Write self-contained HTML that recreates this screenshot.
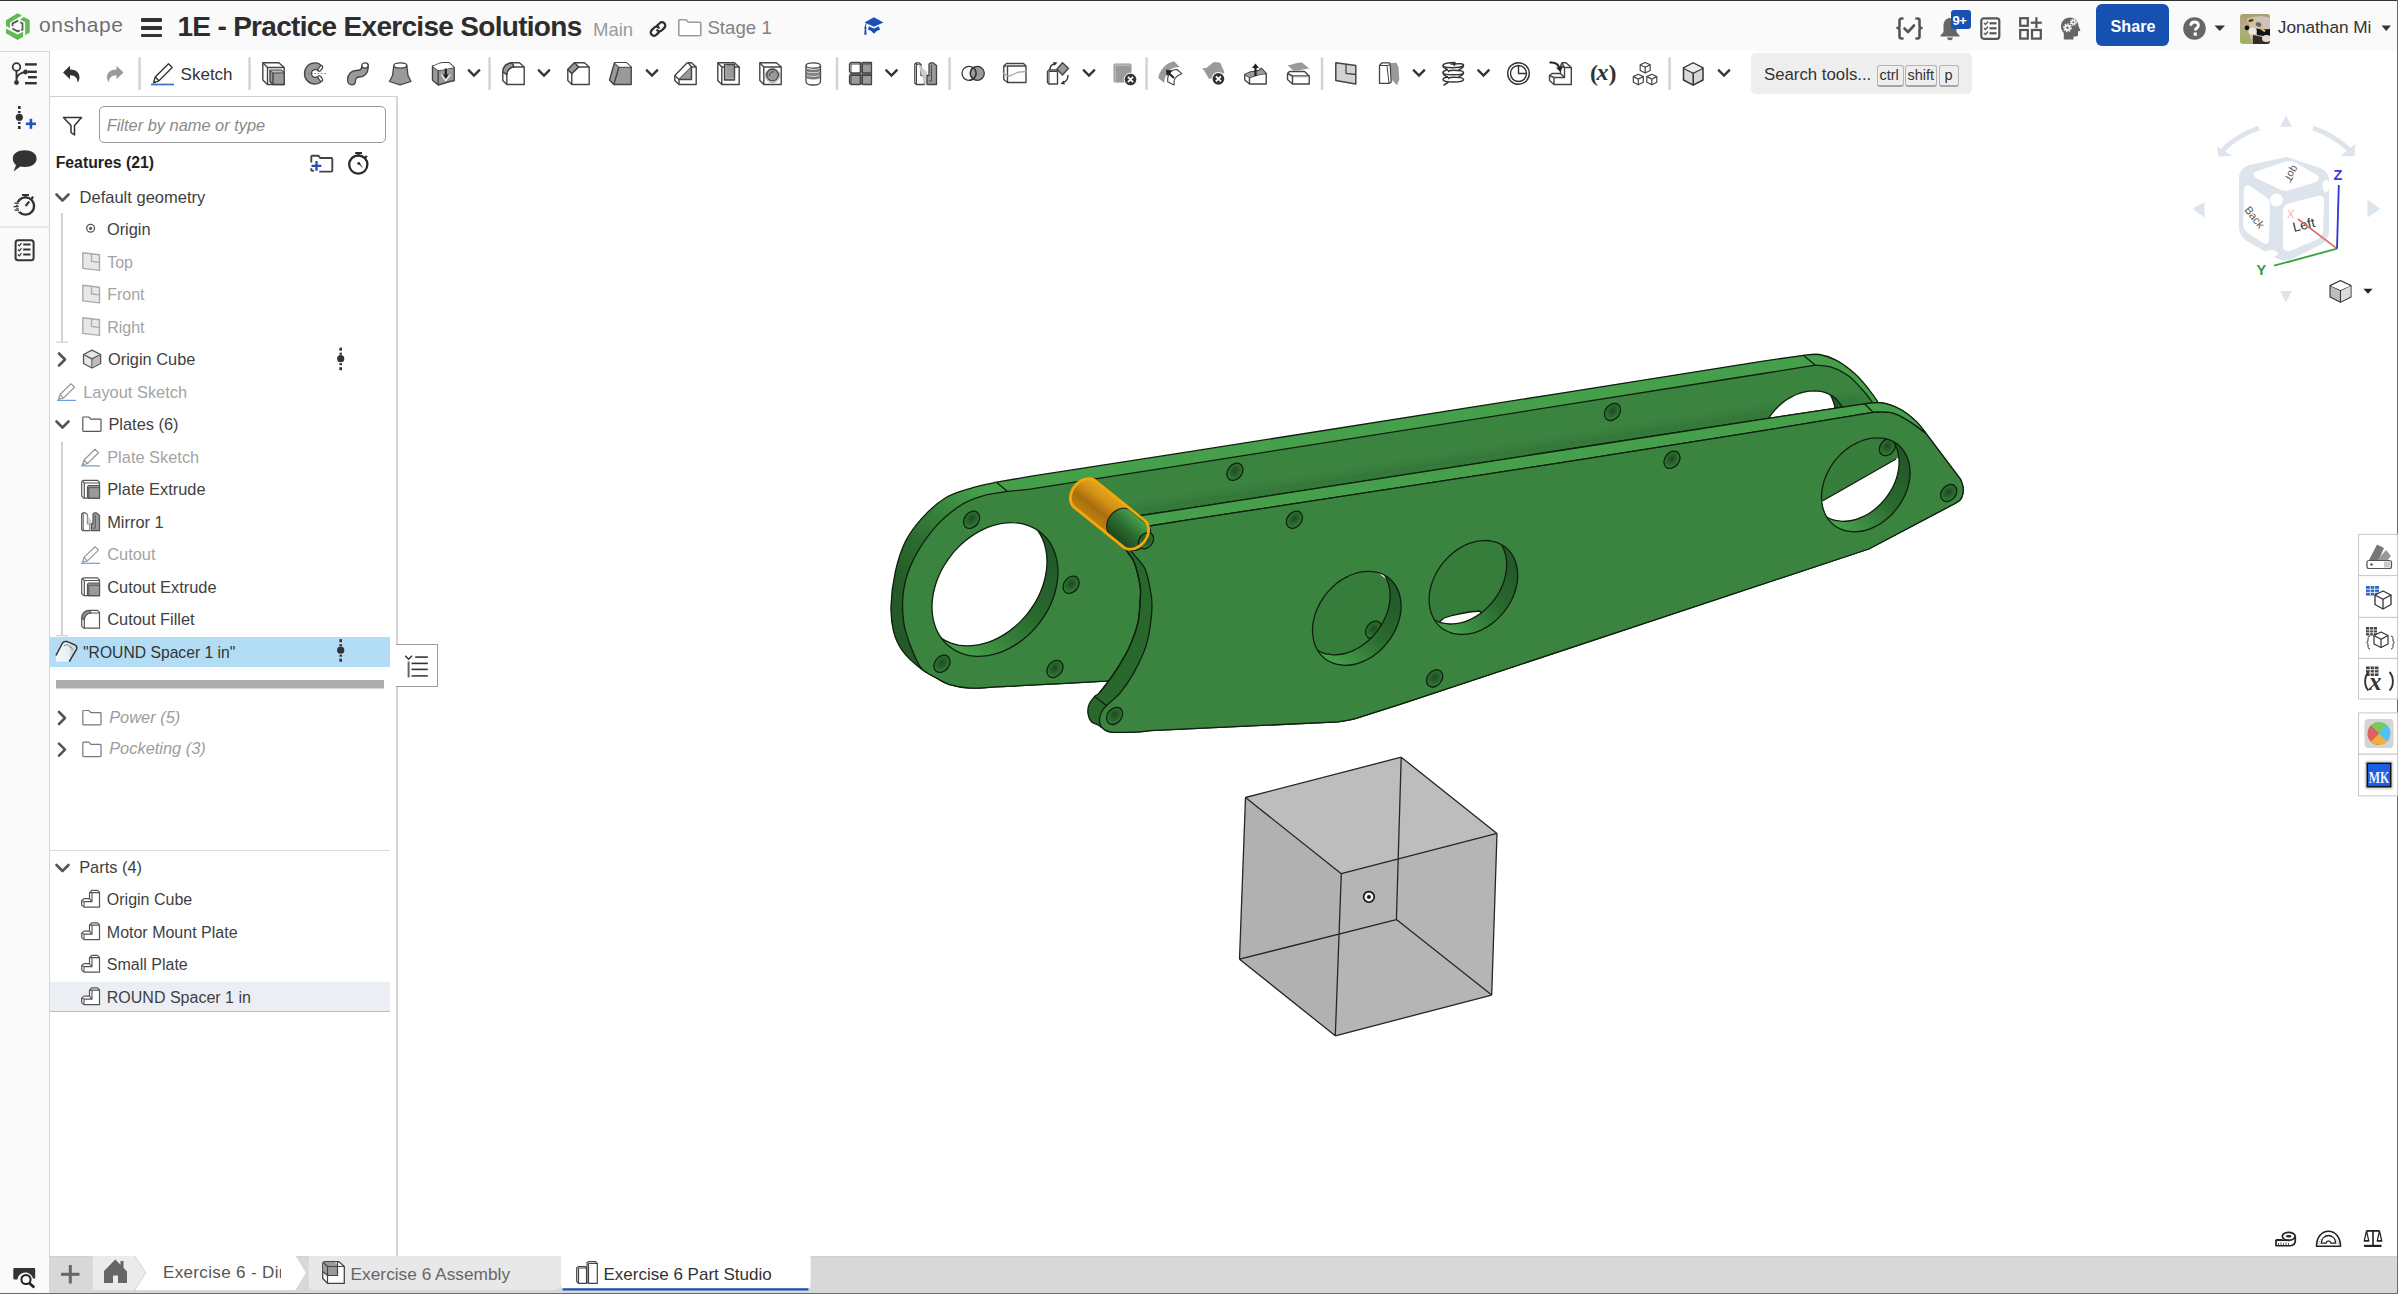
<!DOCTYPE html>
<html><head><meta charset="utf-8">
<style>
html,body{margin:0;padding:0;}
body{width:2398px;height:1294px;position:relative;overflow:hidden;background:#fff;font-family:"Liberation Sans",sans-serif;color:#333;}
.a{position:absolute;}
.t{position:absolute;white-space:nowrap;line-height:1;}
svg{position:absolute;overflow:visible;}
</style></head><body>
<div class="a" style="left:0px;top:0px;width:2398px;height:51px;background:#fafafa;"></div>
<div class="a" style="left:0px;top:0px;width:2398px;height:1px;background:#333;"></div>
<div class="a" style="left:0px;top:51px;width:49px;height:1243px;background:#fafafa;"></div>
<div class="a" style="left:0px;top:51px;width:49px;height:1px;background:#d6d6d6;"></div>
<div class="a" style="left:49px;top:51px;width:1px;height:1243px;background:#d6d6d6;"></div>
<div class="a" style="left:396px;top:96px;width:2px;height:1160px;background:#d6d6d6;"></div>
<div class="a" style="left:50px;top:1256px;width:2348px;height:37px;background:#d8d8d8;"></div>
<div class="a" style="left:0px;top:1293px;width:2398px;height:1px;background:#6b6b6b;"></div>
<div class="a" style="left:2397px;top:0px;width:1px;height:1294px;background:#6b6b6b;"></div>
<svg style="left:0px;top:8px;" width="36" height="36" viewBox="0 0 36 36"><g fill="#5fba4f">
<path d="M6,12.3 L17.5,5.3 L22,7.5 L10,14.4 L10,20 L6,18.1 Z"/>
<path d="M20,11.4 L23.7,8.9 L29.7,12 L29.7,24.4 L25.2,27.2 L25.2,14.3 Z"/>
<path d="M6,20.4 L17.5,26.4 L23.1,23.7 L23.1,28.8 L17.5,31.9 L6,25.3 Z"/>
</g>
<g fill="none" stroke="#5a5a5a" stroke-width="1.8" stroke-linejoin="miter">
<path d="M12.6,18.2 L12.6,15.4 L18.2,12.6"/>
<path d="M20.2,14.2 L22.5,15.5 L22.5,21.6 L21.2,22.3"/>
<path d="M12.4,20.5 L17.6,23.4 L19.8,22.2"/>
</g></svg>
<div class="t" style="left:39.00px;top:13.50px;font-size:21px;color:#707070;letter-spacing:0.55px;">onshape</div>
<div class="a" style="left:141px;top:18px;width:21px;height:3.5px;background:#333;border-radius:1px;"></div>
<div class="a" style="left:141px;top:26px;width:21px;height:3.5px;background:#333;border-radius:1px;"></div>
<div class="a" style="left:141px;top:33.6px;width:21px;height:3.5px;background:#333;border-radius:1px;"></div>
<div class="t" style="left:177.50px;top:13.00px;font-size:28px;color:#2d2d2d;font-weight:bold;letter-spacing:-0.7px;">1E - Practice Exercise Solutions</div>
<div class="t" style="left:593.00px;top:20.80px;font-size:18.5px;color:#9a9a9a;">Main</div>
<svg style="left:647px;top:18px;" width="22" height="22" viewBox="0 0 22 22"><g fill="none" stroke="#2f2f2f" stroke-width="2.3" stroke-linecap="round">
<path d="M10.2,7.6 L12.6,5.2 a3.3,3.3 0 0 1 4.7,4.7 L14.9,12.3 a3.3,3.3 0 0 1 -4.7,0"/>
<path d="M11.8,14.4 L9.4,16.8 a3.3,3.3 0 0 1 -4.7,-4.7 L7.1,9.7 a3.3,3.3 0 0 1 4.7,0"/>
</g></svg>
<svg style="left:677px;top:18px;" width="26" height="20" viewBox="0 0 26 20"><path d="M1.8,2.8 a1,1 0 0 1 1,-1 h6.2 l2.4,2.4 h11.4 a1,1 0 0 1 1,1 v11.6 a1,1 0 0 1 -1,1 h-20 a1,1 0 0 1 -1,-1 z" fill="#fff" stroke="#9b9b9b" stroke-width="1.6"/></svg>
<div class="t" style="left:707.40px;top:18.80px;font-size:18.7px;color:#828282;">Stage 1</div>
<svg style="left:0px;top:0px;" width="900" height="40" viewBox="0 0 900 40"><g fill="#1a4fb5">
<path d="M864.5,22.4 L874,17.2 L883.4,22.4 L874,26.8 Z"/>
<path d="M868.8,26.2 L874,28.4 L878.8,26.2 L880,29.8 L877,30.8 L874,33.8 L871,30.8 L868.1,29.8 Z"/>
<path d="M866.4,23.2 L867.2,23.6 C866.2,24.6 865.9,25.5 866,26.5 L866.6,27.8 L866.2,29.5 L866.6,34.8 L864.2,34.8 L864.7,29.5 L864.3,27.8 L865,26 C865,25 865.5,24 866.4,23.2 Z"/>
</g></svg>
<svg style="left:1896px;top:16px;" width="28" height="26" viewBox="0 0 28 26"><g fill="none" stroke="#555" stroke-width="2.6" stroke-linecap="round" stroke-linejoin="round">
<path d="M6.5,2.5 h-1 a2,2 0 0 0 -2,2 v5.5 a2,2 0 0 1 -2,2 a2,2 0 0 1 2,2 v6.5 a2,2 0 0 0 2,2 h1"/>
<path d="M20.5,2.5 h1 a2,2 0 0 1 2,2 v5.5 a2,2 0 0 0 2,2 a2,2 0 0 0 -2,2 v6.5 a2,2 0 0 1 -2,2 h-1"/>
<path d="M8.5,12.5 L12,16 L18,9.5"/>
</g></svg>
<svg style="left:1938px;top:15px;" width="26" height="27" viewBox="0 0 26 27"><path d="M12,3 C7.5,3 5.5,7 5.5,11 L5.5,17 L2.5,20.5 L2.5,21.5 L21.5,21.5 L21.5,20.5 L18.5,17 L18.5,11 C18.5,7 16.5,3 12,3 Z" fill="#666"/><path d="M9.2,22.5 a2.8,2.8 0 0 0 5.6,0 z" fill="#666"/></svg>
<div class="a" style="left:1951px;top:9.5px;width:19.5px;height:19.5px;background:#1a50b0;border-radius:3px;"></div>
<div class="t" style="left:1952.60px;top:14.20px;font-size:13px;color:#fff;font-weight:bold;letter-spacing:-0.5px;">9+</div>
<svg style="left:1979px;top:16px;" width="24" height="25" viewBox="0 0 24 25"><rect x="2.3" y="2.3" width="18" height="20.5" rx="2.5" fill="none" stroke="#555" stroke-width="2.2"/>
<g fill="none" stroke="#555" stroke-width="1.3"><path d="M5,7 l1.5,1.5 l2.5,-3"/><path d="M5,12 l1.5,1.5 l2.5,-3"/><path d="M5,17 l1.5,1.5 l2.5,-3"/></g>
<g fill="#555"><rect x="10.5" y="6.2" width="7" height="2.2"/><rect x="10.5" y="11.2" width="7" height="2.2"/><rect x="10.5" y="16.2" width="7" height="2.2"/></g></svg>
<svg style="left:2018px;top:16px;" width="26" height="26" viewBox="0 0 26 26"><g fill="none" stroke="#555" stroke-width="2.2">
<rect x="2.2" y="2.2" width="7.6" height="7.6"/><rect x="2.2" y="14" width="7.6" height="8.6"/><rect x="14" y="14" width="8.8" height="8.6"/></g>
<g fill="#555"><rect x="17.3" y="1.2" width="2.2" height="11"/><rect x="12.8" y="5.6" width="11" height="2.2"/></g></svg>
<svg style="left:2059px;top:15px;" width="24" height="27" viewBox="0 0 24 27"><path d="M11,2.5 C5.5,2.5 2,6.5 2,11.5 C2,14.5 3.3,16.5 4.8,18 L4.8,24.5 L14.5,24.5 L14.5,21.5 L17,21.5 C18.5,21.5 19,20.5 19,19.5 L19,16.5 L21.5,15.5 L19.5,11 C19.2,6 15.8,2.5 11,2.5 Z" fill="#666"/>
<g fill="#f9f9f9"><circle cx="8.5" cy="12.8" r="3.3"/><circle cx="14.3" cy="7.3" r="2.5"/></g>
<g fill="#666"><circle cx="8.5" cy="12.8" r="1.3"/><circle cx="14.3" cy="7.3" r="1"/></g>
<g stroke="#f9f9f9" stroke-width="1.2" fill="none"><circle cx="8.5" cy="12.8" r="3.9" stroke-dasharray="1.5 1.5"/><circle cx="14.3" cy="7.3" r="3" stroke-dasharray="1.2 1.2"/></g></svg>
<div class="a" style="left:2096px;top:4px;width:73px;height:41.5px;background:#1650b0;border-radius:6px;"></div>
<div class="t" style="left:2110.50px;top:17.50px;font-size:16.2px;color:#fff;font-weight:bold;">Share</div>
<svg style="left:2182px;top:16px;" width="25" height="25" viewBox="0 0 25 25"><circle cx="12.5" cy="12.5" r="11.3" fill="#666"/>
<path d="M8.8,9.8 C8.8,7.3 10.5,6 12.6,6 C14.8,6 16.4,7.4 16.4,9.4 C16.4,11.6 14,12.2 13.5,13.5 L13.5,14.6" fill="none" stroke="#fff" stroke-width="2.8"/>
<rect x="11.6" y="16.5" width="3.3" height="3.2" fill="#fff"/></svg>
<svg style="left:2214px;top:25px;" width="12" height="7" viewBox="0 0 12 7"><path d="M0.5,0.5 L11,0.5 L5.75,6 Z" fill="#333"/></svg>
<div class="a" style="left:2240px;top:14px;width:30px;height:30px;border-radius:3px;overflow:hidden;background:linear-gradient(180deg,#a9a070 0%,#bba88c 35%,#a8ae72 70%,#9fb060 100%);">
<svg style="left:0;top:0" width="30" height="30"><path d="M13,3 C18,1.5 26,2 30,4 L30,30 L13,30 C11,25 8.5,21 9,16 C9.5,10 10,5 13,3Z" fill="#cdc3b8"/><path d="M16,14.5 C21,15.5 26,15.5 30,15 L30,23 C26,22 21,22 17,21Z" fill="#141210"/><path d="M13,21 C18,22 24,23 30,26 L30,30 L13,30 C12.5,27 12.5,24 13,21Z" fill="#352b25"/><ellipse cx="26.5" cy="24.5" rx="4.5" ry="3.5" fill="#e2dad2"/><ellipse cx="12.5" cy="17" rx="4.2" ry="3.6" fill="#ede5d8"/><circle cx="7" cy="13.8" r="2.4" fill="#111"/><path d="M14,8.5 L25,17.5" stroke="#d4bb86" stroke-width="2.2"/><ellipse cx="11" cy="6.5" rx="3.4" ry="2.2" fill="#3a3d48" stroke="#d9c08a" stroke-width="1.6" transform="rotate(-15 11 6.5)"/><ellipse cx="18.5" cy="10.5" rx="3.6" ry="2.8" fill="#5a6478" stroke="#d9c08a" stroke-width="1.6" transform="rotate(20 18.5 10.5)"/></svg></div>
<div class="t" style="left:2277.80px;top:18.80px;font-size:17.2px;color:#333;">Jonathan Mi</div>
<svg style="left:2381px;top:25px;" width="11" height="7" viewBox="0 0 11 7"><path d="M0.5,0.5 L10,0.5 L5.25,6 Z" fill="#333"/></svg>
<div class="a" style="left:50px;top:96px;width:347px;height:1px;background:#d0d0d0;"></div>
<svg style="left:0;top:0" width="2398" height="100" viewBox="0 0 2398 100"><g transform="translate(62.5,64)"><path d="M0.5,8.5 L7.5,1.8 L7.5,5.6 C13,5.4 17,8.3 17,13.6 C17,15.8 16,17.5 14.8,18.3 C15.3,14.2 12.5,11.2 7.5,11.3 L7.5,15.2 Z" fill="#333"/></g><g transform="translate(107,64)"><path d="M16.5,8.5 L9.5,1.8 L9.5,5.6 C4,5.4 0,8.3 0,13.6 C0,15.8 1,17.5 2.2,18.3 C1.7,14.2 4.5,11.2 9.5,11.3 L9.5,15.2 Z" fill="#9a9a9a"/></g><g transform="translate(151,63)"><path d="M2.5,20 L4.2,14 L17.5,0.8 L21.2,4.5 L8,17.8 Z M4.2,14 L8,17.8 M6,15.8" fill="#fff" stroke="#333" stroke-width="1.3" stroke-linejoin="round"/><path d="M2.5,20 L3.2,17.4 L5.1,19.3 Z" fill="#333"/><rect x="0" y="20.6" width="23" height="1.8" fill="#3f77d0"/></g><g transform="translate(262,62)"><path d="M0.8,0.8 L16.8,0.8 L22.2,5.5 L22.2,22.5 L5.5,22.5 L0.8,18 Z" fill="#fff" stroke="#444" stroke-width="1.4" stroke-linejoin="round"/><path d="M5.5,5.5 L22.2,5.5 M5.5,5.5 L5.5,22.5 M0.8,0.8 L5.5,5.5" fill="none" stroke="#444" stroke-width="1.4" stroke-linejoin="round"/><path d="M8,8.2 L19.5,8.2 L22.2,10.8 L22.2,22.5 L11,22.5 L8,19.8 Z" fill="#9a9a9a" stroke="#444" stroke-width="1.4" stroke-linejoin="round"/><path d="M11,10.8 L22.2,10.8 M11,10.8 L11,22.5 M8,8.2 L11,10.8" fill="none" stroke="#444" stroke-width="1.4" stroke-linejoin="round"/><path d="M8.5,8.6 L19.3,8.6 L21.5,10.5 L11,10.5Z" fill="#bdbdbd"/></g><g transform="translate(304,62)"><path d="M18.5,5 C16.5,2 13.5,0.8 11,0.8 C5,0.8 0.5,5.5 0.5,11.5 C0.5,17.5 5,22 11,22 C13.5,22 16.5,21 18.5,18 L14.5,14.5 C13.5,15 12.5,15.3 11.5,15.3 C9.3,15.3 7.5,13.6 7.5,11.5 C7.5,9.4 9.3,7.7 11.5,7.7 C12.5,7.7 13.5,8 14.5,8.6 Z" fill="#9a9a9a" stroke="#444" stroke-width="1.3"/><ellipse cx="16.3" cy="6.5" rx="1.6" ry="3.2" transform="rotate(35 16.3 6.5)" fill="#fff" stroke="#444" stroke-width="1.2"/><ellipse cx="16.3" cy="16.5" rx="1.6" ry="3.2" transform="rotate(-35 16.3 16.5)" fill="#fff" stroke="#444" stroke-width="1.2"/><path d="M0.5,11.5 L23,11.5" stroke="#555" stroke-width="0.8" stroke-dasharray="1.5 1.8"/></g><g transform="translate(347,61.5)"><path d="M17.5,3.5 L21.2,3.5 L21.2,6 C21.2,12 17,15.5 12.5,15.5 C9.5,15.5 8.5,17 8.5,19.5 C8.5,22 7,23.3 4.8,23.3 C2.5,23.3 0.5,21.5 0.5,18.5 C0.5,12.5 4.5,9 9,9 C13,9 14.7,8 14.7,5 Z" fill="#9a9a9a" stroke="#444" stroke-width="1.3" stroke-linejoin="round"/><ellipse cx="18" cy="4" rx="3.2" ry="2.6" fill="#fff" stroke="#444" stroke-width="1.3"/></g><g transform="translate(389,61.5)"><path d="M4.8,4 L3.5,14 L0.5,20 L11,23.3 L22,20 L19,14 L17.8,4 Z" fill="#9a9a9a" stroke="#444" stroke-width="1.3" stroke-linejoin="round"/><ellipse cx="11.3" cy="4" rx="6.5" ry="2.6" fill="#fff" stroke="#444" stroke-width="1.3"/></g><g transform="translate(432,62)"><path d="M0.5,4 C4,4 6,1 11,0.8 L17.2,0.8 L22.2,5.5 L22.2,18.8 C17,19.5 14,20.8 6.2,23 L0.5,18.2 Z" fill="#9a9a9a" stroke="#444" stroke-width="1.4" stroke-linejoin="round"/><path d="M0.5,4 L6.2,8.5 L6.2,23 M6.2,8.5 C12,8 17,6 22.2,5.5" fill="none" stroke="#444" stroke-width="1.4" stroke-linejoin="round"/><path d="M0.8,4.2 C4,4 6,1.3 11,1.1 L17,1.1 L21.8,5.5 C17,6 12,8 6.2,8.2 Z" fill="#fff"/><path d="M9.3,12.5 L13.8,18.5 L18.3,12.5" fill="none" stroke="#fff" stroke-width="1.2"/><path d="M13.8,6.5 L13.8,14" stroke="#222" stroke-width="2.2"/><path d="M10.8,12.5 L13.8,16.8 L16.8,12.5 Z" fill="#222"/></g><g transform="translate(502,62)"><path d="M0.8,10 C0.8,4.5 4.5,0.8 10,0.8 L17.5,0.8 L22.2,5 L22.2,22.5 L4.8,22.5 L0.8,18.5 Z" fill="#fff" stroke="#444" stroke-width="1.4" stroke-linejoin="round"/><path d="M4.8,22.5 L4.8,12.5 C4.8,8.5 8,5 12,5 L22.2,5 M0.8,10 L4.8,12.5 M10,0.8 L12,5" fill="none" stroke="#444" stroke-width="1.4" stroke-linejoin="round"/><path d="M1,10 C1,4.6 4.6,1 10,1 L12,5 C8,5 4.8,8.5 4.8,12.5 Z" fill="#9a9a9a" stroke="#444" stroke-width="1.4" stroke-linejoin="round"/></g><g transform="translate(567,62)"><path d="M0.8,7.5 L7.5,0.8 L17.5,0.8 L22.2,5 L22.2,22.5 L4.8,22.5 L0.8,18.5 Z" fill="#fff" stroke="#444" stroke-width="1.4" stroke-linejoin="round"/><path d="M4.8,22.5 L4.8,11.5 L11.5,5 L22.2,5 M0.8,7.5 L4.8,11.5 M7.5,0.8 L11.5,5" fill="none" stroke="#444" stroke-width="1.4" stroke-linejoin="round"/><path d="M0.8,7.5 L7.5,0.8 L11.5,5 L4.8,11.5 Z" fill="#9a9a9a" stroke="#444" stroke-width="1.4" stroke-linejoin="round"/></g><g transform="translate(609,62)"><path d="M5.5,0.8 L17.5,0.8 L22.2,5 L22.2,22.5 L4.8,22.5 L0.5,18 Z" fill="#9a9a9a" stroke="#444" stroke-width="1.4" stroke-linejoin="round"/><path d="M4.8,22.5 L10,5 L22.2,5 M5.5,0.8 L10,5" fill="none" stroke="#444" stroke-width="1.4" stroke-linejoin="round"/><path d="M6,1.1 L17.3,1.1 L21.6,4.7 L10,4.7 Z" fill="#fff"/></g><g transform="translate(674,62)"><path d="M0.8,13.5 L13,1 L14.5,0.8 L17.5,0.8 L22.2,5 L22.2,22.5 L5,22.5 L0.8,18.5 Z" fill="#fff" stroke="#444" stroke-width="1.4" stroke-linejoin="round"/><path d="M5,22.5 L5,17.5 L17.5,5 L22.2,5 M0.8,13.5 L5,17.5 M14.5,0.8 L17.5,5 M17.5,5 L17.5,17.5 L5,17.5" fill="none" stroke="#444" stroke-width="1.4" stroke-linejoin="round"/><path d="M6,16.5 L16.5,6 L16.5,16.5 Z" fill="#9a9a9a" stroke="#777" stroke-width="0.8"/></g><g transform="translate(717,62)"><path d="M0.8,0.8 L17.5,0.8 L22.2,5 L22.2,22.5 L4.8,22.5 L0.8,18.5 Z" fill="#fff" stroke="#444" stroke-width="1.4" stroke-linejoin="round"/><path d="M4.8,22.5 L4.8,5 L22.2,5 M0.8,0.8 L4.8,5" fill="none" stroke="#444" stroke-width="1.4" stroke-linejoin="round"/><path d="M7.5,2.5 L17.5,2.5 L17.5,18 L7.5,18 Z" fill="#9a9a9a" stroke="#444" stroke-width="1.4" stroke-linejoin="round"/><path d="M9,2.5 L9,16.5 L17.5,16.5" fill="none" stroke="#bbb" stroke-width="0.8"/></g><g transform="translate(759,62)"><path d="M0.8,0.8 L17.5,0.8 L22.2,5 L22.2,22.5 L4.8,22.5 L0.8,18.5 Z" fill="#fff" stroke="#444" stroke-width="1.4" stroke-linejoin="round"/><path d="M4.8,22.5 L4.8,5 L22.2,5 M0.8,0.8 L4.8,5" fill="none" stroke="#444" stroke-width="1.4" stroke-linejoin="round"/><circle cx="13.5" cy="13.5" r="7" fill="#fff" stroke="#999" stroke-width="1"/><circle cx="13.5" cy="13" r="5.8" fill="#9a9a9a" stroke="#444" stroke-width="1.3"/><path d="M10.5,14 C10.5,11 12,9.5 15,9.8" fill="none" stroke="#444" stroke-width="1"/></g><g transform="translate(805.5,62)"><path d="M0.5,3.5 L0.5,19.5 C0.5,21.8 3,23 7.7,23 C12.4,23 15,21.8 15,19.5 L15,3.5" fill="#fff" stroke="#444" stroke-width="1.3"/><ellipse cx="7.7" cy="3.5" rx="7.2" ry="2.7" fill="#fff" stroke="#444" stroke-width="1.3"/><g fill="#888" stroke="#555" stroke-width="0.6"><path d="M0.8,6.5 C3,8.6 12.5,8.6 14.7,6.5 L14.7,8.5 C12.5,10.6 3,10.6 0.8,8.5Z"/><path d="M0.8,10 C3,12.1 12.5,12.1 14.7,10 L14.7,12 C12.5,14.1 3,14.1 0.8,12Z"/><path d="M0.8,13.5 C3,15.6 12.5,15.6 14.7,13.5 L14.7,15.5 C12.5,17.6 3,17.6 0.8,15.5Z"/></g></g><g transform="translate(849,62)"><g stroke="#444" stroke-width="1.3" stroke-linejoin="round"><path d="M0.5,2 L2,0.5 L11.3,0.5 L11.3,11 L2,11 L0.5,9.5Z" fill="#fff"/><path d="M12,2 L13.5,0.5 L22.5,0.5 L22.5,11 L13.5,11 L12,9.5Z" fill="#9a9a9a"/><path d="M0.5,13.5 L2,12 L11.3,12 L11.3,22.5 L2,22.5 L0.5,21Z" fill="#9a9a9a"/><path d="M12,13.5 L13.5,12 L22.5,12 L22.5,22.5 L13.5,22.5 L12,21Z" fill="#9a9a9a"/></g><g fill="none" stroke="#444" stroke-width="1"><path d="M2,2 L11.3,2 M2,2 L2,11"/><path d="M13.5,2 L22.5,2 M13.5,2 L13.5,11"/><path d="M2,13.5 L11.3,13.5 M2,13.5 L2,22.5"/><path d="M13.5,13.5 L22.5,13.5 M13.5,13.5 L13.5,22.5"/></g></g><g transform="translate(914,62)"><path d="M0.8,2 L2.5,0.8 L5,0.8 L7,2.5 L7,13.5 L10.5,13.5 L10.5,22.5 L2.5,22.5 L0.8,21Z" fill="#fff" stroke="#444" stroke-width="1.3" stroke-linejoin="round"/><path d="M2.5,0.8 L2.5,22.5 M2.5,2.5 L7,2.5" fill="none" stroke="#444" stroke-width="1"/><path d="M4,1 L13,10 L13,21 L10.5,22.5" fill="#ccc" stroke="none" opacity="0.9"/><path d="M15,2 L16.7,0.8 L19,0.8 L22.5,3.5 L22.5,22.5 L13,22.5 L13,13.5 L15,13.5Z" fill="#9a9a9a" stroke="#444" stroke-width="1.3" stroke-linejoin="round"/><path d="M17.5,3 L17.5,19 L15,19" fill="none" stroke="#444" stroke-width="0.9"/></g><g transform="translate(961.5,61.5)"><circle cx="7.5" cy="11.8" r="7" fill="#fff" stroke="#333" stroke-width="1.3"/><circle cx="15.8" cy="11.8" r="7" fill="#9a9a9a" stroke="#333" stroke-width="1.3"/><path d="M11.7,6.1 A7,7 0 0 1 11.7,17.5 A7,7 0 0 1 11.7,6.1Z" fill="#9a9a9a" stroke="#333" stroke-width="1.3"/><path d="M14.5,11.8 A7,7 0 0 1 7.5,18.8" fill="none" stroke="#333" stroke-width="1.3"/></g><g transform="translate(1003,62)"><path d="M0.8,4 L3.5,1.5 L20.5,1.5 L23,4 L23,20.5 L4.5,20.5 L0.8,17.5 Z" fill="#fff" stroke="#444" stroke-width="1.4" stroke-linejoin="round"/><path d="M4.5,20.5 L4.5,4 L23,4 M0.8,4 L3.5,4" fill="none" stroke="#444" stroke-width="1.4" stroke-linejoin="round"/><path d="M-0.5,10 C2,12 3,14.5 6,14 C10,13.5 13,10 17,10 L23.5,9.5" fill="none" stroke="#aaa" stroke-width="1.3"/></g><g transform="translate(1046.5,62)"><path d="M1,9.5 L2.5,8 L11,8 L11,22 L2.5,22 L1,20.5Z" fill="#fff" stroke="#444" stroke-width="1.4" stroke-linejoin="round"/><path d="M2.5,9.5 L11,9.5 M2.5,9.5 L2.5,22" fill="none" stroke="#444" stroke-width="1"/><path d="M16,0.8 L22,6.2 L16,13 L10.5,7 Z" fill="#9a9a9a" stroke="#444" stroke-width="1.4" stroke-linejoin="round"/><path d="M3.5,7.5 C3.5,4 5.5,2.5 8,2" fill="none" stroke="#333" stroke-width="1.4"/><path d="M6.5,0 L11,0.5 L8,3.8Z" fill="#333"/><path d="M21.5,13 C21.5,17 20,19.5 16.5,20.5" fill="none" stroke="#333" stroke-width="1.4"/><path d="M18.5,22.5 L14,22 L17,18.5Z" fill="#333"/></g><g transform="translate(1113,63)"><path d="M0.5,1.5 L1.8,0.5 L17.5,0.5 L18.5,1.5 L18.5,19.5 L1.8,19.5 L0.5,18.5Z" fill="#9a9a9a"/><path d="M1.8,1.5 L18.5,1.5 L18.5,3 L3,3 L3,19.5 L1.8,19.5Z" fill="#bbb"/><circle cx="17.5" cy="16.5" r="6.3" fill="#333" stroke="#fff" stroke-width="1"/><path d="M14.9,13.9 L20.1,19.1 M20.1,13.9 L14.9,19.1" stroke="#fff" stroke-width="1.7"/></g><g transform="translate(1157.5,61.5)"><path d="M0.7,16.4 C2,9 8,1.5 16.6,-0.3 L22.3,5.4 C15.5,5.5 10.5,8.5 8.8,13.5 C7.5,16 6.5,20 6.7,21.4 Z" fill="#9a9a9a"/><path d="M10.2,16.4 C11,12 13.5,9.5 16.4,8.2 L19.5,8 L24.3,12.2 C20.5,13.5 17.5,15.5 16.7,19 L16.5,23.5 L10.2,20.3 Z" fill="#fff" stroke="#444" stroke-width="1.1" stroke-linejoin="round"/><path d="M10.7,11 L16.4,16.5" stroke="#222" stroke-width="2.1"/><path d="M8.5,8.2 L15.2,9 L9.2,14.6 Z" fill="#222"/></g><g transform="translate(1199.5,62)"><path d="M2.6,6.1 C4.5,6.3 6,6 7.2,5.8 C10,4 12.5,0.3 15.7,0.1 L20.7,0.8 C22,3.5 23.5,7 25,10.4 L18,16 L9.4,16.8 C7,13 5,9 2.6,6.1 Z" fill="#9a9a9a"/><circle cx="18.9" cy="16.8" r="6.9" fill="#fff"/><circle cx="18.9" cy="16.8" r="5.9" fill="#333"/><path d="M16.4,14.3 L21.4,19.3 M21.4,14.3 L16.4,19.3" stroke="#fff" stroke-width="1.8"/></g><g transform="translate(1244,62)"><path d="M0.8,12.5 C4,11 6.5,9.5 10,9.5 L13,9 C15,9 16,8 16.5,6.5 L17.5,6.5 L22.2,11.5 L22.2,22 L5.5,22 L0.8,18Z" fill="#fff" stroke="#444" stroke-width="1.4" stroke-linejoin="round"/><path d="M5.5,22 L5.5,15.5 C8,15 12,13 16,12.3 L22.2,11.5 M0.8,12.5 L5.5,15.5" fill="none" stroke="#444" stroke-width="1.4" stroke-linejoin="round"/><path d="M1.3,12.6 C4,11 6.5,10 10,10 L13,9.5 C15,9.4 16,8.3 16.7,7 L21.7,11.5 C12,12.5 8,15 5.5,15.2Z" fill="#9a9a9a"/><path d="M11.5,14 L11.5,5" stroke="#222" stroke-width="2.3"/><path d="M8,6 L11.5,1.5 L15,6Z" fill="#222"/></g><g transform="translate(1287,62)"><path d="M0.5,11.5 L2.5,9.5 L17.5,9.5 L22.2,14 L22.2,22 L5.5,22 L0.5,17.5Z" fill="#fff" stroke="#444" stroke-width="1.4" stroke-linejoin="round"/><path d="M5.5,22 L5.5,14 L22.2,14 M0.5,11.5 L5.5,14" fill="none" stroke="#444" stroke-width="1.4" stroke-linejoin="round"/><path d="M6.3,15 L21.5,15" stroke="#ccc" stroke-width="1"/><path d="M0.5,3.2 C5,3 9,0.5 15,0.5 L22.2,6.5 C17,7 13,8.5 6.5,8.8 Z" fill="#9a9a9a"/></g><g transform="translate(1335,62)"><path d="M0.8,0.8 L20.8,3.5 L20.8,22 L0.8,18.5 Z" fill="#d3d3d3" stroke="#444" stroke-width="1.5" stroke-linejoin="round"/><path d="M11,2.2 L11,11.3 L20.8,12.5" fill="none" stroke="#444" stroke-width="1.3"/></g><g transform="translate(1379,62)"><path d="M11.5,1 L17.5,0.8 L19.5,5 L20.3,17.5 L18,23.3 L12.5,17.5Z" fill="#9a9a9a"/><path d="M0.5,3.5 L3,0.8 L10.5,0.8 L11.2,2.8 L12.2,20 L10.5,21.3 L0.5,21.3Z" fill="#fff" stroke="#444" stroke-width="1.3" stroke-linejoin="round"/><path d="M0.5,3.5 L8,3.5 L11.2,2.8 M8,3.5 L10,21.3" fill="none" stroke="#444" stroke-width="1"/></g><g transform="translate(1442.5,62)"><g fill="none" stroke="#333" stroke-width="1.5"><path d="M11,2 C17,1.3 21,1.8 21,3.3 C21,5 14,5.8 7,5.6 C1.5,5.5 0.5,4.2 0.5,3.3 C0.5,1.8 5,0.5 13,0.5"/><path d="M8,2 C12,1.8 14,2.6 11,3.3"/><path d="M0.5,3.3 C0.5,5 1,6.5 5.5,7.8 C2,8.5 0.5,9.5 0.5,10.5 C0.5,12 5,12.8 11,12.8 C17,12.8 21,12 21,10.5 C21,9 17,8.2 11,8.2 C7,8.2 5,9 6.5,10"/><path d="M21,3.3 C21,5.5 19,6.8 16,7.6"/><path d="M0.5,10.5 C0.5,12 1,13.5 5.5,15 C2,15.5 0.5,16.5 0.5,17.5 C0.5,19 5,20 11,20 C17,20 21,19 21,17.5 C21,16 17,15.3 11,15.3 C7,15.3 5,16 6.5,17"/><path d="M21,10.5 C21,12.5 19,13.8 16,14.5"/><path d="M6,20 L1,23.3"/></g></g><g transform="translate(1507,62)"><circle cx="11.5" cy="11.5" r="10.8" fill="#fff" stroke="#333" stroke-width="1.4"/><circle cx="11.5" cy="11.5" r="8" fill="#fff" stroke="#333" stroke-width="1.4"/><path d="M11.5,3.5 L11.5,11.5 L19.5,11.5" fill="none" stroke="#333" stroke-width="1.4"/></g><g transform="translate(1549,62)"><path d="M0.5,13.5 L3,11.5 L11.5,11.5 L11.5,4 L13,0.8 L17,0.8 L22.3,5.5 L22.3,22.5 L5,22.5 L0.5,18.5Z" fill="#fff" stroke="#444" stroke-width="1.4" stroke-linejoin="round"/><path d="M5,22.5 L5,15.5 L15.5,15.5 L15.5,5.5 L22.3,5.5 M0.5,13.5 L5,15.5 M11.5,11.5 L15.5,15.5 M13,0.8 L15.5,5.5 M11.5,4 L15.5,5.5" fill="none" stroke="#444" stroke-width="1.4" stroke-linejoin="round"/><path d="M0.5,0.5 C5,0 9,1.5 10.5,6" fill="none" stroke="#222" stroke-width="2"/><path d="M7,5.5 L11.3,10 L13.8,4.8Z" fill="#222"/></g><g transform="translate(1590,61.5)"><text x="0" y="19" font-family="Liberation Serif" font-weight="bold" font-size="24" fill="#333">(</text><text x="6.5" y="18" font-family="Liberation Serif" font-weight="bold" font-style="italic" font-size="24" fill="#333">x</text><text x="18.5" y="19" font-family="Liberation Serif" font-weight="bold" font-size="24" fill="#333">)</text></g><g transform="translate(1632.5,62)"><g transform="translate(7.2,0)"><path d="M5.5,0.5 L10.5,2.8 L10.5,8.5 L5.5,11 L0.5,8.5 L0.5,2.8Z" fill="#fff" stroke="#444" stroke-width="1.2" stroke-linejoin="round"/><path d="M0.5,2.8 L5.5,5.3 L10.5,2.8 M5.5,5.3 L5.5,11" fill="none" stroke="#444" stroke-width="1.2"/></g><g transform="translate(0.3,11.8)"><path d="M5.5,0.5 L10.5,2.8 L10.5,8.5 L5.5,11 L0.5,8.5 L0.5,2.8Z" fill="#fff" stroke="#444" stroke-width="1.2" stroke-linejoin="round"/><path d="M0.5,2.8 L5.5,5.3 L10.5,2.8 M5.5,5.3 L5.5,11" fill="none" stroke="#444" stroke-width="1.2"/></g><g transform="translate(13.8,11.8)"><path d="M5.5,0.5 L10.5,2.8 L10.5,8.5 L5.5,11 L0.5,8.5 L0.5,2.8Z" fill="#fff" stroke="#444" stroke-width="1.2" stroke-linejoin="round"/><path d="M0.5,2.8 L5.5,5.3 L10.5,2.8 M5.5,5.3 L5.5,11" fill="none" stroke="#444" stroke-width="1.2"/></g></g><g transform="translate(1683,62)"><path d="M10.2,0.8 L20,6 L20,18 L10.2,23.2 L0.5,18 L0.5,6Z" fill="#d8d8d8" stroke="#333" stroke-width="1.5" stroke-linejoin="round"/><path d="M0.5,6 L10.2,11.2 L20,6 M10.2,11.2 L10.2,23.2" fill="none" stroke="#333" stroke-width="1.5"/><path d="M1.3,6.3 L10.2,1.6 L19.2,6.3 L10.2,10.6Z" fill="#ececec"/></g><path d="M469,70.5 L474,75.5 L479,70.5" fill="none" stroke="#333" stroke-width="2.4" stroke-linecap="square"/><path d="M539,70.5 L544,75.5 L549,70.5" fill="none" stroke="#333" stroke-width="2.4" stroke-linecap="square"/><path d="M647,70.5 L652,75.5 L657,70.5" fill="none" stroke="#333" stroke-width="2.4" stroke-linecap="square"/><path d="M886.5,70.5 L891.5,75.5 L896.5,70.5" fill="none" stroke="#333" stroke-width="2.4" stroke-linecap="square"/><path d="M1084,70.5 L1089,75.5 L1094,70.5" fill="none" stroke="#333" stroke-width="2.4" stroke-linecap="square"/><path d="M1414,70.5 L1419,75.5 L1424,70.5" fill="none" stroke="#333" stroke-width="2.4" stroke-linecap="square"/><path d="M1478.5,70.5 L1483.5,75.5 L1488.5,70.5" fill="none" stroke="#333" stroke-width="2.4" stroke-linecap="square"/><path d="M1719,70.5 L1724,75.5 L1729,70.5" fill="none" stroke="#333" stroke-width="2.4" stroke-linecap="square"/><rect x="138.3" y="57.3" width="2.5" height="32.5" fill="#d3d3d3"/><rect x="248.3" y="57.3" width="2.5" height="32.5" fill="#d3d3d3"/><rect x="488.3" y="57.3" width="2.5" height="32.5" fill="#d3d3d3"/><rect x="835.8" y="57.3" width="2.5" height="32.5" fill="#d3d3d3"/><rect x="948.3" y="57.3" width="2.5" height="32.5" fill="#d3d3d3"/><rect x="1145.3" y="57.3" width="2.5" height="32.5" fill="#d3d3d3"/><rect x="1320.8" y="57.3" width="2.5" height="32.5" fill="#d3d3d3"/><rect x="1668.3" y="57.3" width="2.5" height="32.5" fill="#d3d3d3"/></svg>
<div class="t" style="left:180.60px;top:66.00px;font-size:17px;color:#333;">Sketch</div>
<div class="a" style="left:1751px;top:53px;width:221px;height:41px;background:#eeeeee;border-radius:5px;"></div>
<div class="t" style="left:1764.00px;top:66.70px;font-size:16.8px;color:#333;">Search tools...</div>
<div class="a" style="left:1876.5px;top:64.5px;width:27px;height:22px;background:#eee;border:1px solid #b5b5b5;border-bottom:2px solid #a5a5a5;border-radius:3px;box-sizing:border-box;"></div>
<div class="t" style="left:1879.50px;top:68.00px;font-size:14.5px;color:#333;">ctrl</div>
<div class="a" style="left:1904.5px;top:64.5px;width:32.5px;height:22px;background:#eee;border:1px solid #b5b5b5;border-bottom:2px solid #a5a5a5;border-radius:3px;box-sizing:border-box;"></div>
<div class="t" style="left:1907.50px;top:68.00px;font-size:14.5px;color:#333;">shift</div>
<div class="a" style="left:1939px;top:64.5px;width:19.5px;height:22px;background:#eee;border:1px solid #b5b5b5;border-bottom:2px solid #a5a5a5;border-radius:3px;box-sizing:border-box;"></div>
<div class="t" style="left:1944.50px;top:68.00px;font-size:14.5px;color:#333;">p</div>
<svg style="left:0;top:0" width="50" height="300" viewBox="0 0 50 300">
<circle cx="16.5" cy="67" r="3.8" fill="none" stroke="#333" stroke-width="1.8"/>
<path d="M16.5,70.8 L16.5,82.5 M16.5,79.5 C16.5,76 20,72.5 25.5,72" fill="none" stroke="#333" stroke-width="1.9"/>
<circle cx="16.5" cy="82.6" r="2.4" fill="#333"/><circle cx="25.6" cy="72" r="2.4" fill="#333"/>
<g fill="#333"><rect x="25" y="63.2" width="11.8" height="2.4"/><rect x="28" y="70.6" width="8.8" height="2.4"/><rect x="28" y="76" width="8.8" height="2.4"/><rect x="25" y="82" width="11.8" height="2.4"/></g>
<g fill="#333"><rect x="18" y="106" width="2.6" height="3"/><rect x="18" y="111" width="2.6" height="2"/><circle cx="19.3" cy="117.3" r="3.6"/><rect x="18" y="122" width="2.6" height="2"/><rect x="18" y="126" width="2.6" height="3"/></g>
<g fill="#1e55c0"><rect x="29.6" y="118.8" width="2.6" height="10"/><rect x="25.9" y="122.5" width="10" height="2.6"/></g>
<path d="M24.7,150.3 C31.5,150.3 36.6,153.5 36.6,158.5 C36.6,163.8 31.5,167 24.7,167 C23,167 21.5,166.8 20.3,166.5 L13.6,171.6 L16,165 C14,163.5 12.8,161.3 12.8,158.5 C12.8,153.5 18,150.3 24.7,150.3Z" fill="#333"/>
<circle cx="25.5" cy="206" r="8.6" fill="none" stroke="#333" stroke-width="2.4"/>
<path d="M22,195 L29,195 M25.5,195 L25.5,197.5" stroke="#333" stroke-width="2"/><path d="M31.3,198.8 L33.3,196.8" stroke="#333" stroke-width="2.2"/>
<path d="M25.5,206 L29.3,201.5" stroke="#333" stroke-width="2"/>
<g stroke="#f9f9f9" stroke-width="2.5"><path d="M12,203.5 L20,203.5 M11,207 L19,207 M12,210.5 L20,210.5"/></g>
<g stroke="#333" stroke-width="1.3"><path d="M14.5,203.2 L19,203.2 M13.5,206.7 L18.5,206.7 M14.5,210.2 L19,210.2"/></g>
<rect x="0" y="226.5" width="49" height="1" fill="#d6d6d6"/>
<rect x="15.6" y="240.3" width="18" height="20" rx="2.5" fill="none" stroke="#333" stroke-width="2"/>
<g fill="none" stroke="#333" stroke-width="1.2"><path d="M18,244.5 l1.3,1.3 l2.2,-2.7"/><path d="M18,249.5 l1.3,1.3 l2.2,-2.7"/><path d="M18,254.5 l1.3,1.3 l2.2,-2.7"/></g>
<g fill="#333"><rect x="23.2" y="243.5" width="7.3" height="2"/><rect x="23.2" y="248.5" width="7.3" height="2"/><rect x="23.2" y="253.5" width="7.3" height="2"/></g>
</svg>
<svg style="left:60px;top:114px;" width="26" height="24" viewBox="0 0 26 24"><path d="M3.5,3.5 L21.5,3.5 L14.5,11.5 L14.5,21 L11,18.5 L11,11.5 Z" fill="none" stroke="#333" stroke-width="1.5" stroke-linejoin="round"/></svg>
<div class="a" style="left:99px;top:106px;width:287px;height:37px;background:#fff;border:1px solid #9a9a9a;border-radius:5px;box-sizing:border-box;"></div>
<div class="t" style="left:106.70px;top:117.20px;font-size:16.4px;color:#8a8a8a;font-style:italic;">Filter by name or type</div>
<div class="t" style="left:55.70px;top:154.70px;font-size:15.8px;color:#222;font-weight:bold;">Features (21)</div>
<svg style="left:0px;top:0px;" width="400" height="200" viewBox="0 0 400 200"><g fill="none" stroke="#444" stroke-width="1.9" stroke-linecap="butt"><path d="M311.3,162.5 L311.3,156.8 a1,1 0 0 1 1,-1 h6.2 l1.8,2.2 h11 a1,1 0 0 1 1,1 v11.6 a1,1 0 0 1 -1,1 h-12.1"/><path d="M311.3,168.3 L311.3,169.8 a1,1 0 0 0 1,1 h1.6"/></g><path d="M316.5,161 L316.5,170.8 M311.5,165.9 L321.3,165.9" stroke="#1a4fc0" stroke-width="2.3"/><circle cx="358.3" cy="164.6" r="9.1" fill="none" stroke="#2a2a2a" stroke-width="2.3"/><path d="M355.2,153 L362,153 M358.5,153 L358.5,156" stroke="#2a2a2a" stroke-width="1.9"/><path d="M364.5,158.3 L366.8,156" stroke="#2a2a2a" stroke-width="2.4"/><path d="M357.5,163 L359.3,162 L363.2,168.6 Z" fill="#2a2a2a"/><circle cx="358.6" cy="163.5" r="1.3" fill="#2a2a2a"/></svg>
<div class="t" style="left:79.60px;top:188.70px;font-size:16.5px;color:#3f3f3f;">Default geometry</div>
<div class="t" style="left:106.90px;top:221.20px;font-size:16.4px;color:#3f3f3f;">Origin</div>
<div class="t" style="left:107.20px;top:254.70px;font-size:16px;color:#a3a3a3;">Top</div>
<div class="t" style="left:107.20px;top:287.20px;font-size:16px;color:#a3a3a3;">Front</div>
<div class="t" style="left:107.20px;top:319.70px;font-size:16px;color:#a3a3a3;">Right</div>
<div class="t" style="left:108.00px;top:351.20px;font-size:16.4px;color:#3f3f3f;">Origin Cube</div>
<div class="t" style="left:83.20px;top:383.70px;font-size:16.4px;color:#a3a3a3;">Layout Sketch</div>
<div class="t" style="left:108.40px;top:416.20px;font-size:16.4px;color:#3f3f3f;">Plates (6)</div>
<div class="t" style="left:107.20px;top:448.70px;font-size:16.4px;color:#a3a3a3;">Plate Sketch</div>
<div class="t" style="left:107.20px;top:481.20px;font-size:16.4px;color:#3f3f3f;">Plate Extrude</div>
<div class="t" style="left:107.20px;top:513.70px;font-size:16.4px;color:#3f3f3f;">Mirror 1</div>
<div class="t" style="left:107.20px;top:546.20px;font-size:16.4px;color:#a3a3a3;">Cutout</div>
<div class="t" style="left:107.20px;top:578.70px;font-size:16.4px;color:#3f3f3f;">Cutout Extrude</div>
<div class="t" style="left:107.20px;top:611.20px;font-size:16.4px;color:#3f3f3f;">Cutout Fillet</div>
<div class="a" style="left:50px;top:637px;width:340px;height:30px;background:#b3ddf5;"></div>
<div class="t" style="left:83.00px;top:645.00px;font-size:15.7px;color:#333;">"ROUND Spacer 1 in"</div>
<div class="a" style="left:396px;top:644px;width:42px;height:43px;background:#fff;border:1px solid #9a9a9a;border-left:none;box-sizing:border-box;"></div>
<div class="t" style="left:109.20px;top:708.60px;font-size:16.4px;color:#9c9c9c;font-style:italic;">Power (5)</div>
<div class="t" style="left:109.20px;top:740.30px;font-size:16.4px;color:#9c9c9c;font-style:italic;">Pocketing (3)</div>
<div class="t" style="left:79.20px;top:859.30px;font-size:16.4px;color:#3f3f3f;">Parts (4)</div>
<div class="a" style="left:50px;top:982px;width:340px;height:29px;background:#ebeef3;border-bottom:1px solid #8ec8ea;box-sizing:border-box;height:30px;"></div>
<div class="t" style="left:106.80px;top:892.00px;font-size:16px;color:#3f3f3f;">Origin Cube</div>
<div class="t" style="left:106.80px;top:924.50px;font-size:16px;color:#3f3f3f;">Motor Mount Plate</div>
<div class="t" style="left:106.80px;top:957.00px;font-size:16px;color:#3f3f3f;">Small Plate</div>
<div class="t" style="left:106.80px;top:989.50px;font-size:16px;color:#3f3f3f;">ROUND Spacer 1 in</div>
<svg style="left:0;top:0" width="450" height="1100" viewBox="0 0 450 1100"><path d="M56.5,194.5 L62.5,200.5 L68.5,194.5" fill="none" stroke="#555" stroke-width="2.6" stroke-linecap="round" stroke-linejoin="round"/><circle cx="90.6" cy="228.3" r="3.9" fill="none" stroke="#555" stroke-width="1.3"/><circle cx="90.6" cy="228.3" r="1.6" fill="#555"/><g transform="translate(82,251.89999999999998)"><path d="M0.8,0.8 L17.5,2.8 L17.5,18.5 L0.8,16.5 Z" fill="#e8e8e8" stroke="#aaa" stroke-width="1.4" stroke-linejoin="round"/><path d="M9.5,1.8 L9.5,9.5 L17.5,10.5" fill="none" stroke="#aaa" stroke-width="1.3"/></g><g transform="translate(82,284.4)"><path d="M0.8,0.8 L17.5,2.8 L17.5,18.5 L0.8,16.5 Z" fill="#e8e8e8" stroke="#aaa" stroke-width="1.4" stroke-linejoin="round"/><path d="M9.5,1.8 L9.5,9.5 L17.5,10.5" fill="none" stroke="#aaa" stroke-width="1.3"/></g><g transform="translate(82,316.9)"><path d="M0.8,0.8 L17.5,2.8 L17.5,18.5 L0.8,16.5 Z" fill="#e8e8e8" stroke="#aaa" stroke-width="1.4" stroke-linejoin="round"/><path d="M9.5,1.8 L9.5,9.5 L17.5,10.5" fill="none" stroke="#aaa" stroke-width="1.3"/></g><rect x="61" y="213" width="2" height="129.5" fill="#d2d2d2"/><rect x="56" y="341.5" width="12" height="1.3" fill="#d2d2d2"/><path d="M59.0,353.5 L65.0,359.5 L59.0,365.5" fill="none" stroke="#555" stroke-width="2.6" stroke-linecap="round" stroke-linejoin="round"/><g transform="translate(82.8,349.5)"><path d="M9.2,0.7 L17.8,5 L17.8,14 L9.2,18.5 L0.7,14 L0.7,5Z" fill="#e6e6e6" stroke="#555" stroke-width="1.3" stroke-linejoin="round"/><path d="M0.7,5 L9.2,9.4 L17.8,5 M9.2,9.4 L9.2,18.5" fill="none" stroke="#555" stroke-width="1.3"/><path d="M9.8,10 L17.2,6 L17.2,13.6 L9.8,17.6Z" fill="#bcbcbc"/></g><rect x="339.4" y="347.7" width="2.6" height="3" fill="#333"/><rect x="339.4" y="352.7" width="2.6" height="2" fill="#333"/><circle cx="340.7" cy="358.7" r="3.6" fill="#333"/><rect x="339.4" y="363.2" width="2.6" height="2" fill="#333"/><rect x="339.4" y="367.2" width="2.6" height="3" fill="#333"/><g transform="translate(57,383)"><path d="M1.5,16.3 L3,11.5 L14,0.8 L17.5,4.2 L6.5,15 Z M3,11.5 L6.5,15" fill="#fff" stroke="#999" stroke-width="1.2" stroke-linejoin="round"/><path d="M1.5,16.3 L2.1,14.3 L3.6,15.8Z" fill="#999"/><rect x="0" y="16.8" width="19" height="1.2" fill="#6d9be0"/></g><path d="M56.5,421.5 L62.5,427.5 L68.5,421.5" fill="none" stroke="#555" stroke-width="2.6" stroke-linecap="round" stroke-linejoin="round"/><g transform="translate(82,416.2)"><path d="M0.8,1.6 a0.8,0.8 0 0 1 0.8,-0.8 h5.2 l2.2,2.2 h9.2 a0.8,0.8 0 0 1 0.8,0.8 v10.6 a0.8,0.8 0 0 1 -0.8,0.8 h-16.6 a0.8,0.8 0 0 1 -0.8,-0.8 z" fill="#fff" stroke="#555" stroke-width="1.2"/></g><rect x="61" y="442" width="2" height="193.5" fill="#d2d2d2"/><rect x="56" y="635" width="12" height="1.3" fill="#d2d2d2"/><g transform="translate(81,448.5)"><path d="M1.5,16.3 L3,11.5 L14,0.8 L17.5,4.2 L6.5,15 Z M3,11.5 L6.5,15" fill="#fff" stroke="#999" stroke-width="1.2" stroke-linejoin="round"/><path d="M1.5,16.3 L2.1,14.3 L3.6,15.8Z" fill="#999"/><rect x="0" y="16.8" width="19" height="1.2" fill="#6d9be0"/></g><g transform="translate(81,479.7)"><path d="M0.7,2.5 L2.5,0.7 L16.5,0.7 L18.5,2.7 L18.5,18.5 L2.7,18.5 L0.7,16.5 Z" fill="#fff" stroke="#555" stroke-width="1.2" stroke-linejoin="round"/><path d="M3.3,18.5 L3.3,3.3 L18.5,3.3 M0.7,0.9 L3.3,3.3" fill="none" stroke="#555" stroke-width="1.2" stroke-linejoin="round"/><path d="M6.5,7 L7.8,5.8 L18.5,5.8 L18.5,18.5 L7.8,18.5 L6.5,17.3 Z" fill="#9a9a9a" stroke="#555" stroke-width="1.2" stroke-linejoin="round"/><path d="M7.8,8 L18.5,8 M7.8,8 L7.8,18.5" fill="none" stroke="#555" stroke-width="1"/></g><g transform="translate(81,512.2)"><path d="M0.7,1.8 L2,0.7 L4.5,0.7 L6.5,2.5 L6.5,11.5 L9,11.5 L9,18.5 L2,18.5 L0.7,17.3Z" fill="#fff" stroke="#555" stroke-width="1.2" stroke-linejoin="round"/><path d="M2.2,0.9 L2.2,18.5" stroke="#555" stroke-width="1"/><path d="M3.5,0.8 L10.5,8 L10.5,18 L9,18.5 L9,11.5 L6.5,11.5 L6.5,2.5Z" fill="#d0d0d0"/><path d="M12,1.8 L13.3,0.7 L15.5,0.7 L18.5,3.3 L18.5,18.5 L10.5,18.5 L10.5,11.5 L12,11.5Z" fill="#9a9a9a" stroke="#555" stroke-width="1.2" stroke-linejoin="round"/><path d="M14.3,2.8 L14.3,16 L12,16" fill="none" stroke="#555" stroke-width="0.9"/></g><g transform="translate(81,545.9000000000001)"><path d="M1.5,16.3 L3,11.5 L14,0.8 L17.5,4.2 L6.5,15 Z M3,11.5 L6.5,15" fill="#fff" stroke="#999" stroke-width="1.2" stroke-linejoin="round"/><path d="M1.5,16.3 L2.1,14.3 L3.6,15.8Z" fill="#999"/><rect x="0" y="16.8" width="19" height="1.2" fill="#6d9be0"/></g><g transform="translate(81,577.2)"><path d="M0.7,2.5 L2.5,0.7 L16.5,0.7 L18.5,2.7 L18.5,18.5 L2.7,18.5 L0.7,16.5 Z" fill="#fff" stroke="#555" stroke-width="1.2" stroke-linejoin="round"/><path d="M3.3,18.5 L3.3,3.3 L18.5,3.3 M0.7,0.9 L3.3,3.3" fill="none" stroke="#555" stroke-width="1.2" stroke-linejoin="round"/><path d="M6.5,7 L7.8,5.8 L18.5,5.8 L18.5,18.5 L7.8,18.5 L6.5,17.3 Z" fill="#9a9a9a" stroke="#555" stroke-width="1.2" stroke-linejoin="round"/><path d="M7.8,8 L18.5,8 M7.8,8 L7.8,18.5" fill="none" stroke="#555" stroke-width="1"/></g><g transform="translate(81,609.7)"><path d="M0.7,8.5 C0.7,4 4,0.7 8.5,0.7 L16.5,0.7 L18.5,2.7 L18.5,18.5 L2.7,18.5 L0.7,16.5 Z" fill="#fff" stroke="#555" stroke-width="1.2" stroke-linejoin="round"/><path d="M3.3,18.5 L3.3,10 C3.3,6 6,3.3 10,3.3 L18.5,3.3" fill="none" stroke="#555" stroke-width="1.2" stroke-linejoin="round"/><path d="M0.8,8.5 C0.8,4 4,0.8 8.5,0.8 L10,3.3 C6,3.3 3.3,6 3.3,10 Z" fill="#9a9a9a" stroke="#555" stroke-width="1.2" stroke-linejoin="round"/></g><defs><linearGradient id="spic" x1="0" y1="0" x2="1" y2="0"><stop offset="0" stop-color="#f4f8fc"/><stop offset="0.6" stop-color="#e6eef6"/><stop offset="0.75" stop-color="#d0d6dc"/><stop offset="1" stop-color="#d8dde2"/></linearGradient></defs><path d="M56,655.5 L62.5,643 C63.5,641.6 65,641.2 67,641.6 L74.5,644.6 C76.5,645.6 77.3,647.2 76.6,649.2 L69.3,661.7 L56,661.7 Z" fill="url(#spic)"/><path d="M56,655.5 L62.5,643 C63.5,641.6 65,641.2 67,641.6 L74.5,644.6 C76.5,645.6 77.3,647.2 76.6,649.2 L69.3,661.7" fill="none" stroke="#333" stroke-width="1.5" stroke-linejoin="round"/><path d="M64,645.5 L67.5,644.8 L71,647.5 L73,650.5" fill="none" stroke="#777" stroke-width="1.2" stroke-dasharray="1.5 0.8"/><rect x="339.4" y="639.2" width="2.6" height="3" fill="#333"/><rect x="339.4" y="644.2" width="2.6" height="2" fill="#333"/><circle cx="340.7" cy="650.2" r="3.6" fill="#333"/><rect x="339.4" y="654.7" width="2.6" height="2" fill="#333"/><rect x="339.4" y="658.7" width="2.6" height="3" fill="#333"/><rect x="56" y="680" width="328" height="8.5" fill="#adadad"/><rect x="407.6" y="661.5" width="2" height="16" fill="#666"/><g fill="#333"><rect x="415.2" y="656.3" width="12.6" height="1.6"/><rect x="411.5" y="662.6" width="16.3" height="1.6"/><rect x="411.5" y="668.6" width="16.3" height="1.6"/></g><rect x="411.5" y="675" width="16.3" height="1.8" fill="#555"/><path d="M405.2,655.8 L408.6,659.2 L412,655.8" fill="none" stroke="#333" stroke-width="1.5"/><path d="M59.0,712.0 L65.0,718.0 L59.0,724.0" fill="none" stroke="#555" stroke-width="2.6" stroke-linecap="round" stroke-linejoin="round"/><g transform="translate(82,709.7)"><path d="M0.8,1.6 a0.8,0.8 0 0 1 0.8,-0.8 h5.2 l2.2,2.2 h9.2 a0.8,0.8 0 0 1 0.8,0.8 v10.6 a0.8,0.8 0 0 1 -0.8,0.8 h-16.6 a0.8,0.8 0 0 1 -0.8,-0.8 z" fill="#fff" stroke="#777" stroke-width="1.2"/></g><path d="M59.0,743.7 L65.0,749.7 L59.0,755.7" fill="none" stroke="#555" stroke-width="2.6" stroke-linecap="round" stroke-linejoin="round"/><g transform="translate(82,741.4)"><path d="M0.8,1.6 a0.8,0.8 0 0 1 0.8,-0.8 h5.2 l2.2,2.2 h9.2 a0.8,0.8 0 0 1 0.8,0.8 v10.6 a0.8,0.8 0 0 1 -0.8,0.8 h-16.6 a0.8,0.8 0 0 1 -0.8,-0.8 z" fill="#fff" stroke="#777" stroke-width="1.2"/></g><rect x="50" y="850" width="340" height="1" fill="#dcdcdc"/><path d="M56.5,865.0 L62.5,871.0 L68.5,865.0" fill="none" stroke="#555" stroke-width="2.6" stroke-linecap="round" stroke-linejoin="round"/><g transform="translate(81,889.6)"><path d="M0.7,11 L3,9 L8.5,9 L8.5,3 L11,0.7 L16.5,0.7 L18.5,2.7 L18.5,17.5 L3,17.5 L0.7,15.5Z" fill="#fff" stroke="#555" stroke-width="1.2" stroke-linejoin="round"/><path d="M3,17.5 L3,12 L11,12 L11,3 L18.5,3 M0.7,11 L3,12 M8.5,9 L11,12 M8.5,3 L11,3" fill="none" stroke="#555" stroke-width="1.1"/></g><g transform="translate(81,922.1)"><path d="M0.7,11 L3,9 L8.5,9 L8.5,3 L11,0.7 L16.5,0.7 L18.5,2.7 L18.5,17.5 L3,17.5 L0.7,15.5Z" fill="#fff" stroke="#555" stroke-width="1.2" stroke-linejoin="round"/><path d="M3,17.5 L3,12 L11,12 L11,3 L18.5,3 M0.7,11 L3,12 M8.5,9 L11,12 M8.5,3 L11,3" fill="none" stroke="#555" stroke-width="1.1"/></g><g transform="translate(81,954.6)"><path d="M0.7,11 L3,9 L8.5,9 L8.5,3 L11,0.7 L16.5,0.7 L18.5,2.7 L18.5,17.5 L3,17.5 L0.7,15.5Z" fill="#fff" stroke="#555" stroke-width="1.2" stroke-linejoin="round"/><path d="M3,17.5 L3,12 L11,12 L11,3 L18.5,3 M0.7,11 L3,12 M8.5,9 L11,12 M8.5,3 L11,3" fill="none" stroke="#555" stroke-width="1.1"/></g><g transform="translate(81,987.1)"><path d="M0.7,11 L3,9 L8.5,9 L8.5,3 L11,0.7 L16.5,0.7 L18.5,2.7 L18.5,17.5 L3,17.5 L0.7,15.5Z" fill="#fff" stroke="#555" stroke-width="1.2" stroke-linejoin="round"/><path d="M3,17.5 L3,12 L11,12 L11,3 L18.5,3 M0.7,11 L3,12 M8.5,9 L11,12 M8.5,3 L11,3" fill="none" stroke="#555" stroke-width="1.1"/></g></svg>
<svg style="left:0;top:0" width="2398" height="1294" viewBox="0 0 2398 1294"><defs>
<radialGradient id="sh" cx="0.55" cy="0.45" r="0.6"><stop offset="0" stop-color="#1d4a20"/><stop offset="0.6" stop-color="#2b6a2f"/><stop offset="1" stop-color="#3a8240"/></radialGradient>
<linearGradient id="wallL" x1="1" y1="0.25" x2="0.25" y2="1"><stop offset="0" stop-color="#22582a"/><stop offset="0.45" stop-color="#2a6a2e"/><stop offset="1" stop-color="#46a04b"/></linearGradient>
<linearGradient id="backSide" gradientUnits="userSpaceOnUse" x1="975" y1="485" x2="900" y2="590"><stop offset="0" stop-color="#46a04b"/><stop offset="0.6" stop-color="#2c6c30"/><stop offset="1" stop-color="#245a28"/></linearGradient>
<linearGradient id="spacer" gradientUnits="userSpaceOnUse" x1="1080" y1="510" x2="1100" y2="485"><stop offset="0" stop-color="#b87408"/><stop offset="0.5" stop-color="#d08d10"/><stop offset="1" stop-color="#e6a51c"/></linearGradient>
</defs><path d="M996.5,482.2 L1030.0,476.4 L1180.0,453.2 L1560.0,393.3 L1760.0,361.6 L1803.4,355.3 C1806.1,355.2 1814.0,353.6 1819.5,354.5 C1825.0,355.4 1830.5,357.1 1836.5,360.4 C1842.5,363.6 1849.8,369.2 1855.2,374.0 C1860.6,378.8 1865.1,384.8 1868.8,389.3 C1872.5,393.8 1874.8,396.9 1877.3,401.2 C1879.8,405.5 1882.9,412.7 1884.0,415.0 L1884,480 L1500,640 L1105.3,681.1 C1092.8,681.8 1048.2,684.2 1030.0,685.2 C1011.8,686.2 1005.8,686.4 995.9,686.9 C986.0,687.4 978.1,688.5 970.4,688.1 C962.7,687.7 955.2,686.3 949.5,684.6 C943.8,682.9 941.1,680.6 936.0,677.7 C930.9,674.8 924.8,671.9 919.1,667.3 C913.5,662.7 906.4,656.2 902.1,650.3 C897.9,644.3 895.5,639.0 893.6,631.6 C891.8,624.2 890.7,615.9 891.0,606.0 C891.3,596.1 892.9,582.8 895.3,572.0 C897.7,561.2 901.0,550.5 905.5,541.4 C910.0,532.3 915.8,524.9 922.5,517.6 C929.2,510.3 937.8,502.5 946.0,497.5 C954.2,492.5 963.6,490.4 972.0,487.8 C980.4,485.2 992.4,483.1 996.5,482.2Z" fill="url(#backSide)" stroke="#0f1f0f" stroke-width="1.3" stroke-linejoin="round"/><path d="M1007.5,491.4 L1030.0,489.1 L1180.0,465.6 L1560.0,405.7 L1760.0,374.0 L1815.3,365.2 C1818.0,365.5 1825.9,365.4 1831.4,367.2 C1836.9,368.9 1843.3,372.0 1848.4,375.7 C1853.5,379.4 1858.0,384.9 1862.0,389.3 C1866.0,393.7 1869.2,397.6 1872.2,402.0 C1875.2,406.4 1878.7,413.7 1880.0,416.0 L1880,480 L1500,640 L1105.3,681.1 C1092.8,681.8 1048.2,684.2 1030.0,685.2 C1011.8,686.2 1005.8,686.4 995.9,686.9 C986.0,687.4 978.1,688.5 970.4,688.1 C962.7,687.7 955.2,686.3 949.5,684.6 C943.8,682.9 940.7,680.4 936.0,677.7 C931.3,675.0 925.5,673.1 921.5,668.5 C917.5,663.9 915.2,657.9 912.3,650.3 C909.3,642.7 905.2,633.2 903.8,623.0 C902.4,612.8 902.1,599.8 903.8,589.0 C905.5,578.2 908.6,568.9 914.0,558.4 C919.4,547.9 928.1,535.1 936.1,526.1 C944.1,517.1 954.0,509.6 962.0,504.5 C970.0,499.4 976.4,497.7 984.0,495.5 C991.6,493.3 1003.6,492.1 1007.5,491.4Z" fill="#3b8440" stroke="#0f1f0f" stroke-width="1.3" stroke-linejoin="round"/><path d="M996.5,482.2 L1007.5,491.4 M1803.4,355.3 L1815.3,365.2" stroke="#0f1f0f" stroke-width="1.3" stroke-linejoin="round"/><filter id="aob" x="-10%" y="-200%" width="120%" height="500%"><feGaussianBlur stdDeviation="7"/></filter><path d="M1125,522 L1180,513 L1560,454 L1760,423 L1864,407" fill="none" stroke="#0a2a0a" stroke-width="16" stroke-opacity="0.22" filter="url(#aob)"/><clipPath id="hLf"><path d="M1040.6,532.4 C1042.5,533.9 1044.3,535.6 1045.9,537.4 C1047.5,539.2 1049.0,541.2 1050.3,543.3 C1051.6,545.4 1052.8,547.7 1053.8,550.0 C1054.7,552.3 1055.6,554.8 1056.2,557.4 C1056.9,559.9 1057.3,562.6 1057.6,565.3 C1057.9,568.0 1058.0,570.8 1058.0,573.6 C1057.9,576.5 1057.7,579.4 1057.2,582.2 C1056.8,585.1 1056.2,588.1 1055.4,591.0 C1054.7,593.9 1053.7,596.8 1052.6,599.7 C1051.5,602.6 1050.2,605.4 1048.8,608.2 C1047.4,611.0 1045.8,613.8 1044.0,616.4 C1042.3,619.1 1040.4,621.7 1038.5,624.2 C1036.5,626.7 1034.3,629.1 1032.1,631.4 C1029.9,633.6 1027.6,635.8 1025.2,637.8 C1022.8,639.8 1020.3,641.7 1017.7,643.4 C1015.1,645.1 1012.5,646.7 1009.8,648.1 C1007.2,649.5 1004.4,650.7 1001.7,651.8 C999.0,652.9 996.2,653.7 993.5,654.4 C990.7,655.1 988.0,655.6 985.3,655.9 C982.6,656.3 979.9,656.4 977.2,656.3 C974.6,656.3 972.0,656.0 969.5,655.6 C967.0,655.1 964.5,654.5 962.2,653.7 C959.9,652.8 957.6,651.8 955.5,650.7 C953.3,649.5 951.3,648.1 949.4,646.6 C947.5,645.1 945.7,643.4 944.1,641.6 C942.5,639.8 941.0,637.8 939.7,635.7 C938.4,633.6 937.2,631.3 936.2,629.0 C935.3,626.7 934.4,624.2 933.8,621.6 C933.1,619.1 932.7,616.4 932.4,613.7 C932.1,611.0 932.0,608.2 932.0,605.4 C932.1,602.5 932.3,599.6 932.8,596.8 C933.2,593.9 933.8,590.9 934.6,588.0 C935.3,585.1 936.3,582.2 937.4,579.3 C938.5,576.4 939.8,573.6 941.2,570.8 C942.6,568.0 944.2,565.2 946.0,562.6 C947.7,559.9 949.6,557.3 951.5,554.8 C953.5,552.3 955.7,549.9 957.9,547.6 C960.1,545.4 962.4,543.2 964.8,541.2 C967.2,539.2 969.7,537.3 972.3,535.6 C974.9,533.9 977.5,532.3 980.2,530.9 C982.8,529.5 985.6,528.3 988.3,527.2 C991.0,526.1 993.8,525.3 996.5,524.6 C999.3,523.9 1002.0,523.4 1004.7,523.1 C1007.4,522.7 1010.1,522.6 1012.8,522.7 C1015.4,522.7 1018.0,523.0 1020.5,523.4 C1023.0,523.9 1025.5,524.5 1027.8,525.3 C1030.1,526.2 1032.4,527.2 1034.5,528.3 C1036.7,529.5 1038.7,530.9 1040.6,532.4Z"/></clipPath><clipPath id="hLb"><path d="M1029.6,521.9 C1031.5,523.4 1033.3,525.1 1034.9,526.9 C1036.5,528.7 1038.0,530.7 1039.3,532.8 C1040.6,534.9 1041.8,537.2 1042.8,539.5 C1043.7,541.8 1044.6,544.3 1045.2,546.9 C1045.9,549.4 1046.3,552.1 1046.6,554.8 C1046.9,557.5 1047.0,560.3 1047.0,563.1 C1046.9,566.0 1046.7,568.9 1046.2,571.7 C1045.8,574.6 1045.2,577.6 1044.4,580.5 C1043.7,583.4 1042.7,586.3 1041.6,589.2 C1040.5,592.1 1039.2,594.9 1037.8,597.7 C1036.4,600.5 1034.8,603.3 1033.0,605.9 C1031.3,608.6 1029.4,611.2 1027.5,613.7 C1025.5,616.2 1023.3,618.6 1021.1,620.9 C1018.9,623.1 1016.6,625.3 1014.2,627.3 C1011.8,629.3 1009.3,631.2 1006.7,632.9 C1004.1,634.6 1001.5,636.2 998.8,637.6 C996.2,639.0 993.4,640.2 990.7,641.3 C988.0,642.4 985.2,643.2 982.5,643.9 C979.7,644.6 977.0,645.1 974.3,645.4 C971.6,645.8 968.9,645.9 966.2,645.8 C963.6,645.8 961.0,645.5 958.5,645.1 C956.0,644.6 953.5,644.0 951.2,643.2 C948.9,642.3 946.6,641.3 944.5,640.2 C942.3,639.0 940.3,637.6 938.4,636.1 C936.5,634.6 934.7,632.9 933.1,631.1 C931.5,629.3 930.0,627.3 928.7,625.2 C927.4,623.1 926.2,620.8 925.2,618.5 C924.3,616.2 923.4,613.7 922.8,611.1 C922.1,608.6 921.7,605.9 921.4,603.2 C921.1,600.5 921.0,597.7 921.0,594.9 C921.1,592.0 921.3,589.1 921.8,586.3 C922.2,583.4 922.8,580.4 923.6,577.5 C924.3,574.6 925.3,571.7 926.4,568.8 C927.5,565.9 928.8,563.1 930.2,560.3 C931.6,557.5 933.2,554.7 935.0,552.1 C936.7,549.4 938.6,546.8 940.5,544.3 C942.5,541.8 944.7,539.4 946.9,537.1 C949.1,534.9 951.4,532.7 953.8,530.7 C956.2,528.7 958.7,526.8 961.3,525.1 C963.9,523.4 966.5,521.8 969.2,520.4 C971.8,519.0 974.6,517.8 977.3,516.7 C980.0,515.6 982.8,514.8 985.5,514.1 C988.3,513.4 991.0,512.9 993.7,512.6 C996.4,512.2 999.1,512.1 1001.8,512.2 C1004.4,512.2 1007.0,512.5 1009.5,512.9 C1012.0,513.4 1014.5,514.0 1016.8,514.8 C1019.1,515.7 1021.4,516.7 1023.5,517.8 C1025.7,519.0 1027.7,520.4 1029.6,521.9Z"/></clipPath><path d="M1040.6,532.4 C1042.5,533.9 1044.3,535.6 1045.9,537.4 C1047.5,539.2 1049.0,541.2 1050.3,543.3 C1051.6,545.4 1052.8,547.7 1053.8,550.0 C1054.7,552.3 1055.6,554.8 1056.2,557.4 C1056.9,559.9 1057.3,562.6 1057.6,565.3 C1057.9,568.0 1058.0,570.8 1058.0,573.6 C1057.9,576.5 1057.7,579.4 1057.2,582.2 C1056.8,585.1 1056.2,588.1 1055.4,591.0 C1054.7,593.9 1053.7,596.8 1052.6,599.7 C1051.5,602.6 1050.2,605.4 1048.8,608.2 C1047.4,611.0 1045.8,613.8 1044.0,616.4 C1042.3,619.1 1040.4,621.7 1038.5,624.2 C1036.5,626.7 1034.3,629.1 1032.1,631.4 C1029.9,633.6 1027.6,635.8 1025.2,637.8 C1022.8,639.8 1020.3,641.7 1017.7,643.4 C1015.1,645.1 1012.5,646.7 1009.8,648.1 C1007.2,649.5 1004.4,650.7 1001.7,651.8 C999.0,652.9 996.2,653.7 993.5,654.4 C990.7,655.1 988.0,655.6 985.3,655.9 C982.6,656.3 979.9,656.4 977.2,656.3 C974.6,656.3 972.0,656.0 969.5,655.6 C967.0,655.1 964.5,654.5 962.2,653.7 C959.9,652.8 957.6,651.8 955.5,650.7 C953.3,649.5 951.3,648.1 949.4,646.6 C947.5,645.1 945.7,643.4 944.1,641.6 C942.5,639.8 941.0,637.8 939.7,635.7 C938.4,633.6 937.2,631.3 936.2,629.0 C935.3,626.7 934.4,624.2 933.8,621.6 C933.1,619.1 932.7,616.4 932.4,613.7 C932.1,611.0 932.0,608.2 932.0,605.4 C932.1,602.5 932.3,599.6 932.8,596.8 C933.2,593.9 933.8,590.9 934.6,588.0 C935.3,585.1 936.3,582.2 937.4,579.3 C938.5,576.4 939.8,573.6 941.2,570.8 C942.6,568.0 944.2,565.2 946.0,562.6 C947.7,559.9 949.6,557.3 951.5,554.8 C953.5,552.3 955.7,549.9 957.9,547.6 C960.1,545.4 962.4,543.2 964.8,541.2 C967.2,539.2 969.7,537.3 972.3,535.6 C974.9,533.9 977.5,532.3 980.2,530.9 C982.8,529.5 985.6,528.3 988.3,527.2 C991.0,526.1 993.8,525.3 996.5,524.6 C999.3,523.9 1002.0,523.4 1004.7,523.1 C1007.4,522.7 1010.1,522.6 1012.8,522.7 C1015.4,522.7 1018.0,523.0 1020.5,523.4 C1023.0,523.9 1025.5,524.5 1027.8,525.3 C1030.1,526.2 1032.4,527.2 1034.5,528.3 C1036.7,529.5 1038.7,530.9 1040.6,532.4Z" fill="url(#wallL)"/><g clip-path="url(#hLf)"><g clip-path="url(#hLb)"><path d="M1029.6,521.9 C1031.5,523.4 1033.3,525.1 1034.9,526.9 C1036.5,528.7 1038.0,530.7 1039.3,532.8 C1040.6,534.9 1041.8,537.2 1042.8,539.5 C1043.7,541.8 1044.6,544.3 1045.2,546.9 C1045.9,549.4 1046.3,552.1 1046.6,554.8 C1046.9,557.5 1047.0,560.3 1047.0,563.1 C1046.9,566.0 1046.7,568.9 1046.2,571.7 C1045.8,574.6 1045.2,577.6 1044.4,580.5 C1043.7,583.4 1042.7,586.3 1041.6,589.2 C1040.5,592.1 1039.2,594.9 1037.8,597.7 C1036.4,600.5 1034.8,603.3 1033.0,605.9 C1031.3,608.6 1029.4,611.2 1027.5,613.7 C1025.5,616.2 1023.3,618.6 1021.1,620.9 C1018.9,623.1 1016.6,625.3 1014.2,627.3 C1011.8,629.3 1009.3,631.2 1006.7,632.9 C1004.1,634.6 1001.5,636.2 998.8,637.6 C996.2,639.0 993.4,640.2 990.7,641.3 C988.0,642.4 985.2,643.2 982.5,643.9 C979.7,644.6 977.0,645.1 974.3,645.4 C971.6,645.8 968.9,645.9 966.2,645.8 C963.6,645.8 961.0,645.5 958.5,645.1 C956.0,644.6 953.5,644.0 951.2,643.2 C948.9,642.3 946.6,641.3 944.5,640.2 C942.3,639.0 940.3,637.6 938.4,636.1 C936.5,634.6 934.7,632.9 933.1,631.1 C931.5,629.3 930.0,627.3 928.7,625.2 C927.4,623.1 926.2,620.8 925.2,618.5 C924.3,616.2 923.4,613.7 922.8,611.1 C922.1,608.6 921.7,605.9 921.4,603.2 C921.1,600.5 921.0,597.7 921.0,594.9 C921.1,592.0 921.3,589.1 921.8,586.3 C922.2,583.4 922.8,580.4 923.6,577.5 C924.3,574.6 925.3,571.7 926.4,568.8 C927.5,565.9 928.8,563.1 930.2,560.3 C931.6,557.5 933.2,554.7 935.0,552.1 C936.7,549.4 938.6,546.8 940.5,544.3 C942.5,541.8 944.7,539.4 946.9,537.1 C949.1,534.9 951.4,532.7 953.8,530.7 C956.2,528.7 958.7,526.8 961.3,525.1 C963.9,523.4 966.5,521.8 969.2,520.4 C971.8,519.0 974.6,517.8 977.3,516.7 C980.0,515.6 982.8,514.8 985.5,514.1 C988.3,513.4 991.0,512.9 993.7,512.6 C996.4,512.2 999.1,512.1 1001.8,512.2 C1004.4,512.2 1007.0,512.5 1009.5,512.9 C1012.0,513.4 1014.5,514.0 1016.8,514.8 C1019.1,515.7 1021.4,516.7 1023.5,517.8 C1025.7,519.0 1027.7,520.4 1029.6,521.9Z" fill="#fff"/></g><path d="M1029.6,521.9 C1031.5,523.4 1033.3,525.1 1034.9,526.9 C1036.5,528.7 1038.0,530.7 1039.3,532.8 C1040.6,534.9 1041.8,537.2 1042.8,539.5 C1043.7,541.8 1044.6,544.3 1045.2,546.9 C1045.9,549.4 1046.3,552.1 1046.6,554.8 C1046.9,557.5 1047.0,560.3 1047.0,563.1 C1046.9,566.0 1046.7,568.9 1046.2,571.7 C1045.8,574.6 1045.2,577.6 1044.4,580.5 C1043.7,583.4 1042.7,586.3 1041.6,589.2 C1040.5,592.1 1039.2,594.9 1037.8,597.7 C1036.4,600.5 1034.8,603.3 1033.0,605.9 C1031.3,608.6 1029.4,611.2 1027.5,613.7 C1025.5,616.2 1023.3,618.6 1021.1,620.9 C1018.9,623.1 1016.6,625.3 1014.2,627.3 C1011.8,629.3 1009.3,631.2 1006.7,632.9 C1004.1,634.6 1001.5,636.2 998.8,637.6 C996.2,639.0 993.4,640.2 990.7,641.3 C988.0,642.4 985.2,643.2 982.5,643.9 C979.7,644.6 977.0,645.1 974.3,645.4 C971.6,645.8 968.9,645.9 966.2,645.8 C963.6,645.8 961.0,645.5 958.5,645.1 C956.0,644.6 953.5,644.0 951.2,643.2 C948.9,642.3 946.6,641.3 944.5,640.2 C942.3,639.0 940.3,637.6 938.4,636.1 C936.5,634.6 934.7,632.9 933.1,631.1 C931.5,629.3 930.0,627.3 928.7,625.2 C927.4,623.1 926.2,620.8 925.2,618.5 C924.3,616.2 923.4,613.7 922.8,611.1 C922.1,608.6 921.7,605.9 921.4,603.2 C921.1,600.5 921.0,597.7 921.0,594.9 C921.1,592.0 921.3,589.1 921.8,586.3 C922.2,583.4 922.8,580.4 923.6,577.5 C924.3,574.6 925.3,571.7 926.4,568.8 C927.5,565.9 928.8,563.1 930.2,560.3 C931.6,557.5 933.2,554.7 935.0,552.1 C936.7,549.4 938.6,546.8 940.5,544.3 C942.5,541.8 944.7,539.4 946.9,537.1 C949.1,534.9 951.4,532.7 953.8,530.7 C956.2,528.7 958.7,526.8 961.3,525.1 C963.9,523.4 966.5,521.8 969.2,520.4 C971.8,519.0 974.6,517.8 977.3,516.7 C980.0,515.6 982.8,514.8 985.5,514.1 C988.3,513.4 991.0,512.9 993.7,512.6 C996.4,512.2 999.1,512.1 1001.8,512.2 C1004.4,512.2 1007.0,512.5 1009.5,512.9 C1012.0,513.4 1014.5,514.0 1016.8,514.8 C1019.1,515.7 1021.4,516.7 1023.5,517.8 C1025.7,519.0 1027.7,520.4 1029.6,521.9Z" fill="none" stroke="#0f1f0f" stroke-width="1.3" stroke-linejoin="round"/></g><path d="M1040.6,532.4 C1042.5,533.9 1044.3,535.6 1045.9,537.4 C1047.5,539.2 1049.0,541.2 1050.3,543.3 C1051.6,545.4 1052.8,547.7 1053.8,550.0 C1054.7,552.3 1055.6,554.8 1056.2,557.4 C1056.9,559.9 1057.3,562.6 1057.6,565.3 C1057.9,568.0 1058.0,570.8 1058.0,573.6 C1057.9,576.5 1057.7,579.4 1057.2,582.2 C1056.8,585.1 1056.2,588.1 1055.4,591.0 C1054.7,593.9 1053.7,596.8 1052.6,599.7 C1051.5,602.6 1050.2,605.4 1048.8,608.2 C1047.4,611.0 1045.8,613.8 1044.0,616.4 C1042.3,619.1 1040.4,621.7 1038.5,624.2 C1036.5,626.7 1034.3,629.1 1032.1,631.4 C1029.9,633.6 1027.6,635.8 1025.2,637.8 C1022.8,639.8 1020.3,641.7 1017.7,643.4 C1015.1,645.1 1012.5,646.7 1009.8,648.1 C1007.2,649.5 1004.4,650.7 1001.7,651.8 C999.0,652.9 996.2,653.7 993.5,654.4 C990.7,655.1 988.0,655.6 985.3,655.9 C982.6,656.3 979.9,656.4 977.2,656.3 C974.6,656.3 972.0,656.0 969.5,655.6 C967.0,655.1 964.5,654.5 962.2,653.7 C959.9,652.8 957.6,651.8 955.5,650.7 C953.3,649.5 951.3,648.1 949.4,646.6 C947.5,645.1 945.7,643.4 944.1,641.6 C942.5,639.8 941.0,637.8 939.7,635.7 C938.4,633.6 937.2,631.3 936.2,629.0 C935.3,626.7 934.4,624.2 933.8,621.6 C933.1,619.1 932.7,616.4 932.4,613.7 C932.1,611.0 932.0,608.2 932.0,605.4 C932.1,602.5 932.3,599.6 932.8,596.8 C933.2,593.9 933.8,590.9 934.6,588.0 C935.3,585.1 936.3,582.2 937.4,579.3 C938.5,576.4 939.8,573.6 941.2,570.8 C942.6,568.0 944.2,565.2 946.0,562.6 C947.7,559.9 949.6,557.3 951.5,554.8 C953.5,552.3 955.7,549.9 957.9,547.6 C960.1,545.4 962.4,543.2 964.8,541.2 C967.2,539.2 969.7,537.3 972.3,535.6 C974.9,533.9 977.5,532.3 980.2,530.9 C982.8,529.5 985.6,528.3 988.3,527.2 C991.0,526.1 993.8,525.3 996.5,524.6 C999.3,523.9 1002.0,523.4 1004.7,523.1 C1007.4,522.7 1010.1,522.6 1012.8,522.7 C1015.4,522.7 1018.0,523.0 1020.5,523.4 C1023.0,523.9 1025.5,524.5 1027.8,525.3 C1030.1,526.2 1032.4,527.2 1034.5,528.3 C1036.7,529.5 1038.7,530.9 1040.6,532.4Z" fill="none" stroke="#0f1f0f" stroke-width="1.3" stroke-linejoin="round"/><clipPath id="hBRf"><path d="M1834.4,397.6 C1835.7,398.7 1836.9,399.8 1838.0,401.1 C1839.2,402.4 1840.2,403.8 1841.1,405.2 C1842.0,406.7 1842.9,408.3 1843.5,409.9 C1844.2,411.5 1844.8,413.3 1845.3,415.1 C1845.7,416.8 1846.0,418.7 1846.2,420.6 C1846.4,422.5 1846.5,424.4 1846.5,426.4 C1846.4,428.4 1846.3,430.4 1846.0,432.4 C1845.7,434.5 1845.2,436.5 1844.7,438.5 C1844.2,440.6 1843.5,442.6 1842.7,444.6 C1842.0,446.6 1841.1,448.6 1840.1,450.6 C1839.1,452.5 1837.9,454.5 1836.7,456.3 C1835.5,458.2 1834.2,460.0 1832.9,461.7 C1831.5,463.5 1830.0,465.1 1828.4,466.7 C1826.9,468.3 1825.3,469.8 1823.6,471.2 C1821.9,472.6 1820.1,474.0 1818.4,475.2 C1816.6,476.4 1814.7,477.5 1812.9,478.4 C1811.0,479.4 1809.1,480.3 1807.2,481.0 C1805.3,481.7 1803.4,482.4 1801.4,482.8 C1799.5,483.3 1797.6,483.7 1795.7,483.9 C1793.8,484.1 1791.9,484.2 1790.1,484.2 C1788.3,484.1 1786.4,483.9 1784.7,483.6 C1782.9,483.3 1781.2,482.9 1779.6,482.3 C1778.0,481.7 1776.4,481.0 1774.9,480.2 C1773.4,479.4 1772.0,478.5 1770.6,477.4 C1769.3,476.3 1768.1,475.2 1767.0,473.9 C1765.8,472.6 1764.8,471.2 1763.9,469.8 C1763.0,468.3 1762.1,466.7 1761.5,465.1 C1760.8,463.5 1760.2,461.7 1759.7,459.9 C1759.3,458.2 1759.0,456.3 1758.8,454.4 C1758.6,452.5 1758.5,450.6 1758.5,448.6 C1758.6,446.6 1758.7,444.6 1759.0,442.6 C1759.3,440.5 1759.8,438.5 1760.3,436.5 C1760.8,434.4 1761.5,432.4 1762.3,430.4 C1763.0,428.4 1763.9,426.4 1764.9,424.4 C1765.9,422.5 1767.1,420.5 1768.3,418.7 C1769.5,416.8 1770.8,415.0 1772.1,413.3 C1773.5,411.5 1775.0,409.9 1776.6,408.3 C1778.1,406.7 1779.7,405.2 1781.4,403.8 C1783.1,402.4 1784.9,401.0 1786.6,399.8 C1788.4,398.6 1790.3,397.5 1792.1,396.6 C1794.0,395.6 1795.9,394.7 1797.8,394.0 C1799.7,393.3 1801.6,392.6 1803.6,392.2 C1805.5,391.7 1807.4,391.3 1809.3,391.1 C1811.2,390.9 1813.1,390.8 1814.9,390.8 C1816.7,390.9 1818.6,391.1 1820.3,391.4 C1822.1,391.7 1823.8,392.1 1825.4,392.7 C1827.0,393.3 1828.6,394.0 1830.1,394.8 C1831.6,395.6 1833.0,396.5 1834.4,397.6Z"/></clipPath><clipPath id="hBRb"><path d="M1823.4,387.1 C1824.7,388.2 1825.9,389.3 1827.0,390.6 C1828.2,391.9 1829.2,393.3 1830.1,394.7 C1831.0,396.2 1831.9,397.8 1832.5,399.4 C1833.2,401.0 1833.8,402.8 1834.3,404.6 C1834.7,406.3 1835.0,408.2 1835.2,410.1 C1835.4,412.0 1835.5,413.9 1835.5,415.9 C1835.4,417.9 1835.3,419.9 1835.0,421.9 C1834.7,424.0 1834.2,426.0 1833.7,428.0 C1833.2,430.1 1832.5,432.1 1831.7,434.1 C1831.0,436.1 1830.1,438.1 1829.1,440.1 C1828.1,442.0 1826.9,444.0 1825.7,445.8 C1824.5,447.7 1823.2,449.5 1821.9,451.2 C1820.5,453.0 1819.0,454.6 1817.4,456.2 C1815.9,457.8 1814.3,459.3 1812.6,460.7 C1810.9,462.1 1809.1,463.5 1807.4,464.7 C1805.6,465.9 1803.7,467.0 1801.9,467.9 C1800.0,468.9 1798.1,469.8 1796.2,470.5 C1794.3,471.2 1792.4,471.9 1790.4,472.3 C1788.5,472.8 1786.6,473.2 1784.7,473.4 C1782.8,473.6 1780.9,473.7 1779.1,473.7 C1777.3,473.6 1775.4,473.4 1773.7,473.1 C1771.9,472.8 1770.2,472.4 1768.6,471.8 C1767.0,471.2 1765.4,470.5 1763.9,469.7 C1762.4,468.9 1761.0,468.0 1759.6,466.9 C1758.3,465.8 1757.1,464.7 1756.0,463.4 C1754.8,462.1 1753.8,460.7 1752.9,459.3 C1752.0,457.8 1751.1,456.2 1750.5,454.6 C1749.8,453.0 1749.2,451.2 1748.7,449.4 C1748.3,447.7 1748.0,445.8 1747.8,443.9 C1747.6,442.0 1747.5,440.1 1747.5,438.1 C1747.6,436.1 1747.7,434.1 1748.0,432.1 C1748.3,430.0 1748.8,428.0 1749.3,426.0 C1749.8,423.9 1750.5,421.9 1751.3,419.9 C1752.0,417.9 1752.9,415.9 1753.9,413.9 C1754.9,412.0 1756.1,410.0 1757.3,408.2 C1758.5,406.3 1759.8,404.5 1761.1,402.8 C1762.5,401.0 1764.0,399.4 1765.6,397.8 C1767.1,396.2 1768.7,394.7 1770.4,393.3 C1772.1,391.9 1773.9,390.5 1775.6,389.3 C1777.4,388.1 1779.3,387.0 1781.1,386.1 C1783.0,385.1 1784.9,384.2 1786.8,383.5 C1788.7,382.8 1790.6,382.1 1792.6,381.7 C1794.5,381.2 1796.4,380.8 1798.3,380.6 C1800.2,380.4 1802.1,380.3 1803.9,380.3 C1805.7,380.4 1807.6,380.6 1809.3,380.9 C1811.1,381.2 1812.8,381.6 1814.4,382.2 C1816.0,382.8 1817.6,383.5 1819.1,384.3 C1820.6,385.1 1822.0,386.0 1823.4,387.1Z"/></clipPath><path d="M1834.4,397.6 C1835.7,398.7 1836.9,399.8 1838.0,401.1 C1839.2,402.4 1840.2,403.8 1841.1,405.2 C1842.0,406.7 1842.9,408.3 1843.5,409.9 C1844.2,411.5 1844.8,413.3 1845.3,415.1 C1845.7,416.8 1846.0,418.7 1846.2,420.6 C1846.4,422.5 1846.5,424.4 1846.5,426.4 C1846.4,428.4 1846.3,430.4 1846.0,432.4 C1845.7,434.5 1845.2,436.5 1844.7,438.5 C1844.2,440.6 1843.5,442.6 1842.7,444.6 C1842.0,446.6 1841.1,448.6 1840.1,450.6 C1839.1,452.5 1837.9,454.5 1836.7,456.3 C1835.5,458.2 1834.2,460.0 1832.9,461.7 C1831.5,463.5 1830.0,465.1 1828.4,466.7 C1826.9,468.3 1825.3,469.8 1823.6,471.2 C1821.9,472.6 1820.1,474.0 1818.4,475.2 C1816.6,476.4 1814.7,477.5 1812.9,478.4 C1811.0,479.4 1809.1,480.3 1807.2,481.0 C1805.3,481.7 1803.4,482.4 1801.4,482.8 C1799.5,483.3 1797.6,483.7 1795.7,483.9 C1793.8,484.1 1791.9,484.2 1790.1,484.2 C1788.3,484.1 1786.4,483.9 1784.7,483.6 C1782.9,483.3 1781.2,482.9 1779.6,482.3 C1778.0,481.7 1776.4,481.0 1774.9,480.2 C1773.4,479.4 1772.0,478.5 1770.6,477.4 C1769.3,476.3 1768.1,475.2 1767.0,473.9 C1765.8,472.6 1764.8,471.2 1763.9,469.8 C1763.0,468.3 1762.1,466.7 1761.5,465.1 C1760.8,463.5 1760.2,461.7 1759.7,459.9 C1759.3,458.2 1759.0,456.3 1758.8,454.4 C1758.6,452.5 1758.5,450.6 1758.5,448.6 C1758.6,446.6 1758.7,444.6 1759.0,442.6 C1759.3,440.5 1759.8,438.5 1760.3,436.5 C1760.8,434.4 1761.5,432.4 1762.3,430.4 C1763.0,428.4 1763.9,426.4 1764.9,424.4 C1765.9,422.5 1767.1,420.5 1768.3,418.7 C1769.5,416.8 1770.8,415.0 1772.1,413.3 C1773.5,411.5 1775.0,409.9 1776.6,408.3 C1778.1,406.7 1779.7,405.2 1781.4,403.8 C1783.1,402.4 1784.9,401.0 1786.6,399.8 C1788.4,398.6 1790.3,397.5 1792.1,396.6 C1794.0,395.6 1795.9,394.7 1797.8,394.0 C1799.7,393.3 1801.6,392.6 1803.6,392.2 C1805.5,391.7 1807.4,391.3 1809.3,391.1 C1811.2,390.9 1813.1,390.8 1814.9,390.8 C1816.7,390.9 1818.6,391.1 1820.3,391.4 C1822.1,391.7 1823.8,392.1 1825.4,392.7 C1827.0,393.3 1828.6,394.0 1830.1,394.8 C1831.6,395.6 1833.0,396.5 1834.4,397.6Z" fill="url(#wallL)"/><g clip-path="url(#hBRf)"><g clip-path="url(#hBRb)"><path d="M1823.4,387.1 C1824.7,388.2 1825.9,389.3 1827.0,390.6 C1828.2,391.9 1829.2,393.3 1830.1,394.7 C1831.0,396.2 1831.9,397.8 1832.5,399.4 C1833.2,401.0 1833.8,402.8 1834.3,404.6 C1834.7,406.3 1835.0,408.2 1835.2,410.1 C1835.4,412.0 1835.5,413.9 1835.5,415.9 C1835.4,417.9 1835.3,419.9 1835.0,421.9 C1834.7,424.0 1834.2,426.0 1833.7,428.0 C1833.2,430.1 1832.5,432.1 1831.7,434.1 C1831.0,436.1 1830.1,438.1 1829.1,440.1 C1828.1,442.0 1826.9,444.0 1825.7,445.8 C1824.5,447.7 1823.2,449.5 1821.9,451.2 C1820.5,453.0 1819.0,454.6 1817.4,456.2 C1815.9,457.8 1814.3,459.3 1812.6,460.7 C1810.9,462.1 1809.1,463.5 1807.4,464.7 C1805.6,465.9 1803.7,467.0 1801.9,467.9 C1800.0,468.9 1798.1,469.8 1796.2,470.5 C1794.3,471.2 1792.4,471.9 1790.4,472.3 C1788.5,472.8 1786.6,473.2 1784.7,473.4 C1782.8,473.6 1780.9,473.7 1779.1,473.7 C1777.3,473.6 1775.4,473.4 1773.7,473.1 C1771.9,472.8 1770.2,472.4 1768.6,471.8 C1767.0,471.2 1765.4,470.5 1763.9,469.7 C1762.4,468.9 1761.0,468.0 1759.6,466.9 C1758.3,465.8 1757.1,464.7 1756.0,463.4 C1754.8,462.1 1753.8,460.7 1752.9,459.3 C1752.0,457.8 1751.1,456.2 1750.5,454.6 C1749.8,453.0 1749.2,451.2 1748.7,449.4 C1748.3,447.7 1748.0,445.8 1747.8,443.9 C1747.6,442.0 1747.5,440.1 1747.5,438.1 C1747.6,436.1 1747.7,434.1 1748.0,432.1 C1748.3,430.0 1748.8,428.0 1749.3,426.0 C1749.8,423.9 1750.5,421.9 1751.3,419.9 C1752.0,417.9 1752.9,415.9 1753.9,413.9 C1754.9,412.0 1756.1,410.0 1757.3,408.2 C1758.5,406.3 1759.8,404.5 1761.1,402.8 C1762.5,401.0 1764.0,399.4 1765.6,397.8 C1767.1,396.2 1768.7,394.7 1770.4,393.3 C1772.1,391.9 1773.9,390.5 1775.6,389.3 C1777.4,388.1 1779.3,387.0 1781.1,386.1 C1783.0,385.1 1784.9,384.2 1786.8,383.5 C1788.7,382.8 1790.6,382.1 1792.6,381.7 C1794.5,381.2 1796.4,380.8 1798.3,380.6 C1800.2,380.4 1802.1,380.3 1803.9,380.3 C1805.7,380.4 1807.6,380.6 1809.3,380.9 C1811.1,381.2 1812.8,381.6 1814.4,382.2 C1816.0,382.8 1817.6,383.5 1819.1,384.3 C1820.6,385.1 1822.0,386.0 1823.4,387.1Z" fill="#fff"/></g><path d="M1823.4,387.1 C1824.7,388.2 1825.9,389.3 1827.0,390.6 C1828.2,391.9 1829.2,393.3 1830.1,394.7 C1831.0,396.2 1831.9,397.8 1832.5,399.4 C1833.2,401.0 1833.8,402.8 1834.3,404.6 C1834.7,406.3 1835.0,408.2 1835.2,410.1 C1835.4,412.0 1835.5,413.9 1835.5,415.9 C1835.4,417.9 1835.3,419.9 1835.0,421.9 C1834.7,424.0 1834.2,426.0 1833.7,428.0 C1833.2,430.1 1832.5,432.1 1831.7,434.1 C1831.0,436.1 1830.1,438.1 1829.1,440.1 C1828.1,442.0 1826.9,444.0 1825.7,445.8 C1824.5,447.7 1823.2,449.5 1821.9,451.2 C1820.5,453.0 1819.0,454.6 1817.4,456.2 C1815.9,457.8 1814.3,459.3 1812.6,460.7 C1810.9,462.1 1809.1,463.5 1807.4,464.7 C1805.6,465.9 1803.7,467.0 1801.9,467.9 C1800.0,468.9 1798.1,469.8 1796.2,470.5 C1794.3,471.2 1792.4,471.9 1790.4,472.3 C1788.5,472.8 1786.6,473.2 1784.7,473.4 C1782.8,473.6 1780.9,473.7 1779.1,473.7 C1777.3,473.6 1775.4,473.4 1773.7,473.1 C1771.9,472.8 1770.2,472.4 1768.6,471.8 C1767.0,471.2 1765.4,470.5 1763.9,469.7 C1762.4,468.9 1761.0,468.0 1759.6,466.9 C1758.3,465.8 1757.1,464.7 1756.0,463.4 C1754.8,462.1 1753.8,460.7 1752.9,459.3 C1752.0,457.8 1751.1,456.2 1750.5,454.6 C1749.8,453.0 1749.2,451.2 1748.7,449.4 C1748.3,447.7 1748.0,445.8 1747.8,443.9 C1747.6,442.0 1747.5,440.1 1747.5,438.1 C1747.6,436.1 1747.7,434.1 1748.0,432.1 C1748.3,430.0 1748.8,428.0 1749.3,426.0 C1749.8,423.9 1750.5,421.9 1751.3,419.9 C1752.0,417.9 1752.9,415.9 1753.9,413.9 C1754.9,412.0 1756.1,410.0 1757.3,408.2 C1758.5,406.3 1759.8,404.5 1761.1,402.8 C1762.5,401.0 1764.0,399.4 1765.6,397.8 C1767.1,396.2 1768.7,394.7 1770.4,393.3 C1772.1,391.9 1773.9,390.5 1775.6,389.3 C1777.4,388.1 1779.3,387.0 1781.1,386.1 C1783.0,385.1 1784.9,384.2 1786.8,383.5 C1788.7,382.8 1790.6,382.1 1792.6,381.7 C1794.5,381.2 1796.4,380.8 1798.3,380.6 C1800.2,380.4 1802.1,380.3 1803.9,380.3 C1805.7,380.4 1807.6,380.6 1809.3,380.9 C1811.1,381.2 1812.8,381.6 1814.4,382.2 C1816.0,382.8 1817.6,383.5 1819.1,384.3 C1820.6,385.1 1822.0,386.0 1823.4,387.1Z" fill="none" stroke="#0f1f0f" stroke-width="1.3" stroke-linejoin="round"/></g><path d="M1834.4,397.6 C1835.7,398.7 1836.9,399.8 1838.0,401.1 C1839.2,402.4 1840.2,403.8 1841.1,405.2 C1842.0,406.7 1842.9,408.3 1843.5,409.9 C1844.2,411.5 1844.8,413.3 1845.3,415.1 C1845.7,416.8 1846.0,418.7 1846.2,420.6 C1846.4,422.5 1846.5,424.4 1846.5,426.4 C1846.4,428.4 1846.3,430.4 1846.0,432.4 C1845.7,434.5 1845.2,436.5 1844.7,438.5 C1844.2,440.6 1843.5,442.6 1842.7,444.6 C1842.0,446.6 1841.1,448.6 1840.1,450.6 C1839.1,452.5 1837.9,454.5 1836.7,456.3 C1835.5,458.2 1834.2,460.0 1832.9,461.7 C1831.5,463.5 1830.0,465.1 1828.4,466.7 C1826.9,468.3 1825.3,469.8 1823.6,471.2 C1821.9,472.6 1820.1,474.0 1818.4,475.2 C1816.6,476.4 1814.7,477.5 1812.9,478.4 C1811.0,479.4 1809.1,480.3 1807.2,481.0 C1805.3,481.7 1803.4,482.4 1801.4,482.8 C1799.5,483.3 1797.6,483.7 1795.7,483.9 C1793.8,484.1 1791.9,484.2 1790.1,484.2 C1788.3,484.1 1786.4,483.9 1784.7,483.6 C1782.9,483.3 1781.2,482.9 1779.6,482.3 C1778.0,481.7 1776.4,481.0 1774.9,480.2 C1773.4,479.4 1772.0,478.5 1770.6,477.4 C1769.3,476.3 1768.1,475.2 1767.0,473.9 C1765.8,472.6 1764.8,471.2 1763.9,469.8 C1763.0,468.3 1762.1,466.7 1761.5,465.1 C1760.8,463.5 1760.2,461.7 1759.7,459.9 C1759.3,458.2 1759.0,456.3 1758.8,454.4 C1758.6,452.5 1758.5,450.6 1758.5,448.6 C1758.6,446.6 1758.7,444.6 1759.0,442.6 C1759.3,440.5 1759.8,438.5 1760.3,436.5 C1760.8,434.4 1761.5,432.4 1762.3,430.4 C1763.0,428.4 1763.9,426.4 1764.9,424.4 C1765.9,422.5 1767.1,420.5 1768.3,418.7 C1769.5,416.8 1770.8,415.0 1772.1,413.3 C1773.5,411.5 1775.0,409.9 1776.6,408.3 C1778.1,406.7 1779.7,405.2 1781.4,403.8 C1783.1,402.4 1784.9,401.0 1786.6,399.8 C1788.4,398.6 1790.3,397.5 1792.1,396.6 C1794.0,395.6 1795.9,394.7 1797.8,394.0 C1799.7,393.3 1801.6,392.6 1803.6,392.2 C1805.5,391.7 1807.4,391.3 1809.3,391.1 C1811.2,390.9 1813.1,390.8 1814.9,390.8 C1816.7,390.9 1818.6,391.1 1820.3,391.4 C1822.1,391.7 1823.8,392.1 1825.4,392.7 C1827.0,393.3 1828.6,394.0 1830.1,394.8 C1831.6,395.6 1833.0,396.5 1834.4,397.6Z" fill="none" stroke="#0f1f0f" stroke-width="1.3" stroke-linejoin="round"/><ellipse cx="971.6" cy="519.8" rx="9.40" ry="7.15" transform="rotate(-51.4 971.6 519.8)" fill="url(#sh)" stroke="#0f1f0f" stroke-width="1.3" stroke-linejoin="round"/><ellipse cx="1071.1" cy="584.8" rx="9.40" ry="7.15" transform="rotate(-51.4 1071.1 584.8)" fill="url(#sh)" stroke="#0f1f0f" stroke-width="1.3" stroke-linejoin="round"/><ellipse cx="942.0" cy="663.8" rx="9.40" ry="7.15" transform="rotate(-51.4 942.0 663.8)" fill="url(#sh)" stroke="#0f1f0f" stroke-width="1.3" stroke-linejoin="round"/><ellipse cx="1054.9" cy="669.0" rx="9.40" ry="7.15" transform="rotate(-51.4 1054.9 669.0)" fill="url(#sh)" stroke="#0f1f0f" stroke-width="1.3" stroke-linejoin="round"/><ellipse cx="1234.9" cy="471.8" rx="9.40" ry="7.15" transform="rotate(-51.4 1234.9 471.8)" fill="url(#sh)" stroke="#0f1f0f" stroke-width="1.3" stroke-linejoin="round"/><ellipse cx="1612.5" cy="411.9" rx="9.40" ry="7.15" transform="rotate(-51.4 1612.5 411.9)" fill="url(#sh)" stroke="#0f1f0f" stroke-width="1.3" stroke-linejoin="round"/><path d="M1118.0,519.0 L1180.0,509.6 L1560.0,450.5 L1760.0,419.6 L1864.6,403.8 C1867.6,403.6 1876.3,401.9 1882.4,402.9 C1888.5,403.9 1895.4,406.6 1901.1,409.7 C1906.8,412.8 1912.2,417.6 1916.4,421.6 C1920.6,425.6 1924.7,431.8 1926.3,433.8 L1960.6,479.4 C1961.0,480.8 1963.0,484.8 1963.2,487.9 C1963.4,491.0 1962.8,495.6 1961.5,498.1 C1960.2,500.7 1956.5,502.4 1955.5,503.2 L1868.8,549 L1400,704.3 L1360,717.2 Q1351,720.3 1338,721.8 L1150,730.7 C1147.4,730.9 1140.8,731.9 1134.3,732.1 C1127.8,732.3 1116.5,732.9 1111.1,732.1 C1105.7,731.3 1104.0,728.6 1101.9,727.5 C1099.8,726.4 1100.2,726.2 1098.4,725.2 C1096.7,724.2 1093.1,723.6 1091.4,721.7 C1089.7,719.8 1088.4,716.5 1088.0,713.6 C1087.6,710.7 1087.9,707.2 1089.1,704.3 C1090.2,701.4 1093.2,698.1 1094.9,696.2 C1096.6,694.3 1096.4,696.4 1099.5,692.7 C1102.6,689.0 1108.7,681.5 1113.5,674.2 C1118.3,666.9 1124.5,657.2 1128.5,648.7 C1132.5,640.2 1135.9,631.3 1137.8,623.2 C1139.7,615.1 1139.7,606.2 1140.1,600.0 C1140.5,593.8 1141.1,592.1 1140.1,585.9 C1139.1,579.7 1136.6,568.7 1134.3,562.7 C1132.0,556.7 1128.9,555.5 1126.2,550.0 C1123.5,544.5 1119.4,533.3 1118.0,530.0Z" fill="#28682c" stroke="#0f1f0f" stroke-width="1.3" stroke-linejoin="round"/><path d="M1118.0,519.0 L1180.0,509.6 L1560.0,450.5 L1760.0,419.6 L1864.6,403.8 C1867.6,403.6 1876.3,401.9 1882.4,402.9 C1888.5,403.9 1895.4,406.6 1901.1,409.7 C1906.8,412.8 1912.2,417.6 1916.4,421.6 C1920.6,425.6 1924.7,431.8 1926.3,433.8 C1923.5,431.8 1915.2,425.1 1909.6,421.6 C1904.0,418.2 1898.7,414.7 1892.6,413.1 C1886.5,411.6 1876.3,412.4 1873.0,412.3 L1760,431.2 L1560,462.9 L1180,521.2 L1125,530Z" fill="#46a04b" stroke="#0f1f0f" stroke-width="1.3" stroke-linejoin="round"/><path d="M1125.0,530.0 L1180.0,521.2 L1560.0,462.9 L1760.0,431.2 L1873.0,412.3 C1876.3,412.4 1886.5,411.6 1892.6,413.1 C1898.7,414.7 1904.0,418.2 1909.6,421.6 C1915.2,425.1 1923.5,431.8 1926.3,433.8 L1960.6,479.4 C1961.0,480.8 1963.0,484.8 1963.2,487.9 C1963.4,491.0 1962.8,495.6 1961.5,498.1 C1960.2,500.7 1956.5,502.4 1955.5,503.2 L1868.8,549 L1400,704.3 L1360,717.2 Q1351,720.3 1338,721.8 L1150,730.7 C1147.4,730.9 1140.8,731.9 1134.3,732.1 C1127.8,732.3 1116.5,732.9 1111.1,732.1 C1105.7,731.3 1103.8,729.6 1101.9,727.5 C1100.0,725.4 1099.5,722.1 1099.5,719.4 C1099.5,716.7 1100.7,713.6 1101.9,711.3 C1103.1,709.0 1103.4,708.6 1106.5,705.5 C1109.6,702.4 1115.8,698.3 1120.4,692.7 C1125.0,687.1 1130.0,679.6 1134.3,671.9 C1138.5,664.2 1143.2,654.5 1145.9,646.4 C1148.6,638.3 1149.6,630.1 1150.6,623.2 C1151.6,616.3 1152.0,610.2 1152.0,605.0 C1152.0,599.8 1151.8,597.8 1150.6,591.7 C1149.4,585.6 1148.1,575.5 1144.8,568.5 C1141.5,561.5 1134.1,556.4 1130.8,550.0 C1127.5,543.6 1126.0,533.3 1125.0,530.0Z" fill="#3b8440" stroke="#0f1f0f" stroke-width="1.3" stroke-linejoin="round"/><path d="M1864.6,403.8 L1873,412.3 M1094.9,696.8 L1106.5,705.5" stroke="#0f1f0f" stroke-width="1.3" stroke-linejoin="round"/><path d="M1099.5,692.7 C1101.8,689.6 1108.7,681.5 1113.5,674.2 C1118.3,666.9 1124.5,657.2 1128.5,648.7 C1132.5,640.2 1135.9,631.3 1137.8,623.2 C1139.7,615.1 1139.7,606.2 1140.1,600.0 C1140.5,593.8 1141.1,592.1 1140.1,585.9 C1139.1,579.7 1136.6,568.7 1134.3,562.7 C1132.0,556.7 1127.5,552.1 1126.2,550.0" fill="none" stroke="#0f1f0f" stroke-width="1.3" stroke-linejoin="round"/><clipPath id="hAf"><path d="M1388.9,578.1 C1390.2,579.2 1391.4,580.4 1392.6,581.7 C1393.7,582.9 1394.8,584.3 1395.7,585.8 C1396.6,587.3 1397.4,588.9 1398.1,590.5 C1398.8,592.2 1399.4,593.9 1399.8,595.7 C1400.3,597.5 1400.6,599.4 1400.8,601.3 C1401.0,603.2 1401.1,605.2 1401.1,607.1 C1401.0,609.1 1400.9,611.2 1400.6,613.2 C1400.3,615.2 1399.8,617.3 1399.3,619.3 C1398.8,621.4 1398.1,623.4 1397.3,625.5 C1396.5,627.5 1395.6,629.5 1394.6,631.5 C1393.6,633.4 1392.5,635.4 1391.3,637.2 C1390.1,639.1 1388.8,640.9 1387.4,642.7 C1386.0,644.4 1384.5,646.1 1382.9,647.7 C1381.4,649.3 1379.7,650.8 1378.0,652.3 C1376.3,653.7 1374.6,655.0 1372.8,656.2 C1371.0,657.4 1369.1,658.5 1367.2,659.5 C1365.4,660.5 1363.4,661.4 1361.5,662.1 C1359.6,662.8 1357.7,663.5 1355.7,664.0 C1353.8,664.4 1351.9,664.8 1350.0,665.0 C1348.1,665.2 1346.2,665.3 1344.3,665.3 C1342.5,665.2 1340.6,665.1 1338.9,664.7 C1337.1,664.4 1335.4,664.0 1333.7,663.4 C1332.1,662.8 1330.5,662.1 1329.0,661.3 C1327.5,660.5 1326.1,659.5 1324.7,658.5 C1323.4,657.4 1322.2,656.2 1321.0,654.9 C1319.9,653.7 1318.8,652.3 1317.9,650.8 C1317.0,649.3 1316.2,647.7 1315.5,646.1 C1314.8,644.4 1314.2,642.7 1313.8,640.9 C1313.3,639.1 1313.0,637.2 1312.8,635.3 C1312.6,633.4 1312.5,631.4 1312.5,629.5 C1312.6,627.5 1312.7,625.4 1313.0,623.4 C1313.3,621.4 1313.8,619.3 1314.3,617.3 C1314.8,615.2 1315.5,613.2 1316.3,611.1 C1317.1,609.1 1318.0,607.1 1319.0,605.1 C1320.0,603.2 1321.1,601.2 1322.3,599.4 C1323.5,597.5 1324.8,595.7 1326.2,593.9 C1327.6,592.2 1329.1,590.5 1330.7,588.9 C1332.2,587.3 1333.9,585.8 1335.6,584.3 C1337.3,582.9 1339.0,581.6 1340.8,580.4 C1342.6,579.2 1344.5,578.1 1346.4,577.1 C1348.2,576.1 1350.2,575.2 1352.1,574.5 C1354.0,573.8 1355.9,573.1 1357.9,572.6 C1359.8,572.2 1361.7,571.8 1363.6,571.6 C1365.5,571.4 1367.4,571.3 1369.3,571.3 C1371.1,571.4 1373.0,571.5 1374.7,571.9 C1376.5,572.2 1378.2,572.6 1379.9,573.2 C1381.5,573.8 1383.1,574.5 1384.6,575.3 C1386.1,576.1 1387.5,577.1 1388.9,578.1Z"/></clipPath><clipPath id="hAb"><path d="M1377.9,567.6 C1379.2,568.7 1380.4,569.9 1381.6,571.2 C1382.7,572.4 1383.8,573.8 1384.7,575.3 C1385.6,576.8 1386.4,578.4 1387.1,580.0 C1387.8,581.7 1388.4,583.4 1388.8,585.2 C1389.3,587.0 1389.6,588.9 1389.8,590.8 C1390.0,592.7 1390.1,594.7 1390.1,596.6 C1390.0,598.6 1389.9,600.7 1389.6,602.7 C1389.3,604.7 1388.8,606.8 1388.3,608.8 C1387.8,610.9 1387.1,612.9 1386.3,615.0 C1385.5,617.0 1384.6,619.0 1383.6,621.0 C1382.6,622.9 1381.5,624.9 1380.3,626.7 C1379.1,628.6 1377.8,630.4 1376.4,632.2 C1375.0,633.9 1373.5,635.6 1371.9,637.2 C1370.4,638.8 1368.7,640.3 1367.0,641.8 C1365.3,643.2 1363.6,644.5 1361.8,645.7 C1360.0,646.9 1358.1,648.0 1356.2,649.0 C1354.4,650.0 1352.4,650.9 1350.5,651.6 C1348.6,652.3 1346.7,653.0 1344.7,653.5 C1342.8,653.9 1340.9,654.3 1339.0,654.5 C1337.1,654.7 1335.2,654.8 1333.3,654.8 C1331.5,654.7 1329.6,654.6 1327.9,654.2 C1326.1,653.9 1324.4,653.5 1322.7,652.9 C1321.1,652.3 1319.5,651.6 1318.0,650.8 C1316.5,650.0 1315.1,649.0 1313.7,648.0 C1312.4,646.9 1311.2,645.7 1310.0,644.4 C1308.9,643.2 1307.8,641.8 1306.9,640.3 C1306.0,638.8 1305.2,637.2 1304.5,635.6 C1303.8,633.9 1303.2,632.2 1302.8,630.4 C1302.3,628.6 1302.0,626.7 1301.8,624.8 C1301.6,622.9 1301.5,620.9 1301.5,619.0 C1301.6,617.0 1301.7,614.9 1302.0,612.9 C1302.3,610.9 1302.8,608.8 1303.3,606.8 C1303.8,604.7 1304.5,602.7 1305.3,600.6 C1306.1,598.6 1307.0,596.6 1308.0,594.6 C1309.0,592.7 1310.1,590.7 1311.3,588.9 C1312.5,587.0 1313.8,585.2 1315.2,583.4 C1316.6,581.7 1318.1,580.0 1319.7,578.4 C1321.2,576.8 1322.9,575.3 1324.6,573.8 C1326.3,572.4 1328.0,571.1 1329.8,569.9 C1331.6,568.7 1333.5,567.6 1335.4,566.6 C1337.2,565.6 1339.2,564.7 1341.1,564.0 C1343.0,563.3 1344.9,562.6 1346.9,562.1 C1348.8,561.7 1350.7,561.3 1352.6,561.1 C1354.5,560.9 1356.4,560.8 1358.3,560.8 C1360.1,560.9 1362.0,561.0 1363.7,561.4 C1365.5,561.7 1367.2,562.1 1368.9,562.7 C1370.5,563.3 1372.1,564.0 1373.6,564.8 C1375.1,565.6 1376.5,566.6 1377.9,567.6Z"/></clipPath><path d="M1388.9,578.1 C1390.2,579.2 1391.4,580.4 1392.6,581.7 C1393.7,582.9 1394.8,584.3 1395.7,585.8 C1396.6,587.3 1397.4,588.9 1398.1,590.5 C1398.8,592.2 1399.4,593.9 1399.8,595.7 C1400.3,597.5 1400.6,599.4 1400.8,601.3 C1401.0,603.2 1401.1,605.2 1401.1,607.1 C1401.0,609.1 1400.9,611.2 1400.6,613.2 C1400.3,615.2 1399.8,617.3 1399.3,619.3 C1398.8,621.4 1398.1,623.4 1397.3,625.5 C1396.5,627.5 1395.6,629.5 1394.6,631.5 C1393.6,633.4 1392.5,635.4 1391.3,637.2 C1390.1,639.1 1388.8,640.9 1387.4,642.7 C1386.0,644.4 1384.5,646.1 1382.9,647.7 C1381.4,649.3 1379.7,650.8 1378.0,652.3 C1376.3,653.7 1374.6,655.0 1372.8,656.2 C1371.0,657.4 1369.1,658.5 1367.2,659.5 C1365.4,660.5 1363.4,661.4 1361.5,662.1 C1359.6,662.8 1357.7,663.5 1355.7,664.0 C1353.8,664.4 1351.9,664.8 1350.0,665.0 C1348.1,665.2 1346.2,665.3 1344.3,665.3 C1342.5,665.2 1340.6,665.1 1338.9,664.7 C1337.1,664.4 1335.4,664.0 1333.7,663.4 C1332.1,662.8 1330.5,662.1 1329.0,661.3 C1327.5,660.5 1326.1,659.5 1324.7,658.5 C1323.4,657.4 1322.2,656.2 1321.0,654.9 C1319.9,653.7 1318.8,652.3 1317.9,650.8 C1317.0,649.3 1316.2,647.7 1315.5,646.1 C1314.8,644.4 1314.2,642.7 1313.8,640.9 C1313.3,639.1 1313.0,637.2 1312.8,635.3 C1312.6,633.4 1312.5,631.4 1312.5,629.5 C1312.6,627.5 1312.7,625.4 1313.0,623.4 C1313.3,621.4 1313.8,619.3 1314.3,617.3 C1314.8,615.2 1315.5,613.2 1316.3,611.1 C1317.1,609.1 1318.0,607.1 1319.0,605.1 C1320.0,603.2 1321.1,601.2 1322.3,599.4 C1323.5,597.5 1324.8,595.7 1326.2,593.9 C1327.6,592.2 1329.1,590.5 1330.7,588.9 C1332.2,587.3 1333.9,585.8 1335.6,584.3 C1337.3,582.9 1339.0,581.6 1340.8,580.4 C1342.6,579.2 1344.5,578.1 1346.4,577.1 C1348.2,576.1 1350.2,575.2 1352.1,574.5 C1354.0,573.8 1355.9,573.1 1357.9,572.6 C1359.8,572.2 1361.7,571.8 1363.6,571.6 C1365.5,571.4 1367.4,571.3 1369.3,571.3 C1371.1,571.4 1373.0,571.5 1374.7,571.9 C1376.5,572.2 1378.2,572.6 1379.9,573.2 C1381.5,573.8 1383.1,574.5 1384.6,575.3 C1386.1,576.1 1387.5,577.1 1388.9,578.1Z" fill="url(#wallL)"/><g clip-path="url(#hAf)"><g clip-path="url(#hAb)"><path d="M1377.9,567.6 C1379.2,568.7 1380.4,569.9 1381.6,571.2 C1382.7,572.4 1383.8,573.8 1384.7,575.3 C1385.6,576.8 1386.4,578.4 1387.1,580.0 C1387.8,581.7 1388.4,583.4 1388.8,585.2 C1389.3,587.0 1389.6,588.9 1389.8,590.8 C1390.0,592.7 1390.1,594.7 1390.1,596.6 C1390.0,598.6 1389.9,600.7 1389.6,602.7 C1389.3,604.7 1388.8,606.8 1388.3,608.8 C1387.8,610.9 1387.1,612.9 1386.3,615.0 C1385.5,617.0 1384.6,619.0 1383.6,621.0 C1382.6,622.9 1381.5,624.9 1380.3,626.7 C1379.1,628.6 1377.8,630.4 1376.4,632.2 C1375.0,633.9 1373.5,635.6 1371.9,637.2 C1370.4,638.8 1368.7,640.3 1367.0,641.8 C1365.3,643.2 1363.6,644.5 1361.8,645.7 C1360.0,646.9 1358.1,648.0 1356.2,649.0 C1354.4,650.0 1352.4,650.9 1350.5,651.6 C1348.6,652.3 1346.7,653.0 1344.7,653.5 C1342.8,653.9 1340.9,654.3 1339.0,654.5 C1337.1,654.7 1335.2,654.8 1333.3,654.8 C1331.5,654.7 1329.6,654.6 1327.9,654.2 C1326.1,653.9 1324.4,653.5 1322.7,652.9 C1321.1,652.3 1319.5,651.6 1318.0,650.8 C1316.5,650.0 1315.1,649.0 1313.7,648.0 C1312.4,646.9 1311.2,645.7 1310.0,644.4 C1308.9,643.2 1307.8,641.8 1306.9,640.3 C1306.0,638.8 1305.2,637.2 1304.5,635.6 C1303.8,633.9 1303.2,632.2 1302.8,630.4 C1302.3,628.6 1302.0,626.7 1301.8,624.8 C1301.6,622.9 1301.5,620.9 1301.5,619.0 C1301.6,617.0 1301.7,614.9 1302.0,612.9 C1302.3,610.9 1302.8,608.8 1303.3,606.8 C1303.8,604.7 1304.5,602.7 1305.3,600.6 C1306.1,598.6 1307.0,596.6 1308.0,594.6 C1309.0,592.7 1310.1,590.7 1311.3,588.9 C1312.5,587.0 1313.8,585.2 1315.2,583.4 C1316.6,581.7 1318.1,580.0 1319.7,578.4 C1321.2,576.8 1322.9,575.3 1324.6,573.8 C1326.3,572.4 1328.0,571.1 1329.8,569.9 C1331.6,568.7 1333.5,567.6 1335.4,566.6 C1337.2,565.6 1339.2,564.7 1341.1,564.0 C1343.0,563.3 1344.9,562.6 1346.9,562.1 C1348.8,561.7 1350.7,561.3 1352.6,561.1 C1354.5,560.9 1356.4,560.8 1358.3,560.8 C1360.1,560.9 1362.0,561.0 1363.7,561.4 C1365.5,561.7 1367.2,562.1 1368.9,562.7 C1370.5,563.3 1372.1,564.0 1373.6,564.8 C1375.1,565.6 1376.5,566.6 1377.9,567.6Z" fill="#fff"/><path d="M1377.9,567.6 C1379.2,568.7 1380.4,569.9 1381.6,571.2 C1382.7,572.4 1383.8,573.8 1384.7,575.3 C1385.6,576.8 1386.4,578.4 1387.1,580.0 C1387.8,581.7 1388.4,583.4 1388.8,585.2 C1389.3,587.0 1389.6,588.9 1389.8,590.8 C1390.0,592.7 1390.1,594.7 1390.1,596.6 C1390.0,598.6 1389.9,600.7 1389.6,602.7 C1389.3,604.7 1388.8,606.8 1388.3,608.8 C1387.8,610.9 1387.1,612.9 1386.3,615.0 C1385.5,617.0 1384.6,619.0 1383.6,621.0 C1382.6,622.9 1381.5,624.9 1380.3,626.7 C1379.1,628.6 1377.8,630.4 1376.4,632.2 C1375.0,633.9 1373.5,635.6 1371.9,637.2 C1370.4,638.8 1368.7,640.3 1367.0,641.8 C1365.3,643.2 1363.6,644.5 1361.8,645.7 C1360.0,646.9 1358.1,648.0 1356.2,649.0 C1354.4,650.0 1352.4,650.9 1350.5,651.6 C1348.6,652.3 1346.7,653.0 1344.7,653.5 C1342.8,653.9 1340.9,654.3 1339.0,654.5 C1337.1,654.7 1335.2,654.8 1333.3,654.8 C1331.5,654.7 1329.6,654.6 1327.9,654.2 C1326.1,653.9 1324.4,653.5 1322.7,652.9 C1321.1,652.3 1319.5,651.6 1318.0,650.8 C1316.5,650.0 1315.1,649.0 1313.7,648.0 C1312.4,646.9 1311.2,645.7 1310.0,644.4 C1308.9,643.2 1307.8,641.8 1306.9,640.3 C1306.0,638.8 1305.2,637.2 1304.5,635.6 C1303.8,633.9 1303.2,632.2 1302.8,630.4 C1302.3,628.6 1302.0,626.7 1301.8,624.8 C1301.6,622.9 1301.5,620.9 1301.5,619.0 C1301.6,617.0 1301.7,614.9 1302.0,612.9 C1302.3,610.9 1302.8,608.8 1303.3,606.8 C1303.8,604.7 1304.5,602.7 1305.3,600.6 C1306.1,598.6 1307.0,596.6 1308.0,594.6 C1309.0,592.7 1310.1,590.7 1311.3,588.9 C1312.5,587.0 1313.8,585.2 1315.2,583.4 C1316.6,581.7 1318.1,580.0 1319.7,578.4 C1321.2,576.8 1322.9,575.3 1324.6,573.8 C1326.3,572.4 1328.0,571.1 1329.8,569.9 C1331.6,568.7 1333.5,567.6 1335.4,566.6 C1337.2,565.6 1339.2,564.7 1341.1,564.0 C1343.0,563.3 1344.9,562.6 1346.9,562.1 C1348.8,561.7 1350.7,561.3 1352.6,561.1 C1354.5,560.9 1356.4,560.8 1358.3,560.8 C1360.1,560.9 1362.0,561.0 1363.7,561.4 C1365.5,561.7 1367.2,562.1 1368.9,562.7 C1370.5,563.3 1372.1,564.0 1373.6,564.8 C1375.1,565.6 1376.5,566.6 1377.9,567.6Z" fill="#367c3b"/><path d="M1372,568 L1392,566 L1390,582 Z" fill="#fff"/><ellipse cx="1373.6" cy="629.8" rx="9.40" ry="7.15" transform="rotate(-51.4 1373.6 629.8)" fill="url(#sh)" stroke="#0f1f0f" stroke-width="1.3" stroke-linejoin="round"/></g><path d="M1377.9,567.6 C1379.2,568.7 1380.4,569.9 1381.6,571.2 C1382.7,572.4 1383.8,573.8 1384.7,575.3 C1385.6,576.8 1386.4,578.4 1387.1,580.0 C1387.8,581.7 1388.4,583.4 1388.8,585.2 C1389.3,587.0 1389.6,588.9 1389.8,590.8 C1390.0,592.7 1390.1,594.7 1390.1,596.6 C1390.0,598.6 1389.9,600.7 1389.6,602.7 C1389.3,604.7 1388.8,606.8 1388.3,608.8 C1387.8,610.9 1387.1,612.9 1386.3,615.0 C1385.5,617.0 1384.6,619.0 1383.6,621.0 C1382.6,622.9 1381.5,624.9 1380.3,626.7 C1379.1,628.6 1377.8,630.4 1376.4,632.2 C1375.0,633.9 1373.5,635.6 1371.9,637.2 C1370.4,638.8 1368.7,640.3 1367.0,641.8 C1365.3,643.2 1363.6,644.5 1361.8,645.7 C1360.0,646.9 1358.1,648.0 1356.2,649.0 C1354.4,650.0 1352.4,650.9 1350.5,651.6 C1348.6,652.3 1346.7,653.0 1344.7,653.5 C1342.8,653.9 1340.9,654.3 1339.0,654.5 C1337.1,654.7 1335.2,654.8 1333.3,654.8 C1331.5,654.7 1329.6,654.6 1327.9,654.2 C1326.1,653.9 1324.4,653.5 1322.7,652.9 C1321.1,652.3 1319.5,651.6 1318.0,650.8 C1316.5,650.0 1315.1,649.0 1313.7,648.0 C1312.4,646.9 1311.2,645.7 1310.0,644.4 C1308.9,643.2 1307.8,641.8 1306.9,640.3 C1306.0,638.8 1305.2,637.2 1304.5,635.6 C1303.8,633.9 1303.2,632.2 1302.8,630.4 C1302.3,628.6 1302.0,626.7 1301.8,624.8 C1301.6,622.9 1301.5,620.9 1301.5,619.0 C1301.6,617.0 1301.7,614.9 1302.0,612.9 C1302.3,610.9 1302.8,608.8 1303.3,606.8 C1303.8,604.7 1304.5,602.7 1305.3,600.6 C1306.1,598.6 1307.0,596.6 1308.0,594.6 C1309.0,592.7 1310.1,590.7 1311.3,588.9 C1312.5,587.0 1313.8,585.2 1315.2,583.4 C1316.6,581.7 1318.1,580.0 1319.7,578.4 C1321.2,576.8 1322.9,575.3 1324.6,573.8 C1326.3,572.4 1328.0,571.1 1329.8,569.9 C1331.6,568.7 1333.5,567.6 1335.4,566.6 C1337.2,565.6 1339.2,564.7 1341.1,564.0 C1343.0,563.3 1344.9,562.6 1346.9,562.1 C1348.8,561.7 1350.7,561.3 1352.6,561.1 C1354.5,560.9 1356.4,560.8 1358.3,560.8 C1360.1,560.9 1362.0,561.0 1363.7,561.4 C1365.5,561.7 1367.2,562.1 1368.9,562.7 C1370.5,563.3 1372.1,564.0 1373.6,564.8 C1375.1,565.6 1376.5,566.6 1377.9,567.6Z" fill="none" stroke="#0f1f0f" stroke-width="1.3" stroke-linejoin="round"/></g><path d="M1388.9,578.1 C1390.2,579.2 1391.4,580.4 1392.6,581.7 C1393.7,582.9 1394.8,584.3 1395.7,585.8 C1396.6,587.3 1397.4,588.9 1398.1,590.5 C1398.8,592.2 1399.4,593.9 1399.8,595.7 C1400.3,597.5 1400.6,599.4 1400.8,601.3 C1401.0,603.2 1401.1,605.2 1401.1,607.1 C1401.0,609.1 1400.9,611.2 1400.6,613.2 C1400.3,615.2 1399.8,617.3 1399.3,619.3 C1398.8,621.4 1398.1,623.4 1397.3,625.5 C1396.5,627.5 1395.6,629.5 1394.6,631.5 C1393.6,633.4 1392.5,635.4 1391.3,637.2 C1390.1,639.1 1388.8,640.9 1387.4,642.7 C1386.0,644.4 1384.5,646.1 1382.9,647.7 C1381.4,649.3 1379.7,650.8 1378.0,652.3 C1376.3,653.7 1374.6,655.0 1372.8,656.2 C1371.0,657.4 1369.1,658.5 1367.2,659.5 C1365.4,660.5 1363.4,661.4 1361.5,662.1 C1359.6,662.8 1357.7,663.5 1355.7,664.0 C1353.8,664.4 1351.9,664.8 1350.0,665.0 C1348.1,665.2 1346.2,665.3 1344.3,665.3 C1342.5,665.2 1340.6,665.1 1338.9,664.7 C1337.1,664.4 1335.4,664.0 1333.7,663.4 C1332.1,662.8 1330.5,662.1 1329.0,661.3 C1327.5,660.5 1326.1,659.5 1324.7,658.5 C1323.4,657.4 1322.2,656.2 1321.0,654.9 C1319.9,653.7 1318.8,652.3 1317.9,650.8 C1317.0,649.3 1316.2,647.7 1315.5,646.1 C1314.8,644.4 1314.2,642.7 1313.8,640.9 C1313.3,639.1 1313.0,637.2 1312.8,635.3 C1312.6,633.4 1312.5,631.4 1312.5,629.5 C1312.6,627.5 1312.7,625.4 1313.0,623.4 C1313.3,621.4 1313.8,619.3 1314.3,617.3 C1314.8,615.2 1315.5,613.2 1316.3,611.1 C1317.1,609.1 1318.0,607.1 1319.0,605.1 C1320.0,603.2 1321.1,601.2 1322.3,599.4 C1323.5,597.5 1324.8,595.7 1326.2,593.9 C1327.6,592.2 1329.1,590.5 1330.7,588.9 C1332.2,587.3 1333.9,585.8 1335.6,584.3 C1337.3,582.9 1339.0,581.6 1340.8,580.4 C1342.6,579.2 1344.5,578.1 1346.4,577.1 C1348.2,576.1 1350.2,575.2 1352.1,574.5 C1354.0,573.8 1355.9,573.1 1357.9,572.6 C1359.8,572.2 1361.7,571.8 1363.6,571.6 C1365.5,571.4 1367.4,571.3 1369.3,571.3 C1371.1,571.4 1373.0,571.5 1374.7,571.9 C1376.5,572.2 1378.2,572.6 1379.9,573.2 C1381.5,573.8 1383.1,574.5 1384.6,575.3 C1386.1,576.1 1387.5,577.1 1388.9,578.1Z" fill="none" stroke="#0f1f0f" stroke-width="1.3" stroke-linejoin="round"/><clipPath id="hBf"><path d="M1505.5,547.3 C1506.8,548.4 1508.0,549.6 1509.2,550.9 C1510.3,552.1 1511.4,553.5 1512.3,555.0 C1513.2,556.5 1514.0,558.1 1514.7,559.7 C1515.4,561.4 1516.0,563.1 1516.4,564.9 C1516.9,566.7 1517.2,568.6 1517.4,570.5 C1517.6,572.4 1517.7,574.4 1517.7,576.3 C1517.6,578.3 1517.5,580.4 1517.2,582.4 C1516.9,584.4 1516.4,586.5 1515.9,588.5 C1515.4,590.6 1514.7,592.6 1513.9,594.7 C1513.1,596.7 1512.2,598.7 1511.2,600.7 C1510.2,602.6 1509.1,604.6 1507.9,606.4 C1506.7,608.3 1505.4,610.1 1504.0,611.9 C1502.6,613.6 1501.1,615.3 1499.5,616.9 C1498.0,618.5 1496.3,620.0 1494.6,621.5 C1492.9,622.9 1491.2,624.2 1489.4,625.4 C1487.6,626.6 1485.7,627.7 1483.8,628.7 C1482.0,629.7 1480.0,630.6 1478.1,631.3 C1476.2,632.0 1474.3,632.7 1472.3,633.2 C1470.4,633.6 1468.5,634.0 1466.6,634.2 C1464.7,634.4 1462.8,634.5 1460.9,634.5 C1459.1,634.4 1457.2,634.3 1455.5,633.9 C1453.7,633.6 1452.0,633.2 1450.3,632.6 C1448.7,632.0 1447.1,631.3 1445.6,630.5 C1444.1,629.7 1442.7,628.7 1441.3,627.7 C1440.0,626.6 1438.8,625.4 1437.6,624.1 C1436.5,622.9 1435.4,621.5 1434.5,620.0 C1433.6,618.5 1432.8,616.9 1432.1,615.3 C1431.4,613.6 1430.8,611.9 1430.4,610.1 C1429.9,608.3 1429.6,606.4 1429.4,604.5 C1429.2,602.6 1429.1,600.6 1429.1,598.7 C1429.2,596.7 1429.3,594.6 1429.6,592.6 C1429.9,590.6 1430.4,588.5 1430.9,586.5 C1431.4,584.4 1432.1,582.4 1432.9,580.3 C1433.7,578.3 1434.6,576.3 1435.6,574.3 C1436.6,572.4 1437.7,570.4 1438.9,568.6 C1440.1,566.7 1441.4,564.9 1442.8,563.1 C1444.2,561.4 1445.7,559.7 1447.3,558.1 C1448.8,556.5 1450.5,555.0 1452.2,553.5 C1453.9,552.1 1455.6,550.8 1457.4,549.6 C1459.2,548.4 1461.1,547.3 1463.0,546.3 C1464.8,545.3 1466.8,544.4 1468.7,543.7 C1470.6,543.0 1472.5,542.3 1474.5,541.8 C1476.4,541.4 1478.3,541.0 1480.2,540.8 C1482.1,540.6 1484.0,540.5 1485.9,540.5 C1487.7,540.6 1489.6,540.7 1491.3,541.1 C1493.1,541.4 1494.8,541.8 1496.5,542.4 C1498.1,543.0 1499.7,543.7 1501.2,544.5 C1502.7,545.3 1504.1,546.3 1505.5,547.3Z"/></clipPath><clipPath id="hBb"><path d="M1494.5,536.8 C1495.8,537.9 1497.0,539.1 1498.2,540.4 C1499.3,541.6 1500.4,543.0 1501.3,544.5 C1502.2,546.0 1503.0,547.6 1503.7,549.2 C1504.4,550.9 1505.0,552.6 1505.4,554.4 C1505.9,556.2 1506.2,558.1 1506.4,560.0 C1506.6,561.9 1506.7,563.9 1506.7,565.8 C1506.6,567.8 1506.5,569.9 1506.2,571.9 C1505.9,573.9 1505.4,576.0 1504.9,578.0 C1504.4,580.1 1503.7,582.1 1502.9,584.2 C1502.1,586.2 1501.2,588.2 1500.2,590.2 C1499.2,592.1 1498.1,594.1 1496.9,595.9 C1495.7,597.8 1494.4,599.6 1493.0,601.4 C1491.6,603.1 1490.1,604.8 1488.5,606.4 C1487.0,608.0 1485.3,609.5 1483.6,611.0 C1481.9,612.4 1480.2,613.7 1478.4,614.9 C1476.6,616.1 1474.7,617.2 1472.8,618.2 C1471.0,619.2 1469.0,620.1 1467.1,620.8 C1465.2,621.5 1463.3,622.2 1461.3,622.7 C1459.4,623.1 1457.5,623.5 1455.6,623.7 C1453.7,623.9 1451.8,624.0 1449.9,624.0 C1448.1,623.9 1446.2,623.8 1444.5,623.4 C1442.7,623.1 1441.0,622.7 1439.3,622.1 C1437.7,621.5 1436.1,620.8 1434.6,620.0 C1433.1,619.2 1431.7,618.2 1430.3,617.2 C1429.0,616.1 1427.8,614.9 1426.6,613.6 C1425.5,612.4 1424.4,611.0 1423.5,609.5 C1422.6,608.0 1421.8,606.4 1421.1,604.8 C1420.4,603.1 1419.8,601.4 1419.4,599.6 C1418.9,597.8 1418.6,595.9 1418.4,594.0 C1418.2,592.1 1418.1,590.1 1418.1,588.2 C1418.2,586.2 1418.3,584.1 1418.6,582.1 C1418.9,580.1 1419.4,578.0 1419.9,576.0 C1420.4,573.9 1421.1,571.9 1421.9,569.8 C1422.7,567.8 1423.6,565.8 1424.6,563.8 C1425.6,561.9 1426.7,559.9 1427.9,558.1 C1429.1,556.2 1430.4,554.4 1431.8,552.6 C1433.2,550.9 1434.7,549.2 1436.3,547.6 C1437.8,546.0 1439.5,544.5 1441.2,543.0 C1442.9,541.6 1444.6,540.3 1446.4,539.1 C1448.2,537.9 1450.1,536.8 1452.0,535.8 C1453.8,534.8 1455.8,533.9 1457.7,533.2 C1459.6,532.5 1461.5,531.8 1463.5,531.3 C1465.4,530.9 1467.3,530.5 1469.2,530.3 C1471.1,530.1 1473.0,530.0 1474.9,530.0 C1476.7,530.1 1478.6,530.2 1480.3,530.6 C1482.1,530.9 1483.8,531.3 1485.5,531.9 C1487.1,532.5 1488.7,533.2 1490.2,534.0 C1491.7,534.8 1493.1,535.8 1494.5,536.8Z"/></clipPath><path d="M1505.5,547.3 C1506.8,548.4 1508.0,549.6 1509.2,550.9 C1510.3,552.1 1511.4,553.5 1512.3,555.0 C1513.2,556.5 1514.0,558.1 1514.7,559.7 C1515.4,561.4 1516.0,563.1 1516.4,564.9 C1516.9,566.7 1517.2,568.6 1517.4,570.5 C1517.6,572.4 1517.7,574.4 1517.7,576.3 C1517.6,578.3 1517.5,580.4 1517.2,582.4 C1516.9,584.4 1516.4,586.5 1515.9,588.5 C1515.4,590.6 1514.7,592.6 1513.9,594.7 C1513.1,596.7 1512.2,598.7 1511.2,600.7 C1510.2,602.6 1509.1,604.6 1507.9,606.4 C1506.7,608.3 1505.4,610.1 1504.0,611.9 C1502.6,613.6 1501.1,615.3 1499.5,616.9 C1498.0,618.5 1496.3,620.0 1494.6,621.5 C1492.9,622.9 1491.2,624.2 1489.4,625.4 C1487.6,626.6 1485.7,627.7 1483.8,628.7 C1482.0,629.7 1480.0,630.6 1478.1,631.3 C1476.2,632.0 1474.3,632.7 1472.3,633.2 C1470.4,633.6 1468.5,634.0 1466.6,634.2 C1464.7,634.4 1462.8,634.5 1460.9,634.5 C1459.1,634.4 1457.2,634.3 1455.5,633.9 C1453.7,633.6 1452.0,633.2 1450.3,632.6 C1448.7,632.0 1447.1,631.3 1445.6,630.5 C1444.1,629.7 1442.7,628.7 1441.3,627.7 C1440.0,626.6 1438.8,625.4 1437.6,624.1 C1436.5,622.9 1435.4,621.5 1434.5,620.0 C1433.6,618.5 1432.8,616.9 1432.1,615.3 C1431.4,613.6 1430.8,611.9 1430.4,610.1 C1429.9,608.3 1429.6,606.4 1429.4,604.5 C1429.2,602.6 1429.1,600.6 1429.1,598.7 C1429.2,596.7 1429.3,594.6 1429.6,592.6 C1429.9,590.6 1430.4,588.5 1430.9,586.5 C1431.4,584.4 1432.1,582.4 1432.9,580.3 C1433.7,578.3 1434.6,576.3 1435.6,574.3 C1436.6,572.4 1437.7,570.4 1438.9,568.6 C1440.1,566.7 1441.4,564.9 1442.8,563.1 C1444.2,561.4 1445.7,559.7 1447.3,558.1 C1448.8,556.5 1450.5,555.0 1452.2,553.5 C1453.9,552.1 1455.6,550.8 1457.4,549.6 C1459.2,548.4 1461.1,547.3 1463.0,546.3 C1464.8,545.3 1466.8,544.4 1468.7,543.7 C1470.6,543.0 1472.5,542.3 1474.5,541.8 C1476.4,541.4 1478.3,541.0 1480.2,540.8 C1482.1,540.6 1484.0,540.5 1485.9,540.5 C1487.7,540.6 1489.6,540.7 1491.3,541.1 C1493.1,541.4 1494.8,541.8 1496.5,542.4 C1498.1,543.0 1499.7,543.7 1501.2,544.5 C1502.7,545.3 1504.1,546.3 1505.5,547.3Z" fill="url(#wallL)"/><g clip-path="url(#hBf)"><g clip-path="url(#hBb)"><path d="M1494.5,536.8 C1495.8,537.9 1497.0,539.1 1498.2,540.4 C1499.3,541.6 1500.4,543.0 1501.3,544.5 C1502.2,546.0 1503.0,547.6 1503.7,549.2 C1504.4,550.9 1505.0,552.6 1505.4,554.4 C1505.9,556.2 1506.2,558.1 1506.4,560.0 C1506.6,561.9 1506.7,563.9 1506.7,565.8 C1506.6,567.8 1506.5,569.9 1506.2,571.9 C1505.9,573.9 1505.4,576.0 1504.9,578.0 C1504.4,580.1 1503.7,582.1 1502.9,584.2 C1502.1,586.2 1501.2,588.2 1500.2,590.2 C1499.2,592.1 1498.1,594.1 1496.9,595.9 C1495.7,597.8 1494.4,599.6 1493.0,601.4 C1491.6,603.1 1490.1,604.8 1488.5,606.4 C1487.0,608.0 1485.3,609.5 1483.6,611.0 C1481.9,612.4 1480.2,613.7 1478.4,614.9 C1476.6,616.1 1474.7,617.2 1472.8,618.2 C1471.0,619.2 1469.0,620.1 1467.1,620.8 C1465.2,621.5 1463.3,622.2 1461.3,622.7 C1459.4,623.1 1457.5,623.5 1455.6,623.7 C1453.7,623.9 1451.8,624.0 1449.9,624.0 C1448.1,623.9 1446.2,623.8 1444.5,623.4 C1442.7,623.1 1441.0,622.7 1439.3,622.1 C1437.7,621.5 1436.1,620.8 1434.6,620.0 C1433.1,619.2 1431.7,618.2 1430.3,617.2 C1429.0,616.1 1427.8,614.9 1426.6,613.6 C1425.5,612.4 1424.4,611.0 1423.5,609.5 C1422.6,608.0 1421.8,606.4 1421.1,604.8 C1420.4,603.1 1419.8,601.4 1419.4,599.6 C1418.9,597.8 1418.6,595.9 1418.4,594.0 C1418.2,592.1 1418.1,590.1 1418.1,588.2 C1418.2,586.2 1418.3,584.1 1418.6,582.1 C1418.9,580.1 1419.4,578.0 1419.9,576.0 C1420.4,573.9 1421.1,571.9 1421.9,569.8 C1422.7,567.8 1423.6,565.8 1424.6,563.8 C1425.6,561.9 1426.7,559.9 1427.9,558.1 C1429.1,556.2 1430.4,554.4 1431.8,552.6 C1433.2,550.9 1434.7,549.2 1436.3,547.6 C1437.8,546.0 1439.5,544.5 1441.2,543.0 C1442.9,541.6 1444.6,540.3 1446.4,539.1 C1448.2,537.9 1450.1,536.8 1452.0,535.8 C1453.8,534.8 1455.8,533.9 1457.7,533.2 C1459.6,532.5 1461.5,531.8 1463.5,531.3 C1465.4,530.9 1467.3,530.5 1469.2,530.3 C1471.1,530.1 1473.0,530.0 1474.9,530.0 C1476.7,530.1 1478.6,530.2 1480.3,530.6 C1482.1,530.9 1483.8,531.3 1485.5,531.9 C1487.1,532.5 1488.7,533.2 1490.2,534.0 C1491.7,534.8 1493.1,535.8 1494.5,536.8Z" fill="#fff"/><path d="M1494.5,536.8 C1495.8,537.9 1497.0,539.1 1498.2,540.4 C1499.3,541.6 1500.4,543.0 1501.3,544.5 C1502.2,546.0 1503.0,547.6 1503.7,549.2 C1504.4,550.9 1505.0,552.6 1505.4,554.4 C1505.9,556.2 1506.2,558.1 1506.4,560.0 C1506.6,561.9 1506.7,563.9 1506.7,565.8 C1506.6,567.8 1506.5,569.9 1506.2,571.9 C1505.9,573.9 1505.4,576.0 1504.9,578.0 C1504.4,580.1 1503.7,582.1 1502.9,584.2 C1502.1,586.2 1501.2,588.2 1500.2,590.2 C1499.2,592.1 1498.1,594.1 1496.9,595.9 C1495.7,597.8 1494.4,599.6 1493.0,601.4 C1491.6,603.1 1490.1,604.8 1488.5,606.4 C1487.0,608.0 1485.3,609.5 1483.6,611.0 C1481.9,612.4 1480.2,613.7 1478.4,614.9 C1476.6,616.1 1474.7,617.2 1472.8,618.2 C1471.0,619.2 1469.0,620.1 1467.1,620.8 C1465.2,621.5 1463.3,622.2 1461.3,622.7 C1459.4,623.1 1457.5,623.5 1455.6,623.7 C1453.7,623.9 1451.8,624.0 1449.9,624.0 C1448.1,623.9 1446.2,623.8 1444.5,623.4 C1442.7,623.1 1441.0,622.7 1439.3,622.1 C1437.7,621.5 1436.1,620.8 1434.6,620.0 C1433.1,619.2 1431.7,618.2 1430.3,617.2 C1429.0,616.1 1427.8,614.9 1426.6,613.6 C1425.5,612.4 1424.4,611.0 1423.5,609.5 C1422.6,608.0 1421.8,606.4 1421.1,604.8 C1420.4,603.1 1419.8,601.4 1419.4,599.6 C1418.9,597.8 1418.6,595.9 1418.4,594.0 C1418.2,592.1 1418.1,590.1 1418.1,588.2 C1418.2,586.2 1418.3,584.1 1418.6,582.1 C1418.9,580.1 1419.4,578.0 1419.9,576.0 C1420.4,573.9 1421.1,571.9 1421.9,569.8 C1422.7,567.8 1423.6,565.8 1424.6,563.8 C1425.6,561.9 1426.7,559.9 1427.9,558.1 C1429.1,556.2 1430.4,554.4 1431.8,552.6 C1433.2,550.9 1434.7,549.2 1436.3,547.6 C1437.8,546.0 1439.5,544.5 1441.2,543.0 C1442.9,541.6 1444.6,540.3 1446.4,539.1 C1448.2,537.9 1450.1,536.8 1452.0,535.8 C1453.8,534.8 1455.8,533.9 1457.7,533.2 C1459.6,532.5 1461.5,531.8 1463.5,531.3 C1465.4,530.9 1467.3,530.5 1469.2,530.3 C1471.1,530.1 1473.0,530.0 1474.9,530.0 C1476.7,530.1 1478.6,530.2 1480.3,530.6 C1482.1,530.9 1483.8,531.3 1485.5,531.9 C1487.1,532.5 1488.7,533.2 1490.2,534.0 C1491.7,534.8 1493.1,535.8 1494.5,536.8Z" fill="#367c3b"/><path d="M1430,630 L1444,618 C1455,614 1468,612 1480,611 L1490,640 Z" fill="#fff" stroke="#0f1f0f" stroke-width="1.3" stroke-linejoin="round"/></g><path d="M1494.5,536.8 C1495.8,537.9 1497.0,539.1 1498.2,540.4 C1499.3,541.6 1500.4,543.0 1501.3,544.5 C1502.2,546.0 1503.0,547.6 1503.7,549.2 C1504.4,550.9 1505.0,552.6 1505.4,554.4 C1505.9,556.2 1506.2,558.1 1506.4,560.0 C1506.6,561.9 1506.7,563.9 1506.7,565.8 C1506.6,567.8 1506.5,569.9 1506.2,571.9 C1505.9,573.9 1505.4,576.0 1504.9,578.0 C1504.4,580.1 1503.7,582.1 1502.9,584.2 C1502.1,586.2 1501.2,588.2 1500.2,590.2 C1499.2,592.1 1498.1,594.1 1496.9,595.9 C1495.7,597.8 1494.4,599.6 1493.0,601.4 C1491.6,603.1 1490.1,604.8 1488.5,606.4 C1487.0,608.0 1485.3,609.5 1483.6,611.0 C1481.9,612.4 1480.2,613.7 1478.4,614.9 C1476.6,616.1 1474.7,617.2 1472.8,618.2 C1471.0,619.2 1469.0,620.1 1467.1,620.8 C1465.2,621.5 1463.3,622.2 1461.3,622.7 C1459.4,623.1 1457.5,623.5 1455.6,623.7 C1453.7,623.9 1451.8,624.0 1449.9,624.0 C1448.1,623.9 1446.2,623.8 1444.5,623.4 C1442.7,623.1 1441.0,622.7 1439.3,622.1 C1437.7,621.5 1436.1,620.8 1434.6,620.0 C1433.1,619.2 1431.7,618.2 1430.3,617.2 C1429.0,616.1 1427.8,614.9 1426.6,613.6 C1425.5,612.4 1424.4,611.0 1423.5,609.5 C1422.6,608.0 1421.8,606.4 1421.1,604.8 C1420.4,603.1 1419.8,601.4 1419.4,599.6 C1418.9,597.8 1418.6,595.9 1418.4,594.0 C1418.2,592.1 1418.1,590.1 1418.1,588.2 C1418.2,586.2 1418.3,584.1 1418.6,582.1 C1418.9,580.1 1419.4,578.0 1419.9,576.0 C1420.4,573.9 1421.1,571.9 1421.9,569.8 C1422.7,567.8 1423.6,565.8 1424.6,563.8 C1425.6,561.9 1426.7,559.9 1427.9,558.1 C1429.1,556.2 1430.4,554.4 1431.8,552.6 C1433.2,550.9 1434.7,549.2 1436.3,547.6 C1437.8,546.0 1439.5,544.5 1441.2,543.0 C1442.9,541.6 1444.6,540.3 1446.4,539.1 C1448.2,537.9 1450.1,536.8 1452.0,535.8 C1453.8,534.8 1455.8,533.9 1457.7,533.2 C1459.6,532.5 1461.5,531.8 1463.5,531.3 C1465.4,530.9 1467.3,530.5 1469.2,530.3 C1471.1,530.1 1473.0,530.0 1474.9,530.0 C1476.7,530.1 1478.6,530.2 1480.3,530.6 C1482.1,530.9 1483.8,531.3 1485.5,531.9 C1487.1,532.5 1488.7,533.2 1490.2,534.0 C1491.7,534.8 1493.1,535.8 1494.5,536.8Z" fill="none" stroke="#0f1f0f" stroke-width="1.3" stroke-linejoin="round"/></g><path d="M1505.5,547.3 C1506.8,548.4 1508.0,549.6 1509.2,550.9 C1510.3,552.1 1511.4,553.5 1512.3,555.0 C1513.2,556.5 1514.0,558.1 1514.7,559.7 C1515.4,561.4 1516.0,563.1 1516.4,564.9 C1516.9,566.7 1517.2,568.6 1517.4,570.5 C1517.6,572.4 1517.7,574.4 1517.7,576.3 C1517.6,578.3 1517.5,580.4 1517.2,582.4 C1516.9,584.4 1516.4,586.5 1515.9,588.5 C1515.4,590.6 1514.7,592.6 1513.9,594.7 C1513.1,596.7 1512.2,598.7 1511.2,600.7 C1510.2,602.6 1509.1,604.6 1507.9,606.4 C1506.7,608.3 1505.4,610.1 1504.0,611.9 C1502.6,613.6 1501.1,615.3 1499.5,616.9 C1498.0,618.5 1496.3,620.0 1494.6,621.5 C1492.9,622.9 1491.2,624.2 1489.4,625.4 C1487.6,626.6 1485.7,627.7 1483.8,628.7 C1482.0,629.7 1480.0,630.6 1478.1,631.3 C1476.2,632.0 1474.3,632.7 1472.3,633.2 C1470.4,633.6 1468.5,634.0 1466.6,634.2 C1464.7,634.4 1462.8,634.5 1460.9,634.5 C1459.1,634.4 1457.2,634.3 1455.5,633.9 C1453.7,633.6 1452.0,633.2 1450.3,632.6 C1448.7,632.0 1447.1,631.3 1445.6,630.5 C1444.1,629.7 1442.7,628.7 1441.3,627.7 C1440.0,626.6 1438.8,625.4 1437.6,624.1 C1436.5,622.9 1435.4,621.5 1434.5,620.0 C1433.6,618.5 1432.8,616.9 1432.1,615.3 C1431.4,613.6 1430.8,611.9 1430.4,610.1 C1429.9,608.3 1429.6,606.4 1429.4,604.5 C1429.2,602.6 1429.1,600.6 1429.1,598.7 C1429.2,596.7 1429.3,594.6 1429.6,592.6 C1429.9,590.6 1430.4,588.5 1430.9,586.5 C1431.4,584.4 1432.1,582.4 1432.9,580.3 C1433.7,578.3 1434.6,576.3 1435.6,574.3 C1436.6,572.4 1437.7,570.4 1438.9,568.6 C1440.1,566.7 1441.4,564.9 1442.8,563.1 C1444.2,561.4 1445.7,559.7 1447.3,558.1 C1448.8,556.5 1450.5,555.0 1452.2,553.5 C1453.9,552.1 1455.6,550.8 1457.4,549.6 C1459.2,548.4 1461.1,547.3 1463.0,546.3 C1464.8,545.3 1466.8,544.4 1468.7,543.7 C1470.6,543.0 1472.5,542.3 1474.5,541.8 C1476.4,541.4 1478.3,541.0 1480.2,540.8 C1482.1,540.6 1484.0,540.5 1485.9,540.5 C1487.7,540.6 1489.6,540.7 1491.3,541.1 C1493.1,541.4 1494.8,541.8 1496.5,542.4 C1498.1,543.0 1499.7,543.7 1501.2,544.5 C1502.7,545.3 1504.1,546.3 1505.5,547.3Z" fill="none" stroke="#0f1f0f" stroke-width="1.3" stroke-linejoin="round"/><clipPath id="hRf"><path d="M1897.9,444.6 C1899.2,445.7 1900.4,446.9 1901.6,448.2 C1902.7,449.4 1903.8,450.8 1904.7,452.3 C1905.6,453.8 1906.4,455.4 1907.1,457.0 C1907.8,458.7 1908.4,460.4 1908.8,462.2 C1909.3,464.0 1909.6,465.9 1909.8,467.8 C1910.0,469.7 1910.1,471.7 1910.1,473.6 C1910.0,475.6 1909.9,477.7 1909.6,479.7 C1909.3,481.7 1908.8,483.8 1908.3,485.8 C1907.8,487.9 1907.1,489.9 1906.3,492.0 C1905.5,494.0 1904.6,496.0 1903.6,498.0 C1902.6,499.9 1901.5,501.9 1900.3,503.7 C1899.1,505.6 1897.8,507.4 1896.4,509.2 C1895.0,510.9 1893.5,512.6 1891.9,514.2 C1890.4,515.8 1888.7,517.3 1887.0,518.8 C1885.3,520.2 1883.6,521.5 1881.8,522.7 C1880.0,523.9 1878.1,525.0 1876.2,526.0 C1874.4,527.0 1872.4,527.9 1870.5,528.6 C1868.6,529.3 1866.7,530.0 1864.7,530.5 C1862.8,530.9 1860.9,531.3 1859.0,531.5 C1857.1,531.7 1855.2,531.8 1853.3,531.8 C1851.5,531.7 1849.6,531.6 1847.9,531.2 C1846.1,530.9 1844.4,530.5 1842.7,529.9 C1841.1,529.3 1839.5,528.6 1838.0,527.8 C1836.5,527.0 1835.1,526.0 1833.7,525.0 C1832.4,523.9 1831.2,522.7 1830.0,521.4 C1828.9,520.2 1827.8,518.8 1826.9,517.3 C1826.0,515.8 1825.2,514.2 1824.5,512.6 C1823.8,510.9 1823.2,509.2 1822.8,507.4 C1822.3,505.6 1822.0,503.7 1821.8,501.8 C1821.6,499.9 1821.5,497.9 1821.5,496.0 C1821.6,494.0 1821.7,491.9 1822.0,489.9 C1822.3,487.9 1822.8,485.8 1823.3,483.8 C1823.8,481.7 1824.5,479.7 1825.3,477.6 C1826.1,475.6 1827.0,473.6 1828.0,471.6 C1829.0,469.7 1830.1,467.7 1831.3,465.9 C1832.5,464.0 1833.8,462.2 1835.2,460.4 C1836.6,458.7 1838.1,457.0 1839.7,455.4 C1841.2,453.8 1842.9,452.3 1844.6,450.8 C1846.3,449.4 1848.0,448.1 1849.8,446.9 C1851.6,445.7 1853.5,444.6 1855.4,443.6 C1857.2,442.6 1859.2,441.7 1861.1,441.0 C1863.0,440.3 1864.9,439.6 1866.9,439.1 C1868.8,438.7 1870.7,438.3 1872.6,438.1 C1874.5,437.9 1876.4,437.8 1878.3,437.8 C1880.1,437.9 1882.0,438.0 1883.7,438.4 C1885.5,438.7 1887.2,439.1 1888.9,439.7 C1890.5,440.3 1892.1,441.0 1893.6,441.8 C1895.1,442.6 1896.5,443.6 1897.9,444.6Z"/></clipPath><clipPath id="hRb"><path d="M1886.9,434.1 C1888.2,435.2 1889.4,436.4 1890.6,437.7 C1891.7,438.9 1892.8,440.3 1893.7,441.8 C1894.6,443.3 1895.4,444.9 1896.1,446.5 C1896.8,448.2 1897.4,449.9 1897.8,451.7 C1898.3,453.5 1898.6,455.4 1898.8,457.3 C1899.0,459.2 1899.1,461.2 1899.1,463.1 C1899.0,465.1 1898.9,467.2 1898.6,469.2 C1898.3,471.2 1897.8,473.3 1897.3,475.3 C1896.8,477.4 1896.1,479.4 1895.3,481.5 C1894.5,483.5 1893.6,485.5 1892.6,487.5 C1891.6,489.4 1890.5,491.4 1889.3,493.2 C1888.1,495.1 1886.8,496.9 1885.4,498.7 C1884.0,500.4 1882.5,502.1 1880.9,503.7 C1879.4,505.3 1877.7,506.8 1876.0,508.3 C1874.3,509.7 1872.6,511.0 1870.8,512.2 C1869.0,513.4 1867.1,514.5 1865.2,515.5 C1863.4,516.5 1861.4,517.4 1859.5,518.1 C1857.6,518.8 1855.7,519.5 1853.7,520.0 C1851.8,520.4 1849.9,520.8 1848.0,521.0 C1846.1,521.2 1844.2,521.3 1842.3,521.3 C1840.5,521.2 1838.6,521.1 1836.9,520.7 C1835.1,520.4 1833.4,520.0 1831.7,519.4 C1830.1,518.8 1828.5,518.1 1827.0,517.3 C1825.5,516.5 1824.1,515.5 1822.7,514.5 C1821.4,513.4 1820.2,512.2 1819.0,510.9 C1817.9,509.7 1816.8,508.3 1815.9,506.8 C1815.0,505.3 1814.2,503.7 1813.5,502.1 C1812.8,500.4 1812.2,498.7 1811.8,496.9 C1811.3,495.1 1811.0,493.2 1810.8,491.3 C1810.6,489.4 1810.5,487.4 1810.5,485.5 C1810.6,483.5 1810.7,481.4 1811.0,479.4 C1811.3,477.4 1811.8,475.3 1812.3,473.3 C1812.8,471.2 1813.5,469.2 1814.3,467.1 C1815.1,465.1 1816.0,463.1 1817.0,461.1 C1818.0,459.2 1819.1,457.2 1820.3,455.4 C1821.5,453.5 1822.8,451.7 1824.2,449.9 C1825.6,448.2 1827.1,446.5 1828.7,444.9 C1830.2,443.3 1831.9,441.8 1833.6,440.3 C1835.3,438.9 1837.0,437.6 1838.8,436.4 C1840.6,435.2 1842.5,434.1 1844.4,433.1 C1846.2,432.1 1848.2,431.2 1850.1,430.5 C1852.0,429.8 1853.9,429.1 1855.9,428.6 C1857.8,428.2 1859.7,427.8 1861.6,427.6 C1863.5,427.4 1865.4,427.3 1867.3,427.3 C1869.1,427.4 1871.0,427.5 1872.7,427.9 C1874.5,428.2 1876.2,428.6 1877.9,429.2 C1879.5,429.8 1881.1,430.5 1882.6,431.3 C1884.1,432.1 1885.5,433.1 1886.9,434.1Z"/></clipPath><path d="M1897.9,444.6 C1899.2,445.7 1900.4,446.9 1901.6,448.2 C1902.7,449.4 1903.8,450.8 1904.7,452.3 C1905.6,453.8 1906.4,455.4 1907.1,457.0 C1907.8,458.7 1908.4,460.4 1908.8,462.2 C1909.3,464.0 1909.6,465.9 1909.8,467.8 C1910.0,469.7 1910.1,471.7 1910.1,473.6 C1910.0,475.6 1909.9,477.7 1909.6,479.7 C1909.3,481.7 1908.8,483.8 1908.3,485.8 C1907.8,487.9 1907.1,489.9 1906.3,492.0 C1905.5,494.0 1904.6,496.0 1903.6,498.0 C1902.6,499.9 1901.5,501.9 1900.3,503.7 C1899.1,505.6 1897.8,507.4 1896.4,509.2 C1895.0,510.9 1893.5,512.6 1891.9,514.2 C1890.4,515.8 1888.7,517.3 1887.0,518.8 C1885.3,520.2 1883.6,521.5 1881.8,522.7 C1880.0,523.9 1878.1,525.0 1876.2,526.0 C1874.4,527.0 1872.4,527.9 1870.5,528.6 C1868.6,529.3 1866.7,530.0 1864.7,530.5 C1862.8,530.9 1860.9,531.3 1859.0,531.5 C1857.1,531.7 1855.2,531.8 1853.3,531.8 C1851.5,531.7 1849.6,531.6 1847.9,531.2 C1846.1,530.9 1844.4,530.5 1842.7,529.9 C1841.1,529.3 1839.5,528.6 1838.0,527.8 C1836.5,527.0 1835.1,526.0 1833.7,525.0 C1832.4,523.9 1831.2,522.7 1830.0,521.4 C1828.9,520.2 1827.8,518.8 1826.9,517.3 C1826.0,515.8 1825.2,514.2 1824.5,512.6 C1823.8,510.9 1823.2,509.2 1822.8,507.4 C1822.3,505.6 1822.0,503.7 1821.8,501.8 C1821.6,499.9 1821.5,497.9 1821.5,496.0 C1821.6,494.0 1821.7,491.9 1822.0,489.9 C1822.3,487.9 1822.8,485.8 1823.3,483.8 C1823.8,481.7 1824.5,479.7 1825.3,477.6 C1826.1,475.6 1827.0,473.6 1828.0,471.6 C1829.0,469.7 1830.1,467.7 1831.3,465.9 C1832.5,464.0 1833.8,462.2 1835.2,460.4 C1836.6,458.7 1838.1,457.0 1839.7,455.4 C1841.2,453.8 1842.9,452.3 1844.6,450.8 C1846.3,449.4 1848.0,448.1 1849.8,446.9 C1851.6,445.7 1853.5,444.6 1855.4,443.6 C1857.2,442.6 1859.2,441.7 1861.1,441.0 C1863.0,440.3 1864.9,439.6 1866.9,439.1 C1868.8,438.7 1870.7,438.3 1872.6,438.1 C1874.5,437.9 1876.4,437.8 1878.3,437.8 C1880.1,437.9 1882.0,438.0 1883.7,438.4 C1885.5,438.7 1887.2,439.1 1888.9,439.7 C1890.5,440.3 1892.1,441.0 1893.6,441.8 C1895.1,442.6 1896.5,443.6 1897.9,444.6Z" fill="url(#wallL)"/><g clip-path="url(#hRf)"><g clip-path="url(#hRb)"><path d="M1886.9,434.1 C1888.2,435.2 1889.4,436.4 1890.6,437.7 C1891.7,438.9 1892.8,440.3 1893.7,441.8 C1894.6,443.3 1895.4,444.9 1896.1,446.5 C1896.8,448.2 1897.4,449.9 1897.8,451.7 C1898.3,453.5 1898.6,455.4 1898.8,457.3 C1899.0,459.2 1899.1,461.2 1899.1,463.1 C1899.0,465.1 1898.9,467.2 1898.6,469.2 C1898.3,471.2 1897.8,473.3 1897.3,475.3 C1896.8,477.4 1896.1,479.4 1895.3,481.5 C1894.5,483.5 1893.6,485.5 1892.6,487.5 C1891.6,489.4 1890.5,491.4 1889.3,493.2 C1888.1,495.1 1886.8,496.9 1885.4,498.7 C1884.0,500.4 1882.5,502.1 1880.9,503.7 C1879.4,505.3 1877.7,506.8 1876.0,508.3 C1874.3,509.7 1872.6,511.0 1870.8,512.2 C1869.0,513.4 1867.1,514.5 1865.2,515.5 C1863.4,516.5 1861.4,517.4 1859.5,518.1 C1857.6,518.8 1855.7,519.5 1853.7,520.0 C1851.8,520.4 1849.9,520.8 1848.0,521.0 C1846.1,521.2 1844.2,521.3 1842.3,521.3 C1840.5,521.2 1838.6,521.1 1836.9,520.7 C1835.1,520.4 1833.4,520.0 1831.7,519.4 C1830.1,518.8 1828.5,518.1 1827.0,517.3 C1825.5,516.5 1824.1,515.5 1822.7,514.5 C1821.4,513.4 1820.2,512.2 1819.0,510.9 C1817.9,509.7 1816.8,508.3 1815.9,506.8 C1815.0,505.3 1814.2,503.7 1813.5,502.1 C1812.8,500.4 1812.2,498.7 1811.8,496.9 C1811.3,495.1 1811.0,493.2 1810.8,491.3 C1810.6,489.4 1810.5,487.4 1810.5,485.5 C1810.6,483.5 1810.7,481.4 1811.0,479.4 C1811.3,477.4 1811.8,475.3 1812.3,473.3 C1812.8,471.2 1813.5,469.2 1814.3,467.1 C1815.1,465.1 1816.0,463.1 1817.0,461.1 C1818.0,459.2 1819.1,457.2 1820.3,455.4 C1821.5,453.5 1822.8,451.7 1824.2,449.9 C1825.6,448.2 1827.1,446.5 1828.7,444.9 C1830.2,443.3 1831.9,441.8 1833.6,440.3 C1835.3,438.9 1837.0,437.6 1838.8,436.4 C1840.6,435.2 1842.5,434.1 1844.4,433.1 C1846.2,432.1 1848.2,431.2 1850.1,430.5 C1852.0,429.8 1853.9,429.1 1855.9,428.6 C1857.8,428.2 1859.7,427.8 1861.6,427.6 C1863.5,427.4 1865.4,427.3 1867.3,427.3 C1869.1,427.4 1871.0,427.5 1872.7,427.9 C1874.5,428.2 1876.2,428.6 1877.9,429.2 C1879.5,429.8 1881.1,430.5 1882.6,431.3 C1884.1,432.1 1885.5,433.1 1886.9,434.1Z" fill="#fff"/><path d="M1886.9,434.1 C1888.2,435.2 1889.4,436.4 1890.6,437.7 C1891.7,438.9 1892.8,440.3 1893.7,441.8 C1894.6,443.3 1895.4,444.9 1896.1,446.5 C1896.8,448.2 1897.4,449.9 1897.8,451.7 C1898.3,453.5 1898.6,455.4 1898.8,457.3 C1899.0,459.2 1899.1,461.2 1899.1,463.1 C1899.0,465.1 1898.9,467.2 1898.6,469.2 C1898.3,471.2 1897.8,473.3 1897.3,475.3 C1896.8,477.4 1896.1,479.4 1895.3,481.5 C1894.5,483.5 1893.6,485.5 1892.6,487.5 C1891.6,489.4 1890.5,491.4 1889.3,493.2 C1888.1,495.1 1886.8,496.9 1885.4,498.7 C1884.0,500.4 1882.5,502.1 1880.9,503.7 C1879.4,505.3 1877.7,506.8 1876.0,508.3 C1874.3,509.7 1872.6,511.0 1870.8,512.2 C1869.0,513.4 1867.1,514.5 1865.2,515.5 C1863.4,516.5 1861.4,517.4 1859.5,518.1 C1857.6,518.8 1855.7,519.5 1853.7,520.0 C1851.8,520.4 1849.9,520.8 1848.0,521.0 C1846.1,521.2 1844.2,521.3 1842.3,521.3 C1840.5,521.2 1838.6,521.1 1836.9,520.7 C1835.1,520.4 1833.4,520.0 1831.7,519.4 C1830.1,518.8 1828.5,518.1 1827.0,517.3 C1825.5,516.5 1824.1,515.5 1822.7,514.5 C1821.4,513.4 1820.2,512.2 1819.0,510.9 C1817.9,509.7 1816.8,508.3 1815.9,506.8 C1815.0,505.3 1814.2,503.7 1813.5,502.1 C1812.8,500.4 1812.2,498.7 1811.8,496.9 C1811.3,495.1 1811.0,493.2 1810.8,491.3 C1810.6,489.4 1810.5,487.4 1810.5,485.5 C1810.6,483.5 1810.7,481.4 1811.0,479.4 C1811.3,477.4 1811.8,475.3 1812.3,473.3 C1812.8,471.2 1813.5,469.2 1814.3,467.1 C1815.1,465.1 1816.0,463.1 1817.0,461.1 C1818.0,459.2 1819.1,457.2 1820.3,455.4 C1821.5,453.5 1822.8,451.7 1824.2,449.9 C1825.6,448.2 1827.1,446.5 1828.7,444.9 C1830.2,443.3 1831.9,441.8 1833.6,440.3 C1835.3,438.9 1837.0,437.6 1838.8,436.4 C1840.6,435.2 1842.5,434.1 1844.4,433.1 C1846.2,432.1 1848.2,431.2 1850.1,430.5 C1852.0,429.8 1853.9,429.1 1855.9,428.6 C1857.8,428.2 1859.7,427.8 1861.6,427.6 C1863.5,427.4 1865.4,427.3 1867.3,427.3 C1869.1,427.4 1871.0,427.5 1872.7,427.9 C1874.5,428.2 1876.2,428.6 1877.9,429.2 C1879.5,429.8 1881.1,430.5 1882.6,431.3 C1884.1,432.1 1885.5,433.1 1886.9,434.1Z" fill="#377d3c"/><path d="M1810,507.5 L1822.9,500.7 L1896,459 L1920,445 L1920,560 L1800,560Z" fill="#fff"/><path d="M1822.9,500.7 L1896,459" stroke="#0f1f0f" stroke-width="1.3" stroke-linejoin="round"/><ellipse cx="1887.5" cy="447.1" rx="9.40" ry="7.15" transform="rotate(-51.4 1887.5 447.1)" fill="url(#sh)" stroke="#0f1f0f" stroke-width="1.3" stroke-linejoin="round"/></g><path d="M1886.9,434.1 C1888.2,435.2 1889.4,436.4 1890.6,437.7 C1891.7,438.9 1892.8,440.3 1893.7,441.8 C1894.6,443.3 1895.4,444.9 1896.1,446.5 C1896.8,448.2 1897.4,449.9 1897.8,451.7 C1898.3,453.5 1898.6,455.4 1898.8,457.3 C1899.0,459.2 1899.1,461.2 1899.1,463.1 C1899.0,465.1 1898.9,467.2 1898.6,469.2 C1898.3,471.2 1897.8,473.3 1897.3,475.3 C1896.8,477.4 1896.1,479.4 1895.3,481.5 C1894.5,483.5 1893.6,485.5 1892.6,487.5 C1891.6,489.4 1890.5,491.4 1889.3,493.2 C1888.1,495.1 1886.8,496.9 1885.4,498.7 C1884.0,500.4 1882.5,502.1 1880.9,503.7 C1879.4,505.3 1877.7,506.8 1876.0,508.3 C1874.3,509.7 1872.6,511.0 1870.8,512.2 C1869.0,513.4 1867.1,514.5 1865.2,515.5 C1863.4,516.5 1861.4,517.4 1859.5,518.1 C1857.6,518.8 1855.7,519.5 1853.7,520.0 C1851.8,520.4 1849.9,520.8 1848.0,521.0 C1846.1,521.2 1844.2,521.3 1842.3,521.3 C1840.5,521.2 1838.6,521.1 1836.9,520.7 C1835.1,520.4 1833.4,520.0 1831.7,519.4 C1830.1,518.8 1828.5,518.1 1827.0,517.3 C1825.5,516.5 1824.1,515.5 1822.7,514.5 C1821.4,513.4 1820.2,512.2 1819.0,510.9 C1817.9,509.7 1816.8,508.3 1815.9,506.8 C1815.0,505.3 1814.2,503.7 1813.5,502.1 C1812.8,500.4 1812.2,498.7 1811.8,496.9 C1811.3,495.1 1811.0,493.2 1810.8,491.3 C1810.6,489.4 1810.5,487.4 1810.5,485.5 C1810.6,483.5 1810.7,481.4 1811.0,479.4 C1811.3,477.4 1811.8,475.3 1812.3,473.3 C1812.8,471.2 1813.5,469.2 1814.3,467.1 C1815.1,465.1 1816.0,463.1 1817.0,461.1 C1818.0,459.2 1819.1,457.2 1820.3,455.4 C1821.5,453.5 1822.8,451.7 1824.2,449.9 C1825.6,448.2 1827.1,446.5 1828.7,444.9 C1830.2,443.3 1831.9,441.8 1833.6,440.3 C1835.3,438.9 1837.0,437.6 1838.8,436.4 C1840.6,435.2 1842.5,434.1 1844.4,433.1 C1846.2,432.1 1848.2,431.2 1850.1,430.5 C1852.0,429.8 1853.9,429.1 1855.9,428.6 C1857.8,428.2 1859.7,427.8 1861.6,427.6 C1863.5,427.4 1865.4,427.3 1867.3,427.3 C1869.1,427.4 1871.0,427.5 1872.7,427.9 C1874.5,428.2 1876.2,428.6 1877.9,429.2 C1879.5,429.8 1881.1,430.5 1882.6,431.3 C1884.1,432.1 1885.5,433.1 1886.9,434.1Z" fill="none" stroke="#0f1f0f" stroke-width="1.3" stroke-linejoin="round"/></g><path d="M1897.9,444.6 C1899.2,445.7 1900.4,446.9 1901.6,448.2 C1902.7,449.4 1903.8,450.8 1904.7,452.3 C1905.6,453.8 1906.4,455.4 1907.1,457.0 C1907.8,458.7 1908.4,460.4 1908.8,462.2 C1909.3,464.0 1909.6,465.9 1909.8,467.8 C1910.0,469.7 1910.1,471.7 1910.1,473.6 C1910.0,475.6 1909.9,477.7 1909.6,479.7 C1909.3,481.7 1908.8,483.8 1908.3,485.8 C1907.8,487.9 1907.1,489.9 1906.3,492.0 C1905.5,494.0 1904.6,496.0 1903.6,498.0 C1902.6,499.9 1901.5,501.9 1900.3,503.7 C1899.1,505.6 1897.8,507.4 1896.4,509.2 C1895.0,510.9 1893.5,512.6 1891.9,514.2 C1890.4,515.8 1888.7,517.3 1887.0,518.8 C1885.3,520.2 1883.6,521.5 1881.8,522.7 C1880.0,523.9 1878.1,525.0 1876.2,526.0 C1874.4,527.0 1872.4,527.9 1870.5,528.6 C1868.6,529.3 1866.7,530.0 1864.7,530.5 C1862.8,530.9 1860.9,531.3 1859.0,531.5 C1857.1,531.7 1855.2,531.8 1853.3,531.8 C1851.5,531.7 1849.6,531.6 1847.9,531.2 C1846.1,530.9 1844.4,530.5 1842.7,529.9 C1841.1,529.3 1839.5,528.6 1838.0,527.8 C1836.5,527.0 1835.1,526.0 1833.7,525.0 C1832.4,523.9 1831.2,522.7 1830.0,521.4 C1828.9,520.2 1827.8,518.8 1826.9,517.3 C1826.0,515.8 1825.2,514.2 1824.5,512.6 C1823.8,510.9 1823.2,509.2 1822.8,507.4 C1822.3,505.6 1822.0,503.7 1821.8,501.8 C1821.6,499.9 1821.5,497.9 1821.5,496.0 C1821.6,494.0 1821.7,491.9 1822.0,489.9 C1822.3,487.9 1822.8,485.8 1823.3,483.8 C1823.8,481.7 1824.5,479.7 1825.3,477.6 C1826.1,475.6 1827.0,473.6 1828.0,471.6 C1829.0,469.7 1830.1,467.7 1831.3,465.9 C1832.5,464.0 1833.8,462.2 1835.2,460.4 C1836.6,458.7 1838.1,457.0 1839.7,455.4 C1841.2,453.8 1842.9,452.3 1844.6,450.8 C1846.3,449.4 1848.0,448.1 1849.8,446.9 C1851.6,445.7 1853.5,444.6 1855.4,443.6 C1857.2,442.6 1859.2,441.7 1861.1,441.0 C1863.0,440.3 1864.9,439.6 1866.9,439.1 C1868.8,438.7 1870.7,438.3 1872.6,438.1 C1874.5,437.9 1876.4,437.8 1878.3,437.8 C1880.1,437.9 1882.0,438.0 1883.7,438.4 C1885.5,438.7 1887.2,439.1 1888.9,439.7 C1890.5,440.3 1892.1,441.0 1893.6,441.8 C1895.1,442.6 1896.5,443.6 1897.9,444.6Z" fill="none" stroke="#0f1f0f" stroke-width="1.3" stroke-linejoin="round"/><ellipse cx="1294.4" cy="519.7" rx="9.40" ry="7.15" transform="rotate(-51.4 1294.4 519.7)" fill="url(#sh)" stroke="#0f1f0f" stroke-width="1.3" stroke-linejoin="round"/><ellipse cx="1672.0" cy="459.8" rx="9.40" ry="7.15" transform="rotate(-51.4 1672.0 459.8)" fill="url(#sh)" stroke="#0f1f0f" stroke-width="1.3" stroke-linejoin="round"/><ellipse cx="1114.6" cy="715.9" rx="9.40" ry="7.15" transform="rotate(-51.4 1114.6 715.9)" fill="url(#sh)" stroke="#0f1f0f" stroke-width="1.3" stroke-linejoin="round"/><ellipse cx="1434.6" cy="678.4" rx="9.40" ry="7.15" transform="rotate(-51.4 1434.6 678.4)" fill="url(#sh)" stroke="#0f1f0f" stroke-width="1.3" stroke-linejoin="round"/><ellipse cx="1948.7" cy="493.0" rx="9.40" ry="7.15" transform="rotate(-51.4 1948.7 493.0)" fill="url(#sh)" stroke="#0f1f0f" stroke-width="1.3" stroke-linejoin="round"/><linearGradient id="spg" gradientUnits="userSpaceOnUse" x1="1097.6" y1="481.2" x2="1075.3" y2="510.1"><stop offset="0" stop-color="#e5a820"/><stop offset="0.3" stop-color="#d49414"/><stop offset="0.62" stop-color="#a96f0e"/><stop offset="1" stop-color="#c2840f"/></linearGradient><linearGradient id="stubg" gradientUnits="userSpaceOnUse" x1="1140" y1="520" x2="1122" y2="540"><stop offset="0" stop-color="#46a04b"/><stop offset="0.5" stop-color="#2f7233"/><stop offset="1" stop-color="#1f4f22"/></linearGradient><path d="M1074.4,507.4 L1073.4,506.5 L1072.5,505.4 L1071.8,504.3 L1071.2,503.0 L1070.8,501.6 L1070.5,500.1 L1070.4,498.6 L1070.4,497.0 L1070.7,495.4 L1071.0,493.8 L1071.5,492.2 L1072.2,490.6 L1073.0,489.0 L1073.9,487.5 L1075.0,486.1 L1076.1,484.8 L1077.4,483.5 L1078.7,482.4 L1080.2,481.4 L1081.6,480.6 L1083.1,479.9 L1084.7,479.3 L1086.2,479.0 L1087.7,478.8 L1089.2,478.7 L1090.6,478.8 L1092.0,479.1 L1093.3,479.6 L1094.5,480.2 L1095.6,481.0 L1144.6,520.5 L1145.6,521.4 L1146.5,522.5 L1147.2,523.6 L1147.8,524.9 L1148.2,526.3 L1148.5,527.8 L1148.6,529.3 L1148.6,530.9 L1148.3,532.5 L1148.0,534.1 L1147.5,535.7 L1146.8,537.3 L1146.0,538.9 L1145.1,540.4 L1144.0,541.8 L1142.9,543.1 L1141.6,544.4 L1140.3,545.5 L1138.8,546.5 L1137.4,547.3 L1135.9,548.0 L1134.3,548.6 L1132.8,548.9 L1131.3,549.1 L1129.8,549.2 L1128.4,549.1 L1127.0,548.8 L1125.7,548.3 L1124.5,547.7 L1123.4,546.9Z" fill="url(#spg)"/><path d="M1110.4,534.9 L1109.5,534.1 L1108.7,533.1 L1108.0,532.0 L1107.5,530.8 L1107.1,529.5 L1106.8,528.1 L1106.7,526.7 L1106.7,525.3 L1106.9,523.8 L1107.3,522.3 L1107.7,520.8 L1108.4,519.3 L1109.1,517.8 L1110.0,516.4 L1111.0,515.1 L1112.0,513.9 L1113.2,512.7 L1114.5,511.7 L1115.8,510.8 L1117.1,510.0 L1118.5,509.3 L1120.0,508.8 L1121.4,508.5 L1122.8,508.3 L1124.2,508.2 L1125.5,508.4 L1126.8,508.6 L1128.0,509.1 L1129.1,509.6 L1130.1,510.4 L1146.9,523.8 L1147.8,524.7 L1148.6,525.7 L1149.3,526.7 L1149.8,527.9 L1150.2,529.2 L1150.5,530.6 L1150.6,532.0 L1150.5,533.5 L1150.3,535.0 L1150.0,536.5 L1149.5,538.0 L1148.9,539.5 L1148.2,540.9 L1147.3,542.3 L1146.3,543.6 L1145.2,544.9 L1144.1,546.0 L1142.8,547.1 L1141.5,548.0 L1140.1,548.8 L1138.7,549.4 L1137.3,549.9 L1135.9,550.3 L1134.5,550.5 L1133.1,550.5 L1131.8,550.4 L1130.5,550.1 L1129.3,549.7 L1128.2,549.1 L1127.1,548.4Z" fill="url(#stubg)" stroke="#0f1f0f" stroke-width="1.1"/><clipPath id="stubc"><path d="M1110.4,534.9 L1109.5,534.1 L1108.7,533.1 L1108.0,532.0 L1107.5,530.8 L1107.1,529.5 L1106.8,528.1 L1106.7,526.7 L1106.7,525.3 L1106.9,523.8 L1107.3,522.3 L1107.7,520.8 L1108.4,519.3 L1109.1,517.8 L1110.0,516.4 L1111.0,515.1 L1112.0,513.9 L1113.2,512.7 L1114.5,511.7 L1115.8,510.8 L1117.1,510.0 L1118.5,509.3 L1120.0,508.8 L1121.4,508.5 L1122.8,508.3 L1124.2,508.2 L1125.5,508.4 L1126.8,508.6 L1128.0,509.1 L1129.1,509.6 L1130.1,510.4 L1146.9,523.8 L1147.8,524.7 L1148.6,525.7 L1149.3,526.7 L1149.8,527.9 L1150.2,529.2 L1150.5,530.6 L1150.6,532.0 L1150.5,533.5 L1150.3,535.0 L1150.0,536.5 L1149.5,538.0 L1148.9,539.5 L1148.2,540.9 L1147.3,542.3 L1146.3,543.6 L1145.2,544.9 L1144.1,546.0 L1142.8,547.1 L1141.5,548.0 L1140.1,548.8 L1138.7,549.4 L1137.3,549.9 L1135.9,550.3 L1134.5,550.5 L1133.1,550.5 L1131.8,550.4 L1130.5,550.1 L1129.3,549.7 L1128.2,549.1 L1127.1,548.4Z"/></clipPath><ellipse cx="1146.0" cy="540.7" rx="8.82" ry="6.71" transform="rotate(-51.4 1146.0 540.7)" fill="url(#sh)" stroke="#0f1f0f" stroke-width="1.3" stroke-linejoin="round"/><path d="M1074.4,507.4 L1073.4,506.5 L1072.5,505.4 L1071.8,504.3 L1071.2,503.0 L1070.8,501.6 L1070.5,500.1 L1070.4,498.6 L1070.4,497.0 L1070.7,495.4 L1071.0,493.8 L1071.5,492.2 L1072.2,490.6 L1073.0,489.0 L1073.9,487.5 L1075.0,486.1 L1076.1,484.8 L1077.4,483.5 L1078.7,482.4 L1080.2,481.4 L1081.6,480.6 L1083.1,479.9 L1084.7,479.3 L1086.2,479.0 L1087.7,478.8 L1089.2,478.7 L1090.6,478.8 L1092.0,479.1 L1093.3,479.6 L1094.5,480.2 L1095.6,481.0 L1144.6,520.5 L1145.6,521.4 L1146.5,522.5 L1147.2,523.6 L1147.8,524.9 L1148.2,526.3 L1148.5,527.8 L1148.6,529.3 L1148.6,530.9 L1148.3,532.5 L1148.0,534.1 L1147.5,535.7 L1146.8,537.3 L1146.0,538.9 L1145.1,540.4 L1144.0,541.8 L1142.9,543.1 L1141.6,544.4 L1140.3,545.5 L1138.8,546.5 L1137.4,547.3 L1135.9,548.0 L1134.3,548.6 L1132.8,548.9 L1131.3,549.1 L1129.8,549.2 L1128.4,549.1 L1127.0,548.8 L1125.7,548.3 L1124.5,547.7 L1123.4,546.9Z" fill="none" stroke="#f8a60a" stroke-width="2.8" stroke-linejoin="round"/></svg>
<svg style="left:0;top:0" width="2398" height="1294" viewBox="0 0 2398 1294"><path d="M1245.5,797.5 L1401.2,757.2 L1497,833.4 L1491.7,995.1 L1335.3,1035.8 L1239.5,959.2Z" fill="#bbbbbb"/><path d="M1245.5,797.5 L1341.3,873.7 L1335.3,1035.8 L1239.5,959.2Z" fill="#b1b1b1"/><path d="M1341.3,873.7 L1497,833.4 L1491.7,995.1 L1335.3,1035.8Z" fill="#b5b5b5"/><path d="M1245.5,797.5 L1401.2,757.2 L1497,833.4 L1341.3,873.7Z" fill="#bdbdbd"/><path d="M1245.5,797.5 L1401.2,757.2 M1401.2,757.2 L1497,833.4 M1497,833.4 L1341.3,873.7 M1341.3,873.7 L1245.5,797.5 M1239.5,959.2 L1335.3,1035.8 M1335.3,1035.8 L1491.7,995.1 M1491.7,995.1 L1396.4,919.6 M1396.4,919.6 L1239.5,959.2 M1245.5,797.5 L1239.5,959.2 M1401.2,757.2 L1396.4,919.6 M1497,833.4 L1491.7,995.1 M1341.3,873.7 L1335.3,1035.8" stroke="#262626" stroke-width="1.3" fill="none" stroke-linejoin="round"/><circle cx="1368.9" cy="896.9" r="5.3" fill="#f2f2f2" stroke="#111" stroke-width="1.6"/><circle cx="1368.9" cy="896.9" r="1.9" fill="#111"/></svg>
<svg style="left:0;top:0" width="2398" height="1294" viewBox="0 0 2398 1294"><path d="M2280.2,126.8 L2286,115.2 L2291.8,126.8Z" fill="#dde4ec"/><path d="M2280.2,291 L2286,302.3 L2291.8,291Z" fill="#dde4ec"/><path d="M2204.5,202 L2192.5,208.8 L2204.5,217.5Z" fill="#dde4ec"/><path d="M2367.5,200 L2380.5,208.8 L2367.5,217.5Z" fill="#dde4ec"/><path d="M2259,128 C2244,133 2231,142 2222.5,150" fill="none" stroke="#dde4ec" stroke-width="5"/><path d="M2217,146.5 L2218.5,156.5 L2232.5,156 Z" fill="#dde4ec"/><path d="M2313,128 C2328,133 2341,142 2349.5,150" fill="none" stroke="#dde4ec" stroke-width="5"/><path d="M2355.5,144 L2354.5,156.5 L2340.5,156 Z" fill="#dde4ec"/><path d="M2287,157 L2320,168 C2326,170 2329,175 2329,181 L2329,231 C2329,237 2326,242 2320,245 L2292,259 C2287,261 2281,261 2276,258 L2247,241 C2242,238 2239,233 2239,227 L2239,178 C2239,172 2243,167 2249,165 Z" fill="#dde4ec"/><path d="M2255,172 L2284,162 C2288,161 2292,161 2296,163 L2317,175 C2320,177 2319,180 2316,182 L2290,190 C2286,191 2282,191 2279,189 L2256,178 C2253,176 2253,173 2255,172Z" fill="#fff"/><path d="M2244,190 C2244,186 2247,184 2250,186 L2266,197 C2269,199 2270,202 2270,206 L2269,240 C2269,243 2266,245 2263,243 L2248,233 C2245,231 2243,228 2243,224Z" fill="#fff"/><path d="M2283,211 C2283,207 2286,204 2290,203 L2318,196 C2322,195 2324,197 2324,201 L2323,231 C2323,235 2320,238 2316,240 L2290,251 C2286,252 2283,250 2283,246Z" fill="#fff"/><circle cx="2276.5" cy="200" r="6.5" fill="#fff"/><ellipse cx="2271" cy="253.5" rx="7" ry="3.5" fill="#fff"/><ellipse cx="2326" cy="186" rx="3.5" ry="6" fill="#fff"/><text x="2294" y="232" font-family="Liberation Sans" font-size="13.5" fill="#333" transform="rotate(-14 2294 232)">Left</text><text x="2244" y="210" font-family="Liberation Sans" font-size="11" fill="#555" transform="rotate(52 2244 210)">Back</text><text x="0" y="0" font-family="Liberation Sans" font-size="10.5" fill="#555" transform="translate(2284,179) rotate(-58) scale(1,-1)">Top</text><path d="M2337,248.7 L2298,219" stroke="#e06a6a" stroke-width="1.6"/><path d="M2337,248.7 L2274,265.7" stroke="#35a53a" stroke-width="1.8"/><path d="M2337,248.7 L2338.8,185" stroke="#3434d6" stroke-width="1.8"/><text x="2333.5" y="179.5" font-family="Liberation Sans" font-weight="bold" font-size="14.5" fill="#3b3bd8">Z</text><text x="2256.5" y="275" font-family="Liberation Sans" font-weight="bold" font-size="14.5" fill="#2e9e33">Y</text><text x="2287" y="218" font-family="Liberation Sans" font-size="11" fill="#f4b0b0">X</text><path d="M2340.5,280.5 L2351,285.5 L2351,297 L2340.5,302.3 L2330,297 L2330,285.5Z" fill="#bdbdbd" stroke="#333" stroke-width="1.1" stroke-linejoin="round"/><path d="M2330,285.5 L2340.5,290.5 L2351,285.5 M2340.5,290.5 L2340.5,302.3" fill="none" stroke="#333" stroke-width="1.1"/><path d="M2331,286 L2340.5,281.5 L2350,286 L2340.5,290Z" fill="#fff"/><path d="M2341,291 L2350.5,286.3 L2350.5,296.5 L2341,301.5Z" fill="#dcdcdc"/><path d="M2363.3,288.7 L2372.7,288.7 L2368,293.8Z" fill="#222"/></svg>
<svg style="left:0;top:0" width="2398" height="1294" viewBox="0 0 2398 1294"><rect x="2358.5" y="534.4" width="39" height="41.200000000000045" fill="#fff" stroke="#c8c8c8" stroke-width="1"/><rect x="2358.5" y="575.6" width="39" height="41.799999999999955" fill="#fff" stroke="#c8c8c8" stroke-width="1"/><rect x="2358.5" y="617.4" width="39" height="41.0" fill="#fff" stroke="#c8c8c8" stroke-width="1"/><rect x="2358.5" y="658.4" width="39" height="40.60000000000002" fill="#fff" stroke="#c8c8c8" stroke-width="1"/><rect x="2358.5" y="712.9" width="39" height="41.30000000000007" fill="#fff" stroke="#c8c8c8" stroke-width="1"/><rect x="2358.5" y="754.2" width="39" height="41.69999999999993" fill="#fff" stroke="#c8c8c8" stroke-width="1"/><path d="M2366,566 L2377,544.5 L2384,548 L2376,566Z" fill="#777"/><path d="M2372,566 L2386,550 L2391,556 L2383,566Z" fill="#999"/><rect x="2367" y="560.5" width="24.5" height="8" rx="2" fill="#fff" stroke="#555" stroke-width="1.2"/><rect x="2384" y="561.5" width="6.5" height="6" fill="#ccc"/><circle cx="2371.5" cy="564.5" r="1.3" fill="#555"/><g fill="#2d65c8"><rect x="2366" y="586" width="13" height="9.5"/></g><g stroke="#fff" stroke-width="0.8"><path d="M2366,589.2 L2379,589.2 M2366,592.4 L2379,592.4 M2370.3,586 L2370.3,595.5 M2374.6,586 L2374.6,595.5"/></g><path d="M2383,591 L2391,595 L2391,604.5 L2383,609 L2375,604.5 L2375,595Z" fill="#fff" stroke="#333" stroke-width="1.3" stroke-linejoin="round"/><path d="M2375,595 L2383,599.3 L2391,595 M2383,599.3 L2383,609" fill="none" stroke="#333" stroke-width="1.3"/><g fill="#444"><rect x="2366" y="627" width="11" height="8.5"/></g><g stroke="#fff" stroke-width="0.8"><path d="M2366,630 L2377,630 M2366,632.8 L2377,632.8 M2369.7,627 L2369.7,635.5 M2373.4,627 L2373.4,635.5"/></g><path d="M2381,632 L2388,635.5 L2388,644 L2381,647.5 L2374,644 L2374,635.5Z" fill="#fff" stroke="#333" stroke-width="1.2" stroke-linejoin="round"/><path d="M2374,635.5 L2381,639.2 L2388,635.5 M2381,639.2 L2381,647.5" fill="none" stroke="#333" stroke-width="1.2"/><path d="M2370,636 C2368,636 2368,638 2368,640 C2368,642 2367,642.5 2366.5,642.5 C2367,642.5 2368,643 2368,645 C2368,647 2368,649 2370,649" fill="none" stroke="#333" stroke-width="1"/><path d="M2391,636 C2393,636 2393,638 2393,640 C2393,642 2394,642.5 2394.5,642.5 C2394,642.5 2393,643 2393,645 C2393,647 2393,649 2391,649" fill="none" stroke="#333" stroke-width="1"/><g fill="#444"><rect x="2366" y="666.5" width="12.5" height="9.5"/></g><g stroke="#fff" stroke-width="0.9"><path d="M2366,669.7 L2378.5,669.7 M2366,672.9 L2378.5,672.9 M2370.2,666.5 L2370.2,676 M2374.4,666.5 L2374.4,676"/></g><path d="M2368.5,672 C2364,677 2364,686 2368.5,690.5" fill="none" stroke="#333" stroke-width="1.9"/><path d="M2389.5,672 C2394,677 2394,686 2389.5,690.5" fill="none" stroke="#333" stroke-width="1.9"/><text x="2369" y="689.5" font-family="Liberation Serif" font-size="25" font-weight="bold" font-style="italic" fill="#333">x</text><rect x="2364.5" y="719" width="29" height="29" rx="4" fill="#d4d4d4"/><path d="M2379,733.5 L2379,722 A11.5,11.5 0 0 1 2390.5,733.5Z" fill="#4fc3f7"/><path d="M2379,733.5 L2390.5,733.5 A11.5,11.5 0 0 1 2379,745Z" fill="#f0b040"/><path d="M2379,733.5 L2379,745 A11.5,11.5 0 0 1 2367.5,733.5Z" fill="#e06060"/><path d="M2379,733.5 L2367.5,733.5 A11.5,11.5 0 0 1 2379,722Z" fill="#7cc85c"/><path d="M2379,733.5 L2371,725.5 A11.5,11.5 0 0 1 2387,725.5Z" fill="#7cc85c"/><path d="M2379,733.5 L2387,725.5 A11.5,11.5 0 0 1 2387,741.5Z" fill="#4fc3f7"/><path d="M2379,733.5 L2387,741.5 A11.5,11.5 0 0 1 2371,741.5Z" fill="#f0b040"/><path d="M2379,733.5 L2371,741.5 A11.5,11.5 0 0 1 2371,725.5Z" fill="#e06060"/><rect x="2364.5" y="760.5" width="29" height="29" rx="3" fill="#ddd"/><rect x="2366.5" y="762.5" width="25" height="25" fill="#111"/><rect x="2368" y="764" width="22" height="22" fill="#1a5ee8"/><text x="2368.8" y="782.5" font-family="Liberation Serif" font-weight="bold" font-size="16" fill="#f4f4f4" textLength="20.5" lengthAdjust="spacingAndGlyphs">MK</text></svg>
<svg style="left:0;top:0" width="2398" height="1294" viewBox="0 0 2398 1294"><path d="M2276,1239.8 L2282.3,1239.8 M2276,1239.8 L2276,1245.6 L2290,1245.6 C2293.5,1245.6 2295.3,1243.8 2295.3,1240.5 L2295.3,1236" fill="#fff" stroke="#222" stroke-width="1.7" stroke-linejoin="round"/><path d="M2277,1241 L2291,1241 L2291,1245 L2277,1245Z" fill="#fff"/><ellipse cx="2288.7" cy="1236.3" rx="6.4" ry="4" fill="#fff" stroke="#222" stroke-width="1.7"/><ellipse cx="2288.7" cy="1236.3" rx="2.8" ry="1.2" fill="#222"/><path d="M2278.5,1245 L2278.5,1243 M2281,1245 L2281,1242.3 M2283.5,1245 L2283.5,1243 M2286,1245 L2286,1242.3 M2288.5,1245 L2288.5,1243" stroke="#333" stroke-width="0.8"/><path d="M2276.8,1240.3 L2290,1240.3" stroke="#222" stroke-width="1.5"/><path d="M2316.5,1246.3 C2316.5,1237 2322,1231.2 2328.5,1231.2 C2335,1231.2 2340.5,1237 2340.5,1246.3 Z" fill="#fff" stroke="#222" stroke-width="1.6" stroke-linejoin="round"/><path d="M2321.3,1243.2 C2321.5,1238.5 2324.5,1235.5 2328.5,1235.5 C2332.5,1235.5 2335.5,1238.5 2335.7,1243.2 L2331,1243.2 C2330.5,1241.5 2329.5,1240.8 2328.5,1240.8 C2327.5,1240.8 2326.5,1241.5 2326,1243.2Z" fill="#fff" stroke="#222" stroke-width="1.3"/><path d="M2318.5,1244 A10.5,11 0 0 1 2338.5,1244" fill="none" stroke="#555" stroke-width="1" stroke-dasharray="1 1.3"/><rect x="2366.5" y="1230" width="13" height="1.8" fill="#222"/><rect x="2372.2" y="1230" width="1.6" height="15" fill="#222"/><rect x="2364" y="1244.8" width="17.5" height="2.2" fill="#222"/><path d="M2366.5,1231 L2364.2,1241 L2368.8,1241Z M2379.5,1231 L2377.2,1241 L2381.8,1241Z" fill="none" stroke="#222" stroke-width="1.2"/><rect x="2364" y="1240" width="5" height="1.5" fill="#222"/><rect x="2377" y="1240" width="5" height="1.5" fill="#222"/></svg>
<div class="a" style="left:50px;top:1256px;width:2347px;height:1px;background:#d0d0d0;"></div>
<svg style="left:0;top:0" width="900" height="1294" viewBox="0 0 900 1294"><path d="M14.5,1268 L34,1268 a1.2,1.2 0 0 1 1.2,1.2 L35.2,1278.5 L33,1278.5 C32,1275 29,1272.5 25.5,1272.5 C21,1272.5 18,1275.5 17.5,1279.5 L14.5,1279.5 a1.2,1.2 0 0 1 -1.2,-1.2 L13.3,1269.2 a1.2,1.2 0 0 1 1.2,-1.2Z" fill="#333"/><circle cx="26" cy="1279.5" r="4.6" fill="none" stroke="#222" stroke-width="2"/><path d="M29.3,1283 L34.3,1287.5" stroke="#222" stroke-width="2.6"/><rect x="68.8" y="1265" width="3" height="18.5" fill="#666"/><rect x="61" y="1272.8" width="18.5" height="3" fill="#666"/><path d="M92.7,1256 L135,1256 L145.8,1272.8 L135,1290 L92.7,1290 Z" fill="#ebebeb"/><path d="M104,1271 L115.3,1259.5 L120.5,1264.8 L120.5,1261 L123.5,1261 L123.5,1267.8 L127,1271.5 L127,1283 L118,1283 L118,1275.5 L113,1275.5 L113,1283 L104,1283 Z" fill="#666"/><path d="M135,1256 L295.8,1256 L305.8,1272.8 L295.4,1290 L135,1290 L145.8,1272.8 Z" fill="#fff"/><path d="M135,1256 L145.8,1272.8 L135,1290" fill="none" stroke="#d5d5d5" stroke-width="1"/><path d="M308.7,1256 L560,1256 L560,1285 a5,5 0 0 1 -5,5 L313.7,1290 a5,5 0 0 1 -5,-5 Z" fill="#e8e8e8"/><g transform="translate(322,1261)"><path d="M0.7,2.5 L2.5,0.7 L17,0.7 L22.3,5.5 L22.3,22.3 L5.5,22.3 L0.7,17.5 Z" fill="#fff" stroke="#444" stroke-width="1.3" stroke-linejoin="round"/><path d="M0.9,2.5 L2.5,0.9 L12.5,0.9 L15.5,3.8 L15.5,14.5 L5.5,14.5 L0.9,10.5Z" fill="#9a9a9a"/><path d="M5.5,22.3 L5.5,5.5 L22.3,5.5 M0.7,0.9 L5.5,5.5 M5.5,14.5 L15.5,14.5 L15.5,0.9 M0.7,10.5 L5.5,14.5" fill="none" stroke="#444" stroke-width="1.2"/></g><path d="M560.6,1256 L810.6,1256 L810.6,1285 a5,5 0 0 1 -5,5 L565.6,1290 a5,5 0 0 1 -5,-5 Z" fill="#fff"/><path d="M562.5,1289.3 L808.5,1289.3" stroke="#1650b0" stroke-width="2.2"/><g transform="translate(576,1261)" fill="#fff" stroke="#444" stroke-width="1.2" stroke-linejoin="round"><path d="M0.7,7 L2.5,5.5 L9,5.5 L10.5,7 L10.5,22.3 L2.5,22.3 L0.7,20.5Z"/><path d="M2.5,7 L10.5,7 M2.5,7 L2.5,22.3" fill="none"/><path d="M11,1.8 L12.5,0.7 L19.5,0.7 L21.3,2.5 L21.3,22.3 L12.5,22.3 L11,21Z"/><path d="M12.5,2.5 L21.3,2.5 M12.5,2.5 L12.5,22.3" fill="none"/></g></svg>
<div class="a" style="left:163px;top:1258px;width:118px;height:30px;overflow:hidden;"><div class="t" style="left:0.00px;top:5.90px;font-size:17px;color:#555;letter-spacing:0.35px;">Exercise 6 - Direct</div>
</div>
<div class="t" style="left:350.60px;top:1266.00px;font-size:17.3px;color:#666;">Exercise 6 Assembly</div>
<div class="t" style="left:603.50px;top:1266.00px;font-size:17px;color:#333;">Exercise 6 Part Studio</div>
</body></html>
